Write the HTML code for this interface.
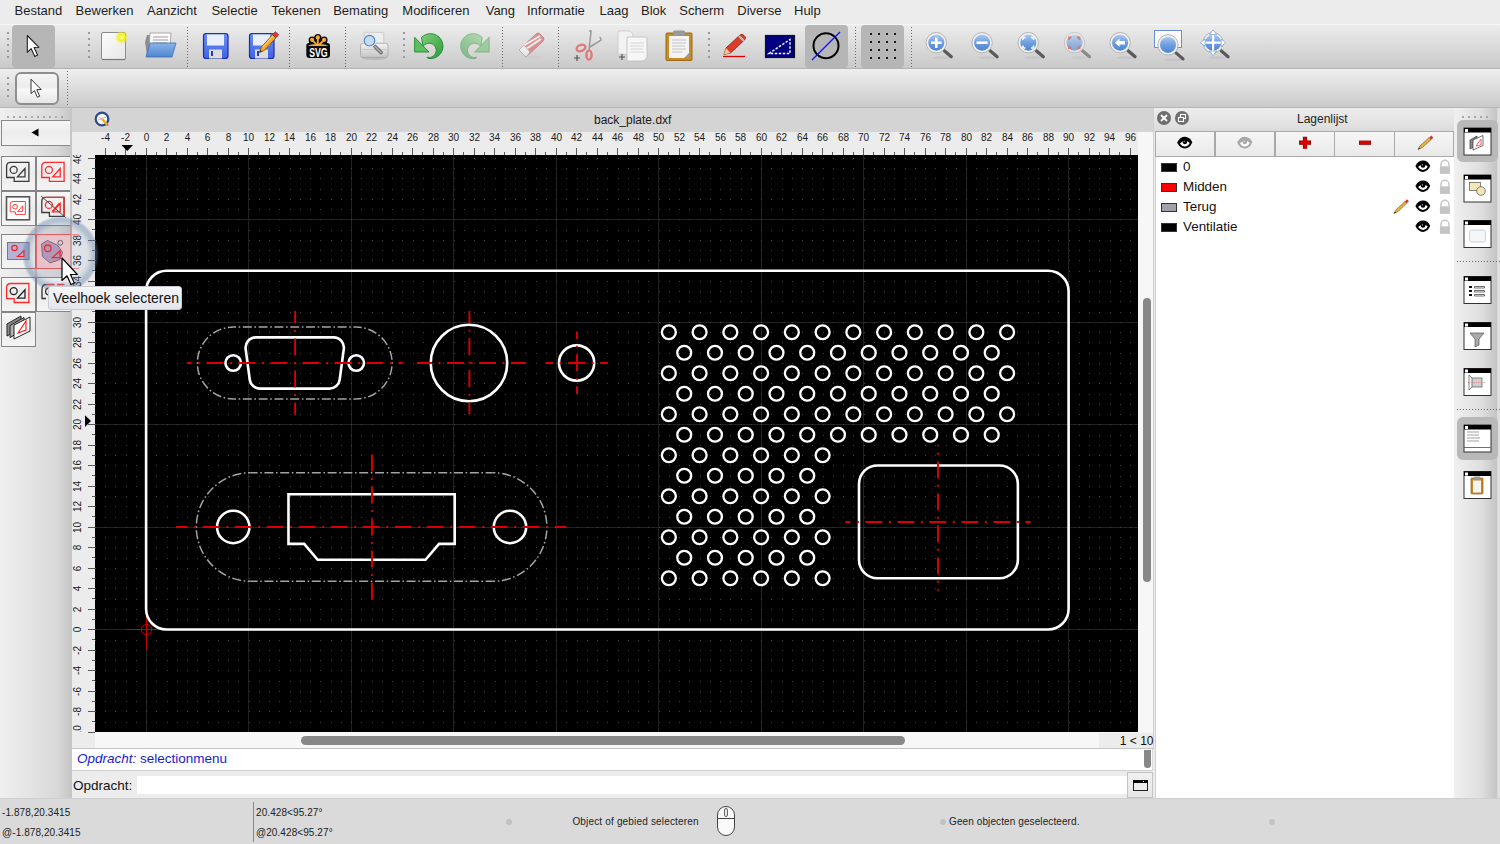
<!DOCTYPE html>
<html><head><meta charset="utf-8"><style>
*{box-sizing:border-box}
body{margin:0;width:1500px;height:844px;overflow:hidden;position:relative;background:#ececec;font-family:"Liberation Sans",sans-serif;color:#000}
.a{position:absolute}
.t{position:absolute;white-space:nowrap;line-height:1}
</style></head><body>
<div class="a" style="left:0px;top:0px;width:1500px;height:24px;background:#ececec"></div><div class="t" style="left:14.6px;top:4px;font-size:13px;color:#1e1e1e;">Bestand</div><div class="t" style="left:75.6px;top:4px;font-size:13px;color:#1e1e1e;">Bewerken</div><div class="t" style="left:147px;top:4px;font-size:13px;color:#1e1e1e;">Aanzicht</div><div class="t" style="left:211.4px;top:4px;font-size:13px;color:#1e1e1e;">Selectie</div><div class="t" style="left:271.6px;top:4px;font-size:13px;color:#1e1e1e;">Tekenen</div><div class="t" style="left:333.2px;top:4px;font-size:13px;color:#1e1e1e;">Bemating</div><div class="t" style="left:402.3px;top:4px;font-size:13px;color:#1e1e1e;">Modificeren</div><div class="t" style="left:485.7px;top:4px;font-size:13px;color:#1e1e1e;">Vang</div><div class="t" style="left:527px;top:4px;font-size:13px;color:#1e1e1e;">Informatie</div><div class="t" style="left:599.5px;top:4px;font-size:13px;color:#1e1e1e;">Laag</div><div class="t" style="left:641px;top:4px;font-size:13px;color:#1e1e1e;">Blok</div><div class="t" style="left:679.3px;top:4px;font-size:13px;color:#1e1e1e;">Scherm</div><div class="t" style="left:737.3px;top:4px;font-size:13px;color:#1e1e1e;">Diverse</div><div class="t" style="left:794px;top:4px;font-size:13px;color:#1e1e1e;">Hulp</div><div class="a" style="left:0px;top:24px;width:1500px;height:45px;background:linear-gradient(#ececec,#c9c9c9);border-top:1px solid #f6f6f6;border-bottom:1px solid #b2b2b2"></div><div class="a" style="left:0px;top:69px;width:1500px;height:39px;background:linear-gradient(#efefef,#cacaca);border-bottom:1px solid #b6b6b6"></div><div class="a" style="left:12px;top:25px;width:43px;height:43px;background:#b6b6b6;border-radius:4px"></div><div class="a" style="left:7px;top:32px;width:2px;height:2px;background:#9a9a9a"></div><div class="a" style="left:7px;top:38px;width:2px;height:2px;background:#9a9a9a"></div><div class="a" style="left:7px;top:44px;width:2px;height:2px;background:#9a9a9a"></div><div class="a" style="left:7px;top:50px;width:2px;height:2px;background:#9a9a9a"></div><div class="a" style="left:7px;top:56px;width:2px;height:2px;background:#9a9a9a"></div><div class="a" style="left:88px;top:32px;width:2px;height:2px;background:#9a9a9a"></div><div class="a" style="left:88px;top:38px;width:2px;height:2px;background:#9a9a9a"></div><div class="a" style="left:88px;top:44px;width:2px;height:2px;background:#9a9a9a"></div><div class="a" style="left:88px;top:50px;width:2px;height:2px;background:#9a9a9a"></div><div class="a" style="left:88px;top:56px;width:2px;height:2px;background:#9a9a9a"></div><div class="a" style="left:403px;top:32px;width:2px;height:2px;background:#9a9a9a"></div><div class="a" style="left:403px;top:38px;width:2px;height:2px;background:#9a9a9a"></div><div class="a" style="left:403px;top:44px;width:2px;height:2px;background:#9a9a9a"></div><div class="a" style="left:403px;top:50px;width:2px;height:2px;background:#9a9a9a"></div><div class="a" style="left:403px;top:56px;width:2px;height:2px;background:#9a9a9a"></div><div class="a" style="left:708px;top:32px;width:2px;height:2px;background:#9a9a9a"></div><div class="a" style="left:708px;top:38px;width:2px;height:2px;background:#9a9a9a"></div><div class="a" style="left:708px;top:44px;width:2px;height:2px;background:#9a9a9a"></div><div class="a" style="left:708px;top:50px;width:2px;height:2px;background:#9a9a9a"></div><div class="a" style="left:708px;top:56px;width:2px;height:2px;background:#9a9a9a"></div><div class="a" style="left:187px;top:27px;width:1px;height:40px;background-image:linear-gradient(#6a6a6a 50%,transparent 50%);background-size:1px 3px"></div><div class="a" style="left:289px;top:27px;width:1px;height:40px;background-image:linear-gradient(#6a6a6a 50%,transparent 50%);background-size:1px 3px"></div><div class="a" style="left:345px;top:27px;width:1px;height:40px;background-image:linear-gradient(#6a6a6a 50%,transparent 50%);background-size:1px 3px"></div><div class="a" style="left:502px;top:27px;width:1px;height:40px;background-image:linear-gradient(#6a6a6a 50%,transparent 50%);background-size:1px 3px"></div><div class="a" style="left:558px;top:27px;width:1px;height:40px;background-image:linear-gradient(#6a6a6a 50%,transparent 50%);background-size:1px 3px"></div><div class="a" style="left:855px;top:27px;width:1px;height:40px;background-image:linear-gradient(#6a6a6a 50%,transparent 50%);background-size:1px 3px"></div><div class="a" style="left:911px;top:27px;width:1px;height:40px;background-image:linear-gradient(#6a6a6a 50%,transparent 50%);background-size:1px 3px"></div><div class="a" style="left:805px;top:25px;width:43px;height:43px;background:#b6b6b6;border-radius:4px"></div><div class="a" style="left:861px;top:25px;width:43px;height:43px;background:#b6b6b6;border-radius:4px"></div><div class="a" style="left:7px;top:77px;width:2px;height:2px;background:#9a9a9a"></div><div class="a" style="left:7px;top:83px;width:2px;height:2px;background:#9a9a9a"></div><div class="a" style="left:7px;top:89px;width:2px;height:2px;background:#9a9a9a"></div><div class="a" style="left:7px;top:95px;width:2px;height:2px;background:#9a9a9a"></div><div class="a" style="left:14.5px;top:72px;width:44px;height:32.5px;background:linear-gradient(#f6f6f6,#ececec 45%,#f8f8f8 55%,#e6e6e6);border:2px solid #8e8e8e;border-radius:6px"></div><div class="a" style="left:67px;top:71px;width:1px;height:35px;background-image:linear-gradient(#6a6a6a 50%,transparent 50%);background-size:1px 3px"></div><svg class="a" style="left:0;top:0" width="1500" height="108" viewBox="0 0 1500 108"><defs>
<linearGradient id="gPaper" x1="0" y1="0" x2="1" y2="1"><stop offset="0" stop-color="#fdfdfd"/><stop offset="1" stop-color="#e6e6e6"/></linearGradient>
<radialGradient id="gGlow"><stop offset="0" stop-color="#ffffc0"/><stop offset="0.45" stop-color="#f4ee20"/><stop offset="1" stop-color="#f4ee20" stop-opacity="0"/></radialGradient>
<linearGradient id="gBlue" x1="0" y1="0" x2="0" y2="1"><stop offset="0" stop-color="#8ab4ea"/><stop offset="1" stop-color="#4f86d0"/></linearGradient>
<linearGradient id="gSave" x1="0" y1="0" x2="0" y2="1"><stop offset="0" stop-color="#6d8ff0"/><stop offset="1" stop-color="#3f63e6"/></linearGradient>
<linearGradient id="gGreen" x1="0" y1="0" x2="1" y2="1"><stop offset="0" stop-color="#7fd07a"/><stop offset="1" stop-color="#2e9a3a"/></linearGradient>
<linearGradient id="gLens" x1="0" y1="0" x2="0" y2="1"><stop offset="0" stop-color="#a9c9f2"/><stop offset="0.5" stop-color="#6f9fe0"/><stop offset="1" stop-color="#4c83d2"/></linearGradient>
<linearGradient id="gPrn" x1="0" y1="0" x2="0" y2="1"><stop offset="0" stop-color="#f4f4f4"/><stop offset="1" stop-color="#c4c4c4"/></linearGradient>
</defs><rect x="101.5" y="32.5" width="24" height="27" rx="1.5" fill="url(#gPaper)" stroke="#8c8c8c" stroke-width="1"/><path d="M102 59.5h23" stroke="#777" stroke-width="1.2"/><circle cx="121.7" cy="37.3" r="7" fill="url(#gGlow)"/><path d="M145 42 L147 35 H155 L156 37 H162 V55 H147 Z" fill="#8d8d8d"/><path d="M150 33 H171 L170 51 H149 Z" fill="#fafafa" stroke="#999" stroke-width="0.8"/><path d="M153 37 H168 M153 40 H168 M153 43 H167" stroke="#bdbdbd" stroke-width="1.5"/><path d="M150 43 H176 L172 57 H146 Z" fill="url(#gBlue)" stroke="#3d6db3" stroke-width="0.8"/><rect x="203.5" y="33.5" width="24.5" height="25" rx="2.5" fill="url(#gSave)" stroke="#1d2ca8" stroke-width="1.2"/><rect x="207" y="34.5" width="17" height="11" fill="#e8eefa"/><rect x="209" y="49.5" width="13" height="9" fill="#dcdcdc"/><rect x="211" y="51" width="2" height="5" fill="#2040c0"/><rect x="249.5" y="33.5" width="24.5" height="25" rx="2.5" fill="url(#gSave)" stroke="#1d2ca8" stroke-width="1.2"/><rect x="253" y="34.5" width="17" height="11" fill="#e8eefa"/><rect x="255" y="49.5" width="13" height="9" fill="#dcdcdc"/><rect x="257" y="51" width="2" height="5" fill="#2040c0"/><g transform="translate(259.5 52.5) rotate(-47.80027916803794)"><path d="M0 0 L5 -2.3 H22.05263902179585 V2.3 H5 Z" fill="#f0a830" stroke="#7a4a10" stroke-width="0.8"/><path d="M6 -1.15 H22.05263902179585" stroke="#ffd070" stroke-width="1"/><rect x="22.05263902179585" y="-2.3" width="4" height="4.6" fill="#e03a3a" stroke="#7a2020" stroke-width="0.6"/><path d="M0 0 L2.5 -1 V1 Z" fill="#222"/></g><g><rect x="306.3" y="42.9" width="23.7" height="15" rx="2.8" fill="#0a0a0a"/><circle cx="317.8" cy="37.6" r="3.6" fill="#0a0a0a"/><circle cx="312.1" cy="40" r="3.5" fill="#0a0a0a"/><circle cx="324.1" cy="40" r="3.5" fill="#0a0a0a"/><path d="M311 44 L317.8 37.6 L324.6 44 Z M309 41 H327 V44 H309 Z" fill="#0a0a0a"/><path d="M312.1 39.8 L316.5 44.5 M317.8 37.4 V44.5 M324.1 39.8 L319.5 44.5" stroke="#f7ab36" stroke-width="1.8" stroke-linecap="round"/><circle cx="317.8" cy="37.4" r="2.1" fill="#f7ab36"/><circle cx="312.1" cy="39.8" r="2.1" fill="#f7ab36"/><circle cx="324.1" cy="39.8" r="2.1" fill="#f7ab36"/><path d="M307.7 45.9 Q310 44.3 314 44.3 H322 Q326 44.3 328.3 45.9 Z" fill="#f7ab36"/><text x="309.2" y="56.9" textLength="18.4" lengthAdjust="spacingAndGlyphs" font-family="Liberation Sans" font-weight="bold" font-size="13" fill="#fff">SVG</text></g><rect x="364.3" y="32.3" width="19.5" height="13.5" rx="1" fill="#eeeeee" stroke="#c4c4c4" stroke-width="0.8"/><ellipse cx="374" cy="58.3" rx="12" ry="1.6" fill="#9a9a9a" opacity="0.45"/><path d="M360.5 46 Q360.5 43.3 363 43.3 H385.5 Q388 43.3 388 46 V55.5 Q388 57.4 386 57.4 H362.5 Q360.5 57.4 360.5 55.5 Z" fill="url(#gPrn)" stroke="#a4a4a4" stroke-width="0.8"/><path d="M362 49.5 H386" stroke="#c0c0c0" stroke-width="0.8"/><path d="M375 46.5 L381 52.5" stroke="#555" stroke-width="3.6" stroke-linecap="round"/><path d="M375 46.5 L381 52.5" stroke="#a8a8a8" stroke-width="2" stroke-linecap="round"/><circle cx="369.5" cy="40.7" r="6.6" fill="#fafafa" stroke="#d8d8d8" stroke-width="0.6"/><circle cx="369.5" cy="40.7" r="5.3" fill="#c6daf2" stroke="#4f86cf" stroke-width="1.2"/><g id="undo"><path d="M421.5 37.5 A12.5 12.5 0 1 1 428 58.4 L427 57.3 A7.2 7.2 0 1 0 423 46.5 Z" fill="url(#gGreen)" stroke="#1f8a30" stroke-width="0.9" stroke-linejoin="round"/><path d="M414.6 37.3 V52 H429 Z" fill="#5cc060" stroke="#1f8a30" stroke-width="0.9" stroke-linejoin="round"/></g><g opacity="0.5" transform="translate(903.7 0) scale(-1 1)"><path d="M421.5 37.5 A12.5 12.5 0 1 1 428 58.4 L427 57.3 A7.2 7.2 0 1 0 423 46.5 Z" fill="url(#gGreen)" stroke="#1f8a30" stroke-width="0.9"/><path d="M414.6 37.3 V52 H429 Z" fill="#5cc060" stroke="#1f8a30" stroke-width="0.9"/></g><g opacity="0.7"><ellipse cx="533" cy="57" rx="10" ry="1.5" fill="#ccc"/><path d="M519 50 L536 34 Q538 32 540 34 L543 37 Q545 39 543 41 L526 57 Z" fill="#e07070" stroke="#b05050" stroke-width="0.8"/><path d="M522 47 L539 31.5 L544 36.5 L527 52 Z" fill="#f8f0f0" opacity="0.0"/><path d="M523 46 L540 36 M526 49 L541 39" stroke="#fbfbfb" stroke-width="2"/><path d="M519 50 L524 45 L530 52 L526 57 Z" fill="#f4f4f4" stroke="#999" stroke-width="0.7"/></g><path d="M589 31 L591 31 L589 50 M600 37 L601 40 L590 47" stroke="#9a9a9a" stroke-width="1.6" fill="#f0f0f0"/><ellipse cx="581" cy="48" rx="4.5" ry="3" fill="none" stroke="#e07a7a" stroke-width="2.4" transform="rotate(-20 581 48)"/><ellipse cx="589" cy="55" rx="2.6" ry="4.6" fill="none" stroke="#e07a7a" stroke-width="2.4"/><path d="M574 58 H580 M577 55 V61" stroke="#555" stroke-width="1.2"/><path d="M618 31 H630 L633 34 V54 H618 Z" fill="#f2f2f2" stroke="#c8c8c8" stroke-width="0.8"/><path d="M627 37 H647 V57 L644 61 H627 Z" fill="#f6f6f6" stroke="#bdbdbd" stroke-width="0.8"/><path d="M630 43 H644 M630 46 H644 M630 49 H643 M630 52 H644" stroke="#d0d0d0" stroke-width="0.8"/><path d="M619 57 H625 M622 54 V60" stroke="#555" stroke-width="1.2"/><rect x="666" y="33" width="26" height="27.5" rx="1" fill="#c98a2a" stroke="#9a6a1a" stroke-width="1"/><rect x="669" y="36" width="20" height="22" fill="#f4f4f4"/><path d="M672 40 H686 M672 43 H686 M672 46 H685 M672 49 H686 M672 52 H682" stroke="#bdbdbd" stroke-width="0.9"/><rect x="673" y="30.5" width="12" height="5" rx="1.5" fill="#9a9a9a"/><path d="M684 58 L689 53 V58 Z" fill="#9a9a9a"/><path d="M723 56.5 H745" stroke="#e00000" stroke-width="1.3"/><path d="M724 54.5 L726 48 L740 35 Q742 33.5 744 35.5 L745 36.5 Q746 38.5 744.5 40 L730.5 53 Z" fill="#e03a2a" stroke="#7a2a10" stroke-width="0.8"/><path d="M724 54.5 L726 48 L730.5 53 Z" fill="#f0c890"/><path d="M739 36 L744 41" stroke="#c0c0c0" stroke-width="2"/><rect x="765.5" y="35.5" width="29" height="22" fill="#000080" stroke="#111" stroke-width="1.2"/><path d="M769 53.5 L790 39.5 V53.5 Z" fill="none" stroke="#fff" stroke-width="1.4" stroke-dasharray="2.5 1.5"/><circle cx="826" cy="45.7" r="12.5" fill="none" stroke="#000" stroke-width="2"/><path d="M812 60 L840 32" stroke="#1010ff" stroke-width="1.2"/><rect x="870" y="33" width="2" height="2" fill="#111"/><rect x="870" y="41" width="2" height="2" fill="#111"/><rect x="870" y="49" width="2" height="2" fill="#111"/><rect x="870" y="57" width="2" height="2" fill="#111"/><rect x="878" y="33" width="2" height="2" fill="#111"/><rect x="878" y="41" width="2" height="2" fill="#111"/><rect x="878" y="49" width="2" height="2" fill="#111"/><rect x="878" y="57" width="2" height="2" fill="#111"/><rect x="886" y="33" width="2" height="2" fill="#111"/><rect x="886" y="41" width="2" height="2" fill="#111"/><rect x="886" y="49" width="2" height="2" fill="#111"/><rect x="886" y="57" width="2" height="2" fill="#111"/><rect x="894" y="33" width="2" height="2" fill="#111"/><rect x="894" y="41" width="2" height="2" fill="#111"/><rect x="894" y="49" width="2" height="2" fill="#111"/><rect x="894" y="57" width="2" height="2" fill="#111"/><g opacity="1.0"><ellipse cx="941.3" cy="57.7" rx="9" ry="1.5" fill="#bbb" opacity="0.5"/><path d="M944.3 50.7 L951.3 56.7" stroke="#5a5a5a" stroke-width="3.2" stroke-linecap="round"/><circle cx="936.3" cy="42.7" r="10.2" fill="#efefef" stroke="#b4b4b4" stroke-width="1"/><circle cx="936.3" cy="42.7" r="8" fill="url(#gLens)"/><path d="M931 42.7 H941.6 M936.3 37.4 V48" stroke="#fff" stroke-width="2.6"/></g><g opacity="1.0"><ellipse cx="987.1" cy="57.7" rx="9" ry="1.5" fill="#bbb" opacity="0.5"/><path d="M990.1 50.7 L997.1 56.7" stroke="#5a5a5a" stroke-width="3.2" stroke-linecap="round"/><circle cx="982.1" cy="42.7" r="10.2" fill="#efefef" stroke="#b4b4b4" stroke-width="1"/><circle cx="982.1" cy="42.7" r="8" fill="url(#gLens)"/><path d="M976.5 42.7 H987.7" stroke="#fff" stroke-width="2.6"/></g><g opacity="1.0"><ellipse cx="1033.3" cy="57.7" rx="9" ry="1.5" fill="#bbb" opacity="0.5"/><path d="M1036.3 50.7 L1043.3 56.7" stroke="#5a5a5a" stroke-width="3.2" stroke-linecap="round"/><circle cx="1028.3" cy="42.7" r="10.2" fill="#efefef" stroke="#b4b4b4" stroke-width="1"/><circle cx="1028.3" cy="42.7" r="8" fill="url(#gLens)"/><path d="M1023 40 V37.5 H1025.5 M1031 37.5 H1033.5 V40 M1033.5 45.5 V48 H1031 M1025.5 48 H1023 V45.5" stroke="#fff" stroke-width="1.6" fill="none"/></g><g opacity="0.6"><ellipse cx="1079.5" cy="57.7" rx="9" ry="1.5" fill="#bbb" opacity="0.5"/><path d="M1082.5 50.7 L1089.5 56.7" stroke="#5a5a5a" stroke-width="3.2" stroke-linecap="round"/><circle cx="1074.5" cy="42.7" r="10.2" fill="#efefef" stroke="#b4b4b4" stroke-width="1"/><circle cx="1074.5" cy="42.7" r="8" fill="url(#gLens)"/><path d="M1069 40 V37.5 H1071.5 M1077 37.5 H1079.5 V40 M1079.5 45.5 V48 H1077 M1071.5 48 H1069 V45.5" stroke="#e03030" stroke-width="1.8" fill="none"/></g><g opacity="1.0"><ellipse cx="1125.1" cy="57.7" rx="9" ry="1.5" fill="#bbb" opacity="0.5"/><path d="M1128.1 50.7 L1135.1 56.7" stroke="#5a5a5a" stroke-width="3.2" stroke-linecap="round"/><circle cx="1120.1" cy="42.7" r="10.2" fill="#efefef" stroke="#b4b4b4" stroke-width="1"/><circle cx="1120.1" cy="42.7" r="8" fill="url(#gLens)"/><path d="M1115 42.7 L1119.5 38.5 V41 H1125 V44.5 H1119.5 V47 Z" fill="#fff"/></g><rect x="1154.5" y="30.5" width="27" height="17" fill="#fafafa" stroke="#6a8fd0" stroke-width="1"/><g opacity="1.0"><ellipse cx="1173" cy="59.9" rx="9" ry="1.5" fill="#bbb" opacity="0.5"/><path d="M1176 52.9 L1183 58.9" stroke="#5a5a5a" stroke-width="3.2" stroke-linecap="round"/><circle cx="1168" cy="44.9" r="10.2" fill="#efefef" stroke="#b4b4b4" stroke-width="1"/><circle cx="1168" cy="44.9" r="8" fill="url(#gLens)"/></g><g opacity="1.0"><ellipse cx="1218.1" cy="57.7" rx="9" ry="1.5" fill="#bbb" opacity="0.5"/><path d="M1221.1 50.7 L1228.1 56.7" stroke="#5a5a5a" stroke-width="3.2" stroke-linecap="round"/><circle cx="1213.1" cy="42.7" r="10.2" fill="#efefef" stroke="#b4b4b4" stroke-width="1"/><circle cx="1213.1" cy="42.7" r="8" fill="url(#gLens)"/><path d="M1213.1 31 V54.5 M1201.5 42.7 H1224.7" stroke="#fff" stroke-width="2.2"/><path d="M1213.1 30 L1209.5 34.5 H1216.7 Z M1213.1 55.5 L1209.5 51 H1216.7 Z M1200.5 42.7 L1205 39 V46.4 Z M1225.7 42.7 L1221.2 39 V46.4 Z" fill="#fff" stroke="#5a86d0" stroke-width="0.6"/></g><path d="M31 79.2 V93.6 L34.4 90.6 L37.4 97.2 L39.7 96.2 L36.8 89.7 L41.2 89.5 Z" fill="#fff" stroke="#333" stroke-width="1" stroke-linejoin="round"/><path d="M27.3 35.5 V52.3 L31.2 48.7 L34.8 56.4 L37.6 55.1 L34.1 47.5 L39 47.3 Z" fill="#fff" stroke="#222" stroke-width="1.1" stroke-linejoin="round"/></svg><div class="a" style="left:0px;top:108px;width:72px;height:690px;background:linear-gradient(90deg,#f0f0f0,#d8d8d8 80%,#c4c4c4)"></div><svg class="a" style="left:0;top:108px" width="72" height="690" viewBox="0 108 72 690"><defs><linearGradient id="gBtn" x1="0" y1="0" x2="0" y2="1"><stop offset="0" stop-color="#f6f6f6"/><stop offset="0.5" stop-color="#ececec"/><stop offset="1" stop-color="#f4f4f4"/></linearGradient></defs><rect x="7" y="116" width="2" height="2" fill="#a8a8a8"/><rect x="13" y="116" width="2" height="2" fill="#a8a8a8"/><rect x="19" y="116" width="2" height="2" fill="#a8a8a8"/><rect x="25" y="116" width="2" height="2" fill="#a8a8a8"/><rect x="31" y="116" width="2" height="2" fill="#a8a8a8"/><rect x="37" y="116" width="2" height="2" fill="#a8a8a8"/><rect x="43" y="116" width="2" height="2" fill="#a8a8a8"/><rect x="49" y="116" width="2" height="2" fill="#a8a8a8"/><rect x="55" y="116" width="2" height="2" fill="#a8a8a8"/><rect x="61" y="116" width="2" height="2" fill="#a8a8a8"/><rect x="1.5" y="120.5" width="69" height="25" fill="url(#gBtn)" stroke="#8a8a8a" stroke-width="1"/><path d="M31.5 132.5 L38.5 128.5 V136.5 Z" fill="#000"/><rect x="1.5" y="156.5" width="34" height="34" fill="url(#gBtn)" stroke="#858585" stroke-width="1"/><rect x="36.5" y="156.5" width="34" height="34" fill="url(#gBtn)" stroke="#858585" stroke-width="1"/><rect x="1.5" y="191.5" width="34" height="34" fill="url(#gBtn)" stroke="#858585" stroke-width="1"/><rect x="36.5" y="191.5" width="34" height="34" fill="url(#gBtn)" stroke="#858585" stroke-width="1"/><rect x="1.5" y="234.5" width="34" height="34" fill="url(#gBtn)" stroke="#858585" stroke-width="1"/><rect x="36.5" y="234.5" width="34" height="34" fill="#f3c9ca" stroke="#e07070" stroke-width="1"/><rect x="1.5" y="277.5" width="34" height="34" fill="url(#gBtn)" stroke="#858585" stroke-width="1"/><rect x="36.5" y="277.5" width="34" height="34" fill="url(#gBtn)" stroke="#858585" stroke-width="1"/><rect x="1.5" y="312.5" width="34" height="34" fill="url(#gBtn)" stroke="#858585" stroke-width="1"/><path d="M10.60 162.30L28.90 162.30L28.90 181.30L14.20 181.30L14.20 177.50L6.60 177.50L6.60 166.30Q6.60 162.30 10.60 162.30Z" fill="none" stroke="#3a3a3a" stroke-width="1.3"/><circle cx="13.70" cy="169.90" r="3.50" fill="none" stroke="#3a3a3a" stroke-width="1.3"/><path d="M25.00 168.50 L25.00 176.90 L17.50 176.90 Z" fill="none" stroke="#3a3a3a" stroke-width="1.3" stroke-linejoin="miter"/><path d="M45.80 162.30L64.10 162.30L64.10 181.30L49.40 181.30L49.40 177.50L41.80 177.50L41.80 166.30Q41.80 162.30 45.80 162.30Z" fill="none" stroke="#ff2a2a" stroke-width="1.3"/><circle cx="48.90" cy="169.90" r="3.50" fill="none" stroke="#ff2a2a" stroke-width="1.3"/><path d="M60.20 168.50 L60.20 176.90 L52.70 176.90 Z" fill="none" stroke="#ff2a2a" stroke-width="1.3" stroke-linejoin="miter"/><rect x="6.5" y="196.8" width="23" height="23" fill="#fff" stroke="#555" stroke-width="1.6"/><path d="M12.92 201.50L25.36 201.50L25.36 214.42L15.37 214.42L15.37 211.84L10.20 211.84L10.20 204.22Q10.20 201.50 12.92 201.50Z" fill="none" stroke="#ff4040" stroke-width="1"/><circle cx="15.03" cy="206.67" r="2.38" fill="none" stroke="#ff4040" stroke-width="1"/><path d="M22.71 205.72 L22.71 211.43 L17.61 211.43 Z" fill="none" stroke="#ff4040" stroke-width="1" stroke-linejoin="miter"/><path d="M45.80 197.30L64.10 197.30L64.10 216.30L49.40 216.30L49.40 212.50L41.80 212.50L41.80 201.30Q41.80 197.30 45.80 197.30Z" fill="none" stroke="#3a3a3a" stroke-width="1.3"/><circle cx="48.90" cy="204.90" r="3.50" fill="none" stroke="#ff2a2a" stroke-width="1.3"/><path d="M60.20 203.50 L60.20 211.90 L52.70 211.90 Z" fill="none" stroke="#ff2a2a" stroke-width="1.3" stroke-linejoin="miter"/><path d="M44 197.3 H64 V216 M59.5 203 L52 211.6" stroke="#ff2a2a" stroke-width="1.3" fill="none"/><path d="M41 196 L65.5 217.5" stroke="#444" stroke-width="1"/><rect x="7.5" y="242.5" width="21.5" height="17" fill="#b4b4d8" stroke="#7a7a7a" stroke-width="1"/><circle cx="14.5" cy="248" r="2.7" fill="none" stroke="#ff2020" stroke-width="1.2"/><path d="M24 250.5 V256.5 H17.5 Z" fill="none" stroke="#ff2020" stroke-width="1.2"/><path d="M41.5 244 L47.5 240.5 L58 245.5 L62.5 252.5 L60 259.5 L50 263 L42.5 256.5 Z" fill="#b69ab8" stroke="#7a5a7a" stroke-width="0.9"/><circle cx="47.8" cy="248.3" r="3.3" fill="none" stroke="#ff2020" stroke-width="1.3"/><path d="M60 250.8 V257.6 H52.5 Z" fill="none" stroke="#ff2020" stroke-width="1.3"/><circle cx="60.3" cy="242.8" r="2.4" fill="none" stroke="#666" stroke-width="1"/><path d="M10.60 283.50L28.90 283.50L28.90 302.50L14.20 302.50L14.20 298.70L6.60 298.70L6.60 287.50Q6.60 283.50 10.60 283.50Z" fill="none" stroke="#ff2a2a" stroke-width="1.3"/><circle cx="13.70" cy="291.10" r="3.50" fill="none" stroke="#222" stroke-width="1.3"/><path d="M25.00 289.70 L25.00 298.10 L17.50 298.10 Z" fill="none" stroke="#222" stroke-width="1.3" stroke-linejoin="miter"/><path d="M46.5 284.5 Q42 284.5 42 289 V298.5 H46" fill="none" stroke="#333" stroke-width="1.3"/><path d="M46.5 284.5 H64.5" stroke="#ff3030" stroke-width="1.3" stroke-dasharray="8 2.5"/><circle cx="49" cy="291.5" r="3.4" fill="none" stroke="#333" stroke-width="1.3"/><path d="M7 336 V324 L21 316 V328 Z" fill="#8a8a8a" stroke="#222" stroke-width="1"/><path d="M10 337.5 V325.5 L24 317.5 V329.5 Z" fill="#b0b0b0" stroke="#222" stroke-width="1"/><path d="M14 339 V325 L30 317 V331 Z" fill="#fff" stroke="#222" stroke-width="1"/><path d="M18 333 L26 321 V330 Z" fill="none" stroke="#ff2020" stroke-width="1.2"/></svg><div class="a" style="left:70px;top:108px;width:1084px;height:24px;background:#d4d4d4;border-left:2px solid #c6c6c6"></div><div class="t" style="left:594px;top:114px;font-size:12px;color:#1a1a1a;">back_plate.dxf</div><svg class="a" style="left:94px;top:111px" width="16" height="16" viewBox="0 0 16 16"><circle cx="8" cy="8" r="6.3" fill="#f4f4f4" stroke="#2a4a8a" stroke-width="2.2"/><path d="M4 9 L12 6 M5 6 L11 11" stroke="#d08080" stroke-width="0.6"/><path d="M8 8 L13.5 14" stroke="#e8b020" stroke-width="2.2"/><circle cx="13.6" cy="14" r="1.1" fill="#e07070"/></svg><div class="a" style="left:70px;top:132px;width:1084px;height:23px;background:#ececec;border-left:2px solid #c6c6c6"></div><div class="a" style="left:70px;top:155px;width:25px;height:593px;background:#ececec;border-left:2px solid #c6c6c6"></div><div class="a" style="left:1138px;top:132px;width:16px;height:616px;background:#f7f7f7"></div><div class="a" style="left:1153px;top:108px;width:2px;height:690px;background:#d0d0d0"></div><div class="a" style="left:95px;top:732px;width:1043px;height:16px;background:#f7f7f7"></div><div class="a" style="left:1143px;top:298px;width:8px;height:284px;background:#888;border-radius:4px"></div><div class="a" style="left:301px;top:736px;width:604px;height:9px;background:#888;border-radius:4.5px"></div><div class="a" style="left:1099px;top:733px;width:54px;height:15px;background:#ececec"></div><div class="t" style="right:346.5px;top:734.5px;font-size:12px;color:#111">1 &lt; 10</div><svg class="a" style="left:95px;top:155px" width="1043" height="577" viewBox="95 155 1043 577"><rect x="95" y="155" width="1043" height="577" fill="#000"/><path d="M146.5 155V732M248.5 155V732M351.5 155V732M453.5 155V732M556.5 155V732M658.5 155V732M761.5 155V732M863.5 155V732M966.5 155V732M1068.5 155V732M95 629.5H1138M95 527.5H1138M95 424.5H1138M95 322.5H1138M95 219.5H1138" stroke="#222" stroke-width="1" fill="none"/>
<path d="M95 722h1v1h-1zm10 0h1v1h-1zm10 0h1v1h-1zm11 0h1v1h-1zm10 0h1v1h-1zm10 0h1v1h-1zm10 0h1v1h-1zm11 0h1v1h-1zm10 0h1v1h-1zm10 0h1v1h-1zm10 0h1v1h-1zm11 0h1v1h-1zm10 0h1v1h-1zm10 0h1v1h-1zm10 0h1v1h-1zm11 0h1v1h-1zm10 0h1v1h-1zm10 0h1v1h-1zm10 0h1v1h-1zm11 0h1v1h-1zm10 0h1v1h-1zm10 0h1v1h-1zm10 0h1v1h-1zm11 0h1v1h-1zm10 0h1v1h-1zm10 0h1v1h-1zm10 0h1v1h-1zm11 0h1v1h-1zm10 0h1v1h-1zm10 0h1v1h-1zm10 0h1v1h-1zm11 0h1v1h-1zm10 0h1v1h-1zm10 0h1v1h-1zm10 0h1v1h-1zm11 0h1v1h-1zm10 0h1v1h-1zm10 0h1v1h-1zm10 0h1v1h-1zm11 0h1v1h-1zm10 0h1v1h-1zm10 0h1v1h-1zm10 0h1v1h-1zm11 0h1v1h-1zm10 0h1v1h-1zm10 0h1v1h-1zm10 0h1v1h-1zm11 0h1v1h-1zm10 0h1v1h-1zm10 0h1v1h-1zm10 0h1v1h-1zm11 0h1v1h-1zm10 0h1v1h-1zm10 0h1v1h-1zm10 0h1v1h-1zm11 0h1v1h-1zm10 0h1v1h-1zm10 0h1v1h-1zm10 0h1v1h-1zm11 0h1v1h-1zm10 0h1v1h-1zm10 0h1v1h-1zm10 0h1v1h-1zm11 0h1v1h-1zm10 0h1v1h-1zm10 0h1v1h-1zm10 0h1v1h-1zm11 0h1v1h-1zm10 0h1v1h-1zm10 0h1v1h-1zm10 0h1v1h-1zm11 0h1v1h-1zm10 0h1v1h-1zm10 0h1v1h-1zm10 0h1v1h-1zm11 0h1v1h-1zm10 0h1v1h-1zm10 0h1v1h-1zm10 0h1v1h-1zm11 0h1v1h-1zm10 0h1v1h-1zm10 0h1v1h-1zm10 0h1v1h-1zm11 0h1v1h-1zm10 0h1v1h-1zm10 0h1v1h-1zm10 0h1v1h-1zm11 0h1v1h-1zm10 0h1v1h-1zm10 0h1v1h-1zm10 0h1v1h-1zm11 0h1v1h-1zm10 0h1v1h-1zm10 0h1v1h-1zm10 0h1v1h-1zm11 0h1v1h-1zm10 0h1v1h-1zm10 0h1v1h-1zm10 0h1v1h-1zm11 0h1v1h-1zm10 0h1v1h-1zm10 0h1v1h-1zM95 711h1v1h-1zm10 0h1v1h-1zm10 0h1v1h-1zm11 0h1v1h-1zm10 0h1v1h-1zm10 0h1v1h-1zm10 0h1v1h-1zm11 0h1v1h-1zm10 0h1v1h-1zm10 0h1v1h-1zm10 0h1v1h-1zm11 0h1v1h-1zm10 0h1v1h-1zm10 0h1v1h-1zm10 0h1v1h-1zm11 0h1v1h-1zm10 0h1v1h-1zm10 0h1v1h-1zm10 0h1v1h-1zm11 0h1v1h-1zm10 0h1v1h-1zm10 0h1v1h-1zm10 0h1v1h-1zm11 0h1v1h-1zm10 0h1v1h-1zm10 0h1v1h-1zm10 0h1v1h-1zm11 0h1v1h-1zm10 0h1v1h-1zm10 0h1v1h-1zm10 0h1v1h-1zm11 0h1v1h-1zm10 0h1v1h-1zm10 0h1v1h-1zm10 0h1v1h-1zm11 0h1v1h-1zm10 0h1v1h-1zm10 0h1v1h-1zm10 0h1v1h-1zm11 0h1v1h-1zm10 0h1v1h-1zm10 0h1v1h-1zm10 0h1v1h-1zm11 0h1v1h-1zm10 0h1v1h-1zm10 0h1v1h-1zm10 0h1v1h-1zm11 0h1v1h-1zm10 0h1v1h-1zm10 0h1v1h-1zm10 0h1v1h-1zm11 0h1v1h-1zm10 0h1v1h-1zm10 0h1v1h-1zm10 0h1v1h-1zm11 0h1v1h-1zm10 0h1v1h-1zm10 0h1v1h-1zm10 0h1v1h-1zm11 0h1v1h-1zm10 0h1v1h-1zm10 0h1v1h-1zm10 0h1v1h-1zm11 0h1v1h-1zm10 0h1v1h-1zm10 0h1v1h-1zm10 0h1v1h-1zm11 0h1v1h-1zm10 0h1v1h-1zm10 0h1v1h-1zm10 0h1v1h-1zm11 0h1v1h-1zm10 0h1v1h-1zm10 0h1v1h-1zm10 0h1v1h-1zm11 0h1v1h-1zm10 0h1v1h-1zm10 0h1v1h-1zm10 0h1v1h-1zm11 0h1v1h-1zm10 0h1v1h-1zm10 0h1v1h-1zm10 0h1v1h-1zm11 0h1v1h-1zm10 0h1v1h-1zm10 0h1v1h-1zm10 0h1v1h-1zm11 0h1v1h-1zm10 0h1v1h-1zm10 0h1v1h-1zm10 0h1v1h-1zm11 0h1v1h-1zm10 0h1v1h-1zm10 0h1v1h-1zm10 0h1v1h-1zm11 0h1v1h-1zm10 0h1v1h-1zm10 0h1v1h-1zm10 0h1v1h-1zm11 0h1v1h-1zm10 0h1v1h-1zm10 0h1v1h-1zM95 701h1v1h-1zm10 0h1v1h-1zm10 0h1v1h-1zm11 0h1v1h-1zm10 0h1v1h-1zm10 0h1v1h-1zm10 0h1v1h-1zm11 0h1v1h-1zm10 0h1v1h-1zm10 0h1v1h-1zm10 0h1v1h-1zm11 0h1v1h-1zm10 0h1v1h-1zm10 0h1v1h-1zm10 0h1v1h-1zm11 0h1v1h-1zm10 0h1v1h-1zm10 0h1v1h-1zm10 0h1v1h-1zm11 0h1v1h-1zm10 0h1v1h-1zm10 0h1v1h-1zm10 0h1v1h-1zm11 0h1v1h-1zm10 0h1v1h-1zm10 0h1v1h-1zm10 0h1v1h-1zm11 0h1v1h-1zm10 0h1v1h-1zm10 0h1v1h-1zm10 0h1v1h-1zm11 0h1v1h-1zm10 0h1v1h-1zm10 0h1v1h-1zm10 0h1v1h-1zm11 0h1v1h-1zm10 0h1v1h-1zm10 0h1v1h-1zm10 0h1v1h-1zm11 0h1v1h-1zm10 0h1v1h-1zm10 0h1v1h-1zm10 0h1v1h-1zm11 0h1v1h-1zm10 0h1v1h-1zm10 0h1v1h-1zm10 0h1v1h-1zm11 0h1v1h-1zm10 0h1v1h-1zm10 0h1v1h-1zm10 0h1v1h-1zm11 0h1v1h-1zm10 0h1v1h-1zm10 0h1v1h-1zm10 0h1v1h-1zm11 0h1v1h-1zm10 0h1v1h-1zm10 0h1v1h-1zm10 0h1v1h-1zm11 0h1v1h-1zm10 0h1v1h-1zm10 0h1v1h-1zm10 0h1v1h-1zm11 0h1v1h-1zm10 0h1v1h-1zm10 0h1v1h-1zm10 0h1v1h-1zm11 0h1v1h-1zm10 0h1v1h-1zm10 0h1v1h-1zm10 0h1v1h-1zm11 0h1v1h-1zm10 0h1v1h-1zm10 0h1v1h-1zm10 0h1v1h-1zm11 0h1v1h-1zm10 0h1v1h-1zm10 0h1v1h-1zm10 0h1v1h-1zm11 0h1v1h-1zm10 0h1v1h-1zm10 0h1v1h-1zm10 0h1v1h-1zm11 0h1v1h-1zm10 0h1v1h-1zm10 0h1v1h-1zm10 0h1v1h-1zm11 0h1v1h-1zm10 0h1v1h-1zm10 0h1v1h-1zm10 0h1v1h-1zm11 0h1v1h-1zm10 0h1v1h-1zm10 0h1v1h-1zm10 0h1v1h-1zm11 0h1v1h-1zm10 0h1v1h-1zm10 0h1v1h-1zm10 0h1v1h-1zm11 0h1v1h-1zm10 0h1v1h-1zm10 0h1v1h-1zM95 691h1v1h-1zm10 0h1v1h-1zm10 0h1v1h-1zm11 0h1v1h-1zm10 0h1v1h-1zm10 0h1v1h-1zm10 0h1v1h-1zm11 0h1v1h-1zm10 0h1v1h-1zm10 0h1v1h-1zm10 0h1v1h-1zm11 0h1v1h-1zm10 0h1v1h-1zm10 0h1v1h-1zm10 0h1v1h-1zm11 0h1v1h-1zm10 0h1v1h-1zm10 0h1v1h-1zm10 0h1v1h-1zm11 0h1v1h-1zm10 0h1v1h-1zm10 0h1v1h-1zm10 0h1v1h-1zm11 0h1v1h-1zm10 0h1v1h-1zm10 0h1v1h-1zm10 0h1v1h-1zm11 0h1v1h-1zm10 0h1v1h-1zm10 0h1v1h-1zm10 0h1v1h-1zm11 0h1v1h-1zm10 0h1v1h-1zm10 0h1v1h-1zm10 0h1v1h-1zm11 0h1v1h-1zm10 0h1v1h-1zm10 0h1v1h-1zm10 0h1v1h-1zm11 0h1v1h-1zm10 0h1v1h-1zm10 0h1v1h-1zm10 0h1v1h-1zm11 0h1v1h-1zm10 0h1v1h-1zm10 0h1v1h-1zm10 0h1v1h-1zm11 0h1v1h-1zm10 0h1v1h-1zm10 0h1v1h-1zm10 0h1v1h-1zm11 0h1v1h-1zm10 0h1v1h-1zm10 0h1v1h-1zm10 0h1v1h-1zm11 0h1v1h-1zm10 0h1v1h-1zm10 0h1v1h-1zm10 0h1v1h-1zm11 0h1v1h-1zm10 0h1v1h-1zm10 0h1v1h-1zm10 0h1v1h-1zm11 0h1v1h-1zm10 0h1v1h-1zm10 0h1v1h-1zm10 0h1v1h-1zm11 0h1v1h-1zm10 0h1v1h-1zm10 0h1v1h-1zm10 0h1v1h-1zm11 0h1v1h-1zm10 0h1v1h-1zm10 0h1v1h-1zm10 0h1v1h-1zm11 0h1v1h-1zm10 0h1v1h-1zm10 0h1v1h-1zm10 0h1v1h-1zm11 0h1v1h-1zm10 0h1v1h-1zm10 0h1v1h-1zm10 0h1v1h-1zm11 0h1v1h-1zm10 0h1v1h-1zm10 0h1v1h-1zm10 0h1v1h-1zm11 0h1v1h-1zm10 0h1v1h-1zm10 0h1v1h-1zm10 0h1v1h-1zm11 0h1v1h-1zm10 0h1v1h-1zm10 0h1v1h-1zm10 0h1v1h-1zm11 0h1v1h-1zm10 0h1v1h-1zm10 0h1v1h-1zm10 0h1v1h-1zm11 0h1v1h-1zm10 0h1v1h-1zm10 0h1v1h-1zM95 681h1v1h-1zm10 0h1v1h-1zm10 0h1v1h-1zm11 0h1v1h-1zm10 0h1v1h-1zm10 0h1v1h-1zm10 0h1v1h-1zm11 0h1v1h-1zm10 0h1v1h-1zm10 0h1v1h-1zm10 0h1v1h-1zm11 0h1v1h-1zm10 0h1v1h-1zm10 0h1v1h-1zm10 0h1v1h-1zm11 0h1v1h-1zm10 0h1v1h-1zm10 0h1v1h-1zm10 0h1v1h-1zm11 0h1v1h-1zm10 0h1v1h-1zm10 0h1v1h-1zm10 0h1v1h-1zm11 0h1v1h-1zm10 0h1v1h-1zm10 0h1v1h-1zm10 0h1v1h-1zm11 0h1v1h-1zm10 0h1v1h-1zm10 0h1v1h-1zm10 0h1v1h-1zm11 0h1v1h-1zm10 0h1v1h-1zm10 0h1v1h-1zm10 0h1v1h-1zm11 0h1v1h-1zm10 0h1v1h-1zm10 0h1v1h-1zm10 0h1v1h-1zm11 0h1v1h-1zm10 0h1v1h-1zm10 0h1v1h-1zm10 0h1v1h-1zm11 0h1v1h-1zm10 0h1v1h-1zm10 0h1v1h-1zm10 0h1v1h-1zm11 0h1v1h-1zm10 0h1v1h-1zm10 0h1v1h-1zm10 0h1v1h-1zm11 0h1v1h-1zm10 0h1v1h-1zm10 0h1v1h-1zm10 0h1v1h-1zm11 0h1v1h-1zm10 0h1v1h-1zm10 0h1v1h-1zm10 0h1v1h-1zm11 0h1v1h-1zm10 0h1v1h-1zm10 0h1v1h-1zm10 0h1v1h-1zm11 0h1v1h-1zm10 0h1v1h-1zm10 0h1v1h-1zm10 0h1v1h-1zm11 0h1v1h-1zm10 0h1v1h-1zm10 0h1v1h-1zm10 0h1v1h-1zm11 0h1v1h-1zm10 0h1v1h-1zm10 0h1v1h-1zm10 0h1v1h-1zm11 0h1v1h-1zm10 0h1v1h-1zm10 0h1v1h-1zm10 0h1v1h-1zm11 0h1v1h-1zm10 0h1v1h-1zm10 0h1v1h-1zm10 0h1v1h-1zm11 0h1v1h-1zm10 0h1v1h-1zm10 0h1v1h-1zm10 0h1v1h-1zm11 0h1v1h-1zm10 0h1v1h-1zm10 0h1v1h-1zm10 0h1v1h-1zm11 0h1v1h-1zm10 0h1v1h-1zm10 0h1v1h-1zm10 0h1v1h-1zm11 0h1v1h-1zm10 0h1v1h-1zm10 0h1v1h-1zm10 0h1v1h-1zm11 0h1v1h-1zm10 0h1v1h-1zm10 0h1v1h-1zM95 670h1v1h-1zm10 0h1v1h-1zm10 0h1v1h-1zm11 0h1v1h-1zm10 0h1v1h-1zm10 0h1v1h-1zm10 0h1v1h-1zm11 0h1v1h-1zm10 0h1v1h-1zm10 0h1v1h-1zm10 0h1v1h-1zm11 0h1v1h-1zm10 0h1v1h-1zm10 0h1v1h-1zm10 0h1v1h-1zm11 0h1v1h-1zm10 0h1v1h-1zm10 0h1v1h-1zm10 0h1v1h-1zm11 0h1v1h-1zm10 0h1v1h-1zm10 0h1v1h-1zm10 0h1v1h-1zm11 0h1v1h-1zm10 0h1v1h-1zm10 0h1v1h-1zm10 0h1v1h-1zm11 0h1v1h-1zm10 0h1v1h-1zm10 0h1v1h-1zm10 0h1v1h-1zm11 0h1v1h-1zm10 0h1v1h-1zm10 0h1v1h-1zm10 0h1v1h-1zm11 0h1v1h-1zm10 0h1v1h-1zm10 0h1v1h-1zm10 0h1v1h-1zm11 0h1v1h-1zm10 0h1v1h-1zm10 0h1v1h-1zm10 0h1v1h-1zm11 0h1v1h-1zm10 0h1v1h-1zm10 0h1v1h-1zm10 0h1v1h-1zm11 0h1v1h-1zm10 0h1v1h-1zm10 0h1v1h-1zm10 0h1v1h-1zm11 0h1v1h-1zm10 0h1v1h-1zm10 0h1v1h-1zm10 0h1v1h-1zm11 0h1v1h-1zm10 0h1v1h-1zm10 0h1v1h-1zm10 0h1v1h-1zm11 0h1v1h-1zm10 0h1v1h-1zm10 0h1v1h-1zm10 0h1v1h-1zm11 0h1v1h-1zm10 0h1v1h-1zm10 0h1v1h-1zm10 0h1v1h-1zm11 0h1v1h-1zm10 0h1v1h-1zm10 0h1v1h-1zm10 0h1v1h-1zm11 0h1v1h-1zm10 0h1v1h-1zm10 0h1v1h-1zm10 0h1v1h-1zm11 0h1v1h-1zm10 0h1v1h-1zm10 0h1v1h-1zm10 0h1v1h-1zm11 0h1v1h-1zm10 0h1v1h-1zm10 0h1v1h-1zm10 0h1v1h-1zm11 0h1v1h-1zm10 0h1v1h-1zm10 0h1v1h-1zm10 0h1v1h-1zm11 0h1v1h-1zm10 0h1v1h-1zm10 0h1v1h-1zm10 0h1v1h-1zm11 0h1v1h-1zm10 0h1v1h-1zm10 0h1v1h-1zm10 0h1v1h-1zm11 0h1v1h-1zm10 0h1v1h-1zm10 0h1v1h-1zm10 0h1v1h-1zm11 0h1v1h-1zm10 0h1v1h-1zm10 0h1v1h-1zM95 660h1v1h-1zm10 0h1v1h-1zm10 0h1v1h-1zm11 0h1v1h-1zm10 0h1v1h-1zm10 0h1v1h-1zm10 0h1v1h-1zm11 0h1v1h-1zm10 0h1v1h-1zm10 0h1v1h-1zm10 0h1v1h-1zm11 0h1v1h-1zm10 0h1v1h-1zm10 0h1v1h-1zm10 0h1v1h-1zm11 0h1v1h-1zm10 0h1v1h-1zm10 0h1v1h-1zm10 0h1v1h-1zm11 0h1v1h-1zm10 0h1v1h-1zm10 0h1v1h-1zm10 0h1v1h-1zm11 0h1v1h-1zm10 0h1v1h-1zm10 0h1v1h-1zm10 0h1v1h-1zm11 0h1v1h-1zm10 0h1v1h-1zm10 0h1v1h-1zm10 0h1v1h-1zm11 0h1v1h-1zm10 0h1v1h-1zm10 0h1v1h-1zm10 0h1v1h-1zm11 0h1v1h-1zm10 0h1v1h-1zm10 0h1v1h-1zm10 0h1v1h-1zm11 0h1v1h-1zm10 0h1v1h-1zm10 0h1v1h-1zm10 0h1v1h-1zm11 0h1v1h-1zm10 0h1v1h-1zm10 0h1v1h-1zm10 0h1v1h-1zm11 0h1v1h-1zm10 0h1v1h-1zm10 0h1v1h-1zm10 0h1v1h-1zm11 0h1v1h-1zm10 0h1v1h-1zm10 0h1v1h-1zm10 0h1v1h-1zm11 0h1v1h-1zm10 0h1v1h-1zm10 0h1v1h-1zm10 0h1v1h-1zm11 0h1v1h-1zm10 0h1v1h-1zm10 0h1v1h-1zm10 0h1v1h-1zm11 0h1v1h-1zm10 0h1v1h-1zm10 0h1v1h-1zm10 0h1v1h-1zm11 0h1v1h-1zm10 0h1v1h-1zm10 0h1v1h-1zm10 0h1v1h-1zm11 0h1v1h-1zm10 0h1v1h-1zm10 0h1v1h-1zm10 0h1v1h-1zm11 0h1v1h-1zm10 0h1v1h-1zm10 0h1v1h-1zm10 0h1v1h-1zm11 0h1v1h-1zm10 0h1v1h-1zm10 0h1v1h-1zm10 0h1v1h-1zm11 0h1v1h-1zm10 0h1v1h-1zm10 0h1v1h-1zm10 0h1v1h-1zm11 0h1v1h-1zm10 0h1v1h-1zm10 0h1v1h-1zm10 0h1v1h-1zm11 0h1v1h-1zm10 0h1v1h-1zm10 0h1v1h-1zm10 0h1v1h-1zm11 0h1v1h-1zm10 0h1v1h-1zm10 0h1v1h-1zm10 0h1v1h-1zm11 0h1v1h-1zm10 0h1v1h-1zm10 0h1v1h-1zM95 650h1v1h-1zm10 0h1v1h-1zm10 0h1v1h-1zm11 0h1v1h-1zm10 0h1v1h-1zm10 0h1v1h-1zm10 0h1v1h-1zm11 0h1v1h-1zm10 0h1v1h-1zm10 0h1v1h-1zm10 0h1v1h-1zm11 0h1v1h-1zm10 0h1v1h-1zm10 0h1v1h-1zm10 0h1v1h-1zm11 0h1v1h-1zm10 0h1v1h-1zm10 0h1v1h-1zm10 0h1v1h-1zm11 0h1v1h-1zm10 0h1v1h-1zm10 0h1v1h-1zm10 0h1v1h-1zm11 0h1v1h-1zm10 0h1v1h-1zm10 0h1v1h-1zm10 0h1v1h-1zm11 0h1v1h-1zm10 0h1v1h-1zm10 0h1v1h-1zm10 0h1v1h-1zm11 0h1v1h-1zm10 0h1v1h-1zm10 0h1v1h-1zm10 0h1v1h-1zm11 0h1v1h-1zm10 0h1v1h-1zm10 0h1v1h-1zm10 0h1v1h-1zm11 0h1v1h-1zm10 0h1v1h-1zm10 0h1v1h-1zm10 0h1v1h-1zm11 0h1v1h-1zm10 0h1v1h-1zm10 0h1v1h-1zm10 0h1v1h-1zm11 0h1v1h-1zm10 0h1v1h-1zm10 0h1v1h-1zm10 0h1v1h-1zm11 0h1v1h-1zm10 0h1v1h-1zm10 0h1v1h-1zm10 0h1v1h-1zm11 0h1v1h-1zm10 0h1v1h-1zm10 0h1v1h-1zm10 0h1v1h-1zm11 0h1v1h-1zm10 0h1v1h-1zm10 0h1v1h-1zm10 0h1v1h-1zm11 0h1v1h-1zm10 0h1v1h-1zm10 0h1v1h-1zm10 0h1v1h-1zm11 0h1v1h-1zm10 0h1v1h-1zm10 0h1v1h-1zm10 0h1v1h-1zm11 0h1v1h-1zm10 0h1v1h-1zm10 0h1v1h-1zm10 0h1v1h-1zm11 0h1v1h-1zm10 0h1v1h-1zm10 0h1v1h-1zm10 0h1v1h-1zm11 0h1v1h-1zm10 0h1v1h-1zm10 0h1v1h-1zm10 0h1v1h-1zm11 0h1v1h-1zm10 0h1v1h-1zm10 0h1v1h-1zm10 0h1v1h-1zm11 0h1v1h-1zm10 0h1v1h-1zm10 0h1v1h-1zm10 0h1v1h-1zm11 0h1v1h-1zm10 0h1v1h-1zm10 0h1v1h-1zm10 0h1v1h-1zm11 0h1v1h-1zm10 0h1v1h-1zm10 0h1v1h-1zm10 0h1v1h-1zm11 0h1v1h-1zm10 0h1v1h-1zm10 0h1v1h-1zM95 640h1v1h-1zm10 0h1v1h-1zm10 0h1v1h-1zm11 0h1v1h-1zm10 0h1v1h-1zm10 0h1v1h-1zm10 0h1v1h-1zm11 0h1v1h-1zm10 0h1v1h-1zm10 0h1v1h-1zm10 0h1v1h-1zm11 0h1v1h-1zm10 0h1v1h-1zm10 0h1v1h-1zm10 0h1v1h-1zm11 0h1v1h-1zm10 0h1v1h-1zm10 0h1v1h-1zm10 0h1v1h-1zm11 0h1v1h-1zm10 0h1v1h-1zm10 0h1v1h-1zm10 0h1v1h-1zm11 0h1v1h-1zm10 0h1v1h-1zm10 0h1v1h-1zm10 0h1v1h-1zm11 0h1v1h-1zm10 0h1v1h-1zm10 0h1v1h-1zm10 0h1v1h-1zm11 0h1v1h-1zm10 0h1v1h-1zm10 0h1v1h-1zm10 0h1v1h-1zm11 0h1v1h-1zm10 0h1v1h-1zm10 0h1v1h-1zm10 0h1v1h-1zm11 0h1v1h-1zm10 0h1v1h-1zm10 0h1v1h-1zm10 0h1v1h-1zm11 0h1v1h-1zm10 0h1v1h-1zm10 0h1v1h-1zm10 0h1v1h-1zm11 0h1v1h-1zm10 0h1v1h-1zm10 0h1v1h-1zm10 0h1v1h-1zm11 0h1v1h-1zm10 0h1v1h-1zm10 0h1v1h-1zm10 0h1v1h-1zm11 0h1v1h-1zm10 0h1v1h-1zm10 0h1v1h-1zm10 0h1v1h-1zm11 0h1v1h-1zm10 0h1v1h-1zm10 0h1v1h-1zm10 0h1v1h-1zm11 0h1v1h-1zm10 0h1v1h-1zm10 0h1v1h-1zm10 0h1v1h-1zm11 0h1v1h-1zm10 0h1v1h-1zm10 0h1v1h-1zm10 0h1v1h-1zm11 0h1v1h-1zm10 0h1v1h-1zm10 0h1v1h-1zm10 0h1v1h-1zm11 0h1v1h-1zm10 0h1v1h-1zm10 0h1v1h-1zm10 0h1v1h-1zm11 0h1v1h-1zm10 0h1v1h-1zm10 0h1v1h-1zm10 0h1v1h-1zm11 0h1v1h-1zm10 0h1v1h-1zm10 0h1v1h-1zm10 0h1v1h-1zm11 0h1v1h-1zm10 0h1v1h-1zm10 0h1v1h-1zm10 0h1v1h-1zm11 0h1v1h-1zm10 0h1v1h-1zm10 0h1v1h-1zm10 0h1v1h-1zm11 0h1v1h-1zm10 0h1v1h-1zm10 0h1v1h-1zm10 0h1v1h-1zm11 0h1v1h-1zm10 0h1v1h-1zm10 0h1v1h-1zM95 629h1v1h-1zm10 0h1v1h-1zm10 0h1v1h-1zm11 0h1v1h-1zm10 0h1v1h-1zm10 0h1v1h-1zm10 0h1v1h-1zm11 0h1v1h-1zm10 0h1v1h-1zm10 0h1v1h-1zm10 0h1v1h-1zm11 0h1v1h-1zm10 0h1v1h-1zm10 0h1v1h-1zm10 0h1v1h-1zm11 0h1v1h-1zm10 0h1v1h-1zm10 0h1v1h-1zm10 0h1v1h-1zm11 0h1v1h-1zm10 0h1v1h-1zm10 0h1v1h-1zm10 0h1v1h-1zm11 0h1v1h-1zm10 0h1v1h-1zm10 0h1v1h-1zm10 0h1v1h-1zm11 0h1v1h-1zm10 0h1v1h-1zm10 0h1v1h-1zm10 0h1v1h-1zm11 0h1v1h-1zm10 0h1v1h-1zm10 0h1v1h-1zm10 0h1v1h-1zm11 0h1v1h-1zm10 0h1v1h-1zm10 0h1v1h-1zm10 0h1v1h-1zm11 0h1v1h-1zm10 0h1v1h-1zm10 0h1v1h-1zm10 0h1v1h-1zm11 0h1v1h-1zm10 0h1v1h-1zm10 0h1v1h-1zm10 0h1v1h-1zm11 0h1v1h-1zm10 0h1v1h-1zm10 0h1v1h-1zm10 0h1v1h-1zm11 0h1v1h-1zm10 0h1v1h-1zm10 0h1v1h-1zm10 0h1v1h-1zm11 0h1v1h-1zm10 0h1v1h-1zm10 0h1v1h-1zm10 0h1v1h-1zm11 0h1v1h-1zm10 0h1v1h-1zm10 0h1v1h-1zm10 0h1v1h-1zm11 0h1v1h-1zm10 0h1v1h-1zm10 0h1v1h-1zm10 0h1v1h-1zm11 0h1v1h-1zm10 0h1v1h-1zm10 0h1v1h-1zm10 0h1v1h-1zm11 0h1v1h-1zm10 0h1v1h-1zm10 0h1v1h-1zm10 0h1v1h-1zm11 0h1v1h-1zm10 0h1v1h-1zm10 0h1v1h-1zm10 0h1v1h-1zm11 0h1v1h-1zm10 0h1v1h-1zm10 0h1v1h-1zm10 0h1v1h-1zm11 0h1v1h-1zm10 0h1v1h-1zm10 0h1v1h-1zm10 0h1v1h-1zm11 0h1v1h-1zm10 0h1v1h-1zm10 0h1v1h-1zm10 0h1v1h-1zm11 0h1v1h-1zm10 0h1v1h-1zm10 0h1v1h-1zm10 0h1v1h-1zm11 0h1v1h-1zm10 0h1v1h-1zm10 0h1v1h-1zm10 0h1v1h-1zm11 0h1v1h-1zm10 0h1v1h-1zm10 0h1v1h-1zM95 619h1v1h-1zm10 0h1v1h-1zm10 0h1v1h-1zm11 0h1v1h-1zm10 0h1v1h-1zm10 0h1v1h-1zm10 0h1v1h-1zm11 0h1v1h-1zm10 0h1v1h-1zm10 0h1v1h-1zm10 0h1v1h-1zm11 0h1v1h-1zm10 0h1v1h-1zm10 0h1v1h-1zm10 0h1v1h-1zm11 0h1v1h-1zm10 0h1v1h-1zm10 0h1v1h-1zm10 0h1v1h-1zm11 0h1v1h-1zm10 0h1v1h-1zm10 0h1v1h-1zm10 0h1v1h-1zm11 0h1v1h-1zm10 0h1v1h-1zm10 0h1v1h-1zm10 0h1v1h-1zm11 0h1v1h-1zm10 0h1v1h-1zm10 0h1v1h-1zm10 0h1v1h-1zm11 0h1v1h-1zm10 0h1v1h-1zm10 0h1v1h-1zm10 0h1v1h-1zm11 0h1v1h-1zm10 0h1v1h-1zm10 0h1v1h-1zm10 0h1v1h-1zm11 0h1v1h-1zm10 0h1v1h-1zm10 0h1v1h-1zm10 0h1v1h-1zm11 0h1v1h-1zm10 0h1v1h-1zm10 0h1v1h-1zm10 0h1v1h-1zm11 0h1v1h-1zm10 0h1v1h-1zm10 0h1v1h-1zm10 0h1v1h-1zm11 0h1v1h-1zm10 0h1v1h-1zm10 0h1v1h-1zm10 0h1v1h-1zm11 0h1v1h-1zm10 0h1v1h-1zm10 0h1v1h-1zm10 0h1v1h-1zm11 0h1v1h-1zm10 0h1v1h-1zm10 0h1v1h-1zm10 0h1v1h-1zm11 0h1v1h-1zm10 0h1v1h-1zm10 0h1v1h-1zm10 0h1v1h-1zm11 0h1v1h-1zm10 0h1v1h-1zm10 0h1v1h-1zm10 0h1v1h-1zm11 0h1v1h-1zm10 0h1v1h-1zm10 0h1v1h-1zm10 0h1v1h-1zm11 0h1v1h-1zm10 0h1v1h-1zm10 0h1v1h-1zm10 0h1v1h-1zm11 0h1v1h-1zm10 0h1v1h-1zm10 0h1v1h-1zm10 0h1v1h-1zm11 0h1v1h-1zm10 0h1v1h-1zm10 0h1v1h-1zm10 0h1v1h-1zm11 0h1v1h-1zm10 0h1v1h-1zm10 0h1v1h-1zm10 0h1v1h-1zm11 0h1v1h-1zm10 0h1v1h-1zm10 0h1v1h-1zm10 0h1v1h-1zm11 0h1v1h-1zm10 0h1v1h-1zm10 0h1v1h-1zm10 0h1v1h-1zm11 0h1v1h-1zm10 0h1v1h-1zm10 0h1v1h-1zM95 609h1v1h-1zm10 0h1v1h-1zm10 0h1v1h-1zm11 0h1v1h-1zm10 0h1v1h-1zm10 0h1v1h-1zm10 0h1v1h-1zm11 0h1v1h-1zm10 0h1v1h-1zm10 0h1v1h-1zm10 0h1v1h-1zm11 0h1v1h-1zm10 0h1v1h-1zm10 0h1v1h-1zm10 0h1v1h-1zm11 0h1v1h-1zm10 0h1v1h-1zm10 0h1v1h-1zm10 0h1v1h-1zm11 0h1v1h-1zm10 0h1v1h-1zm10 0h1v1h-1zm10 0h1v1h-1zm11 0h1v1h-1zm10 0h1v1h-1zm10 0h1v1h-1zm10 0h1v1h-1zm11 0h1v1h-1zm10 0h1v1h-1zm10 0h1v1h-1zm10 0h1v1h-1zm11 0h1v1h-1zm10 0h1v1h-1zm10 0h1v1h-1zm10 0h1v1h-1zm11 0h1v1h-1zm10 0h1v1h-1zm10 0h1v1h-1zm10 0h1v1h-1zm11 0h1v1h-1zm10 0h1v1h-1zm10 0h1v1h-1zm10 0h1v1h-1zm11 0h1v1h-1zm10 0h1v1h-1zm10 0h1v1h-1zm10 0h1v1h-1zm11 0h1v1h-1zm10 0h1v1h-1zm10 0h1v1h-1zm10 0h1v1h-1zm11 0h1v1h-1zm10 0h1v1h-1zm10 0h1v1h-1zm10 0h1v1h-1zm11 0h1v1h-1zm10 0h1v1h-1zm10 0h1v1h-1zm10 0h1v1h-1zm11 0h1v1h-1zm10 0h1v1h-1zm10 0h1v1h-1zm10 0h1v1h-1zm11 0h1v1h-1zm10 0h1v1h-1zm10 0h1v1h-1zm10 0h1v1h-1zm11 0h1v1h-1zm10 0h1v1h-1zm10 0h1v1h-1zm10 0h1v1h-1zm11 0h1v1h-1zm10 0h1v1h-1zm10 0h1v1h-1zm10 0h1v1h-1zm11 0h1v1h-1zm10 0h1v1h-1zm10 0h1v1h-1zm10 0h1v1h-1zm11 0h1v1h-1zm10 0h1v1h-1zm10 0h1v1h-1zm10 0h1v1h-1zm11 0h1v1h-1zm10 0h1v1h-1zm10 0h1v1h-1zm10 0h1v1h-1zm11 0h1v1h-1zm10 0h1v1h-1zm10 0h1v1h-1zm10 0h1v1h-1zm11 0h1v1h-1zm10 0h1v1h-1zm10 0h1v1h-1zm10 0h1v1h-1zm11 0h1v1h-1zm10 0h1v1h-1zm10 0h1v1h-1zm10 0h1v1h-1zm11 0h1v1h-1zm10 0h1v1h-1zm10 0h1v1h-1zM95 599h1v1h-1zm10 0h1v1h-1zm10 0h1v1h-1zm11 0h1v1h-1zm10 0h1v1h-1zm10 0h1v1h-1zm10 0h1v1h-1zm11 0h1v1h-1zm10 0h1v1h-1zm10 0h1v1h-1zm10 0h1v1h-1zm11 0h1v1h-1zm10 0h1v1h-1zm10 0h1v1h-1zm10 0h1v1h-1zm11 0h1v1h-1zm10 0h1v1h-1zm10 0h1v1h-1zm10 0h1v1h-1zm11 0h1v1h-1zm10 0h1v1h-1zm10 0h1v1h-1zm10 0h1v1h-1zm11 0h1v1h-1zm10 0h1v1h-1zm10 0h1v1h-1zm10 0h1v1h-1zm11 0h1v1h-1zm10 0h1v1h-1zm10 0h1v1h-1zm10 0h1v1h-1zm11 0h1v1h-1zm10 0h1v1h-1zm10 0h1v1h-1zm10 0h1v1h-1zm11 0h1v1h-1zm10 0h1v1h-1zm10 0h1v1h-1zm10 0h1v1h-1zm11 0h1v1h-1zm10 0h1v1h-1zm10 0h1v1h-1zm10 0h1v1h-1zm11 0h1v1h-1zm10 0h1v1h-1zm10 0h1v1h-1zm10 0h1v1h-1zm11 0h1v1h-1zm10 0h1v1h-1zm10 0h1v1h-1zm10 0h1v1h-1zm11 0h1v1h-1zm10 0h1v1h-1zm10 0h1v1h-1zm10 0h1v1h-1zm11 0h1v1h-1zm10 0h1v1h-1zm10 0h1v1h-1zm10 0h1v1h-1zm11 0h1v1h-1zm10 0h1v1h-1zm10 0h1v1h-1zm10 0h1v1h-1zm11 0h1v1h-1zm10 0h1v1h-1zm10 0h1v1h-1zm10 0h1v1h-1zm11 0h1v1h-1zm10 0h1v1h-1zm10 0h1v1h-1zm10 0h1v1h-1zm11 0h1v1h-1zm10 0h1v1h-1zm10 0h1v1h-1zm10 0h1v1h-1zm11 0h1v1h-1zm10 0h1v1h-1zm10 0h1v1h-1zm10 0h1v1h-1zm11 0h1v1h-1zm10 0h1v1h-1zm10 0h1v1h-1zm10 0h1v1h-1zm11 0h1v1h-1zm10 0h1v1h-1zm10 0h1v1h-1zm10 0h1v1h-1zm11 0h1v1h-1zm10 0h1v1h-1zm10 0h1v1h-1zm10 0h1v1h-1zm11 0h1v1h-1zm10 0h1v1h-1zm10 0h1v1h-1zm10 0h1v1h-1zm11 0h1v1h-1zm10 0h1v1h-1zm10 0h1v1h-1zm10 0h1v1h-1zm11 0h1v1h-1zm10 0h1v1h-1zm10 0h1v1h-1zM95 588h1v1h-1zm10 0h1v1h-1zm10 0h1v1h-1zm11 0h1v1h-1zm10 0h1v1h-1zm10 0h1v1h-1zm10 0h1v1h-1zm11 0h1v1h-1zm10 0h1v1h-1zm10 0h1v1h-1zm10 0h1v1h-1zm11 0h1v1h-1zm10 0h1v1h-1zm10 0h1v1h-1zm10 0h1v1h-1zm11 0h1v1h-1zm10 0h1v1h-1zm10 0h1v1h-1zm10 0h1v1h-1zm11 0h1v1h-1zm10 0h1v1h-1zm10 0h1v1h-1zm10 0h1v1h-1zm11 0h1v1h-1zm10 0h1v1h-1zm10 0h1v1h-1zm10 0h1v1h-1zm11 0h1v1h-1zm10 0h1v1h-1zm10 0h1v1h-1zm10 0h1v1h-1zm11 0h1v1h-1zm10 0h1v1h-1zm10 0h1v1h-1zm10 0h1v1h-1zm11 0h1v1h-1zm10 0h1v1h-1zm10 0h1v1h-1zm10 0h1v1h-1zm11 0h1v1h-1zm10 0h1v1h-1zm10 0h1v1h-1zm10 0h1v1h-1zm11 0h1v1h-1zm10 0h1v1h-1zm10 0h1v1h-1zm10 0h1v1h-1zm11 0h1v1h-1zm10 0h1v1h-1zm10 0h1v1h-1zm10 0h1v1h-1zm11 0h1v1h-1zm10 0h1v1h-1zm10 0h1v1h-1zm10 0h1v1h-1zm11 0h1v1h-1zm10 0h1v1h-1zm10 0h1v1h-1zm10 0h1v1h-1zm11 0h1v1h-1zm10 0h1v1h-1zm10 0h1v1h-1zm10 0h1v1h-1zm11 0h1v1h-1zm10 0h1v1h-1zm10 0h1v1h-1zm10 0h1v1h-1zm11 0h1v1h-1zm10 0h1v1h-1zm10 0h1v1h-1zm10 0h1v1h-1zm11 0h1v1h-1zm10 0h1v1h-1zm10 0h1v1h-1zm10 0h1v1h-1zm11 0h1v1h-1zm10 0h1v1h-1zm10 0h1v1h-1zm10 0h1v1h-1zm11 0h1v1h-1zm10 0h1v1h-1zm10 0h1v1h-1zm10 0h1v1h-1zm11 0h1v1h-1zm10 0h1v1h-1zm10 0h1v1h-1zm10 0h1v1h-1zm11 0h1v1h-1zm10 0h1v1h-1zm10 0h1v1h-1zm10 0h1v1h-1zm11 0h1v1h-1zm10 0h1v1h-1zm10 0h1v1h-1zm10 0h1v1h-1zm11 0h1v1h-1zm10 0h1v1h-1zm10 0h1v1h-1zm10 0h1v1h-1zm11 0h1v1h-1zm10 0h1v1h-1zm10 0h1v1h-1zM95 578h1v1h-1zm10 0h1v1h-1zm10 0h1v1h-1zm11 0h1v1h-1zm10 0h1v1h-1zm10 0h1v1h-1zm10 0h1v1h-1zm11 0h1v1h-1zm10 0h1v1h-1zm10 0h1v1h-1zm10 0h1v1h-1zm11 0h1v1h-1zm10 0h1v1h-1zm10 0h1v1h-1zm10 0h1v1h-1zm11 0h1v1h-1zm10 0h1v1h-1zm10 0h1v1h-1zm10 0h1v1h-1zm11 0h1v1h-1zm10 0h1v1h-1zm10 0h1v1h-1zm10 0h1v1h-1zm11 0h1v1h-1zm10 0h1v1h-1zm10 0h1v1h-1zm10 0h1v1h-1zm11 0h1v1h-1zm10 0h1v1h-1zm10 0h1v1h-1zm10 0h1v1h-1zm11 0h1v1h-1zm10 0h1v1h-1zm10 0h1v1h-1zm10 0h1v1h-1zm11 0h1v1h-1zm10 0h1v1h-1zm10 0h1v1h-1zm10 0h1v1h-1zm11 0h1v1h-1zm10 0h1v1h-1zm10 0h1v1h-1zm10 0h1v1h-1zm11 0h1v1h-1zm10 0h1v1h-1zm10 0h1v1h-1zm10 0h1v1h-1zm11 0h1v1h-1zm10 0h1v1h-1zm10 0h1v1h-1zm10 0h1v1h-1zm11 0h1v1h-1zm10 0h1v1h-1zm10 0h1v1h-1zm10 0h1v1h-1zm11 0h1v1h-1zm10 0h1v1h-1zm10 0h1v1h-1zm10 0h1v1h-1zm11 0h1v1h-1zm10 0h1v1h-1zm10 0h1v1h-1zm10 0h1v1h-1zm11 0h1v1h-1zm10 0h1v1h-1zm10 0h1v1h-1zm10 0h1v1h-1zm11 0h1v1h-1zm10 0h1v1h-1zm10 0h1v1h-1zm10 0h1v1h-1zm11 0h1v1h-1zm10 0h1v1h-1zm10 0h1v1h-1zm10 0h1v1h-1zm11 0h1v1h-1zm10 0h1v1h-1zm10 0h1v1h-1zm10 0h1v1h-1zm11 0h1v1h-1zm10 0h1v1h-1zm10 0h1v1h-1zm10 0h1v1h-1zm11 0h1v1h-1zm10 0h1v1h-1zm10 0h1v1h-1zm10 0h1v1h-1zm11 0h1v1h-1zm10 0h1v1h-1zm10 0h1v1h-1zm10 0h1v1h-1zm11 0h1v1h-1zm10 0h1v1h-1zm10 0h1v1h-1zm10 0h1v1h-1zm11 0h1v1h-1zm10 0h1v1h-1zm10 0h1v1h-1zm10 0h1v1h-1zm11 0h1v1h-1zm10 0h1v1h-1zm10 0h1v1h-1zM95 568h1v1h-1zm10 0h1v1h-1zm10 0h1v1h-1zm11 0h1v1h-1zm10 0h1v1h-1zm10 0h1v1h-1zm10 0h1v1h-1zm11 0h1v1h-1zm10 0h1v1h-1zm10 0h1v1h-1zm10 0h1v1h-1zm11 0h1v1h-1zm10 0h1v1h-1zm10 0h1v1h-1zm10 0h1v1h-1zm11 0h1v1h-1zm10 0h1v1h-1zm10 0h1v1h-1zm10 0h1v1h-1zm11 0h1v1h-1zm10 0h1v1h-1zm10 0h1v1h-1zm10 0h1v1h-1zm11 0h1v1h-1zm10 0h1v1h-1zm10 0h1v1h-1zm10 0h1v1h-1zm11 0h1v1h-1zm10 0h1v1h-1zm10 0h1v1h-1zm10 0h1v1h-1zm11 0h1v1h-1zm10 0h1v1h-1zm10 0h1v1h-1zm10 0h1v1h-1zm11 0h1v1h-1zm10 0h1v1h-1zm10 0h1v1h-1zm10 0h1v1h-1zm11 0h1v1h-1zm10 0h1v1h-1zm10 0h1v1h-1zm10 0h1v1h-1zm11 0h1v1h-1zm10 0h1v1h-1zm10 0h1v1h-1zm10 0h1v1h-1zm11 0h1v1h-1zm10 0h1v1h-1zm10 0h1v1h-1zm10 0h1v1h-1zm11 0h1v1h-1zm10 0h1v1h-1zm10 0h1v1h-1zm10 0h1v1h-1zm11 0h1v1h-1zm10 0h1v1h-1zm10 0h1v1h-1zm10 0h1v1h-1zm11 0h1v1h-1zm10 0h1v1h-1zm10 0h1v1h-1zm10 0h1v1h-1zm11 0h1v1h-1zm10 0h1v1h-1zm10 0h1v1h-1zm10 0h1v1h-1zm11 0h1v1h-1zm10 0h1v1h-1zm10 0h1v1h-1zm10 0h1v1h-1zm11 0h1v1h-1zm10 0h1v1h-1zm10 0h1v1h-1zm10 0h1v1h-1zm11 0h1v1h-1zm10 0h1v1h-1zm10 0h1v1h-1zm10 0h1v1h-1zm11 0h1v1h-1zm10 0h1v1h-1zm10 0h1v1h-1zm10 0h1v1h-1zm11 0h1v1h-1zm10 0h1v1h-1zm10 0h1v1h-1zm10 0h1v1h-1zm11 0h1v1h-1zm10 0h1v1h-1zm10 0h1v1h-1zm10 0h1v1h-1zm11 0h1v1h-1zm10 0h1v1h-1zm10 0h1v1h-1zm10 0h1v1h-1zm11 0h1v1h-1zm10 0h1v1h-1zm10 0h1v1h-1zm10 0h1v1h-1zm11 0h1v1h-1zm10 0h1v1h-1zm10 0h1v1h-1zM95 558h1v1h-1zm10 0h1v1h-1zm10 0h1v1h-1zm11 0h1v1h-1zm10 0h1v1h-1zm10 0h1v1h-1zm10 0h1v1h-1zm11 0h1v1h-1zm10 0h1v1h-1zm10 0h1v1h-1zm10 0h1v1h-1zm11 0h1v1h-1zm10 0h1v1h-1zm10 0h1v1h-1zm10 0h1v1h-1zm11 0h1v1h-1zm10 0h1v1h-1zm10 0h1v1h-1zm10 0h1v1h-1zm11 0h1v1h-1zm10 0h1v1h-1zm10 0h1v1h-1zm10 0h1v1h-1zm11 0h1v1h-1zm10 0h1v1h-1zm10 0h1v1h-1zm10 0h1v1h-1zm11 0h1v1h-1zm10 0h1v1h-1zm10 0h1v1h-1zm10 0h1v1h-1zm11 0h1v1h-1zm10 0h1v1h-1zm10 0h1v1h-1zm10 0h1v1h-1zm11 0h1v1h-1zm10 0h1v1h-1zm10 0h1v1h-1zm10 0h1v1h-1zm11 0h1v1h-1zm10 0h1v1h-1zm10 0h1v1h-1zm10 0h1v1h-1zm11 0h1v1h-1zm10 0h1v1h-1zm10 0h1v1h-1zm10 0h1v1h-1zm11 0h1v1h-1zm10 0h1v1h-1zm10 0h1v1h-1zm10 0h1v1h-1zm11 0h1v1h-1zm10 0h1v1h-1zm10 0h1v1h-1zm10 0h1v1h-1zm11 0h1v1h-1zm10 0h1v1h-1zm10 0h1v1h-1zm10 0h1v1h-1zm11 0h1v1h-1zm10 0h1v1h-1zm10 0h1v1h-1zm10 0h1v1h-1zm11 0h1v1h-1zm10 0h1v1h-1zm10 0h1v1h-1zm10 0h1v1h-1zm11 0h1v1h-1zm10 0h1v1h-1zm10 0h1v1h-1zm10 0h1v1h-1zm11 0h1v1h-1zm10 0h1v1h-1zm10 0h1v1h-1zm10 0h1v1h-1zm11 0h1v1h-1zm10 0h1v1h-1zm10 0h1v1h-1zm10 0h1v1h-1zm11 0h1v1h-1zm10 0h1v1h-1zm10 0h1v1h-1zm10 0h1v1h-1zm11 0h1v1h-1zm10 0h1v1h-1zm10 0h1v1h-1zm10 0h1v1h-1zm11 0h1v1h-1zm10 0h1v1h-1zm10 0h1v1h-1zm10 0h1v1h-1zm11 0h1v1h-1zm10 0h1v1h-1zm10 0h1v1h-1zm10 0h1v1h-1zm11 0h1v1h-1zm10 0h1v1h-1zm10 0h1v1h-1zm10 0h1v1h-1zm11 0h1v1h-1zm10 0h1v1h-1zm10 0h1v1h-1zM95 547h1v1h-1zm10 0h1v1h-1zm10 0h1v1h-1zm11 0h1v1h-1zm10 0h1v1h-1zm10 0h1v1h-1zm10 0h1v1h-1zm11 0h1v1h-1zm10 0h1v1h-1zm10 0h1v1h-1zm10 0h1v1h-1zm11 0h1v1h-1zm10 0h1v1h-1zm10 0h1v1h-1zm10 0h1v1h-1zm11 0h1v1h-1zm10 0h1v1h-1zm10 0h1v1h-1zm10 0h1v1h-1zm11 0h1v1h-1zm10 0h1v1h-1zm10 0h1v1h-1zm10 0h1v1h-1zm11 0h1v1h-1zm10 0h1v1h-1zm10 0h1v1h-1zm10 0h1v1h-1zm11 0h1v1h-1zm10 0h1v1h-1zm10 0h1v1h-1zm10 0h1v1h-1zm11 0h1v1h-1zm10 0h1v1h-1zm10 0h1v1h-1zm10 0h1v1h-1zm11 0h1v1h-1zm10 0h1v1h-1zm10 0h1v1h-1zm10 0h1v1h-1zm11 0h1v1h-1zm10 0h1v1h-1zm10 0h1v1h-1zm10 0h1v1h-1zm11 0h1v1h-1zm10 0h1v1h-1zm10 0h1v1h-1zm10 0h1v1h-1zm11 0h1v1h-1zm10 0h1v1h-1zm10 0h1v1h-1zm10 0h1v1h-1zm11 0h1v1h-1zm10 0h1v1h-1zm10 0h1v1h-1zm10 0h1v1h-1zm11 0h1v1h-1zm10 0h1v1h-1zm10 0h1v1h-1zm10 0h1v1h-1zm11 0h1v1h-1zm10 0h1v1h-1zm10 0h1v1h-1zm10 0h1v1h-1zm11 0h1v1h-1zm10 0h1v1h-1zm10 0h1v1h-1zm10 0h1v1h-1zm11 0h1v1h-1zm10 0h1v1h-1zm10 0h1v1h-1zm10 0h1v1h-1zm11 0h1v1h-1zm10 0h1v1h-1zm10 0h1v1h-1zm10 0h1v1h-1zm11 0h1v1h-1zm10 0h1v1h-1zm10 0h1v1h-1zm10 0h1v1h-1zm11 0h1v1h-1zm10 0h1v1h-1zm10 0h1v1h-1zm10 0h1v1h-1zm11 0h1v1h-1zm10 0h1v1h-1zm10 0h1v1h-1zm10 0h1v1h-1zm11 0h1v1h-1zm10 0h1v1h-1zm10 0h1v1h-1zm10 0h1v1h-1zm11 0h1v1h-1zm10 0h1v1h-1zm10 0h1v1h-1zm10 0h1v1h-1zm11 0h1v1h-1zm10 0h1v1h-1zm10 0h1v1h-1zm10 0h1v1h-1zm11 0h1v1h-1zm10 0h1v1h-1zm10 0h1v1h-1zM95 537h1v1h-1zm10 0h1v1h-1zm10 0h1v1h-1zm11 0h1v1h-1zm10 0h1v1h-1zm10 0h1v1h-1zm10 0h1v1h-1zm11 0h1v1h-1zm10 0h1v1h-1zm10 0h1v1h-1zm10 0h1v1h-1zm11 0h1v1h-1zm10 0h1v1h-1zm10 0h1v1h-1zm10 0h1v1h-1zm11 0h1v1h-1zm10 0h1v1h-1zm10 0h1v1h-1zm10 0h1v1h-1zm11 0h1v1h-1zm10 0h1v1h-1zm10 0h1v1h-1zm10 0h1v1h-1zm11 0h1v1h-1zm10 0h1v1h-1zm10 0h1v1h-1zm10 0h1v1h-1zm11 0h1v1h-1zm10 0h1v1h-1zm10 0h1v1h-1zm10 0h1v1h-1zm11 0h1v1h-1zm10 0h1v1h-1zm10 0h1v1h-1zm10 0h1v1h-1zm11 0h1v1h-1zm10 0h1v1h-1zm10 0h1v1h-1zm10 0h1v1h-1zm11 0h1v1h-1zm10 0h1v1h-1zm10 0h1v1h-1zm10 0h1v1h-1zm11 0h1v1h-1zm10 0h1v1h-1zm10 0h1v1h-1zm10 0h1v1h-1zm11 0h1v1h-1zm10 0h1v1h-1zm10 0h1v1h-1zm10 0h1v1h-1zm11 0h1v1h-1zm10 0h1v1h-1zm10 0h1v1h-1zm10 0h1v1h-1zm11 0h1v1h-1zm10 0h1v1h-1zm10 0h1v1h-1zm10 0h1v1h-1zm11 0h1v1h-1zm10 0h1v1h-1zm10 0h1v1h-1zm10 0h1v1h-1zm11 0h1v1h-1zm10 0h1v1h-1zm10 0h1v1h-1zm10 0h1v1h-1zm11 0h1v1h-1zm10 0h1v1h-1zm10 0h1v1h-1zm10 0h1v1h-1zm11 0h1v1h-1zm10 0h1v1h-1zm10 0h1v1h-1zm10 0h1v1h-1zm11 0h1v1h-1zm10 0h1v1h-1zm10 0h1v1h-1zm10 0h1v1h-1zm11 0h1v1h-1zm10 0h1v1h-1zm10 0h1v1h-1zm10 0h1v1h-1zm11 0h1v1h-1zm10 0h1v1h-1zm10 0h1v1h-1zm10 0h1v1h-1zm11 0h1v1h-1zm10 0h1v1h-1zm10 0h1v1h-1zm10 0h1v1h-1zm11 0h1v1h-1zm10 0h1v1h-1zm10 0h1v1h-1zm10 0h1v1h-1zm11 0h1v1h-1zm10 0h1v1h-1zm10 0h1v1h-1zm10 0h1v1h-1zm11 0h1v1h-1zm10 0h1v1h-1zm10 0h1v1h-1zM95 527h1v1h-1zm10 0h1v1h-1zm10 0h1v1h-1zm11 0h1v1h-1zm10 0h1v1h-1zm10 0h1v1h-1zm10 0h1v1h-1zm11 0h1v1h-1zm10 0h1v1h-1zm10 0h1v1h-1zm10 0h1v1h-1zm11 0h1v1h-1zm10 0h1v1h-1zm10 0h1v1h-1zm10 0h1v1h-1zm11 0h1v1h-1zm10 0h1v1h-1zm10 0h1v1h-1zm10 0h1v1h-1zm11 0h1v1h-1zm10 0h1v1h-1zm10 0h1v1h-1zm10 0h1v1h-1zm11 0h1v1h-1zm10 0h1v1h-1zm10 0h1v1h-1zm10 0h1v1h-1zm11 0h1v1h-1zm10 0h1v1h-1zm10 0h1v1h-1zm10 0h1v1h-1zm11 0h1v1h-1zm10 0h1v1h-1zm10 0h1v1h-1zm10 0h1v1h-1zm11 0h1v1h-1zm10 0h1v1h-1zm10 0h1v1h-1zm10 0h1v1h-1zm11 0h1v1h-1zm10 0h1v1h-1zm10 0h1v1h-1zm10 0h1v1h-1zm11 0h1v1h-1zm10 0h1v1h-1zm10 0h1v1h-1zm10 0h1v1h-1zm11 0h1v1h-1zm10 0h1v1h-1zm10 0h1v1h-1zm10 0h1v1h-1zm11 0h1v1h-1zm10 0h1v1h-1zm10 0h1v1h-1zm10 0h1v1h-1zm11 0h1v1h-1zm10 0h1v1h-1zm10 0h1v1h-1zm10 0h1v1h-1zm11 0h1v1h-1zm10 0h1v1h-1zm10 0h1v1h-1zm10 0h1v1h-1zm11 0h1v1h-1zm10 0h1v1h-1zm10 0h1v1h-1zm10 0h1v1h-1zm11 0h1v1h-1zm10 0h1v1h-1zm10 0h1v1h-1zm10 0h1v1h-1zm11 0h1v1h-1zm10 0h1v1h-1zm10 0h1v1h-1zm10 0h1v1h-1zm11 0h1v1h-1zm10 0h1v1h-1zm10 0h1v1h-1zm10 0h1v1h-1zm11 0h1v1h-1zm10 0h1v1h-1zm10 0h1v1h-1zm10 0h1v1h-1zm11 0h1v1h-1zm10 0h1v1h-1zm10 0h1v1h-1zm10 0h1v1h-1zm11 0h1v1h-1zm10 0h1v1h-1zm10 0h1v1h-1zm10 0h1v1h-1zm11 0h1v1h-1zm10 0h1v1h-1zm10 0h1v1h-1zm10 0h1v1h-1zm11 0h1v1h-1zm10 0h1v1h-1zm10 0h1v1h-1zm10 0h1v1h-1zm11 0h1v1h-1zm10 0h1v1h-1zm10 0h1v1h-1zM95 517h1v1h-1zm10 0h1v1h-1zm10 0h1v1h-1zm11 0h1v1h-1zm10 0h1v1h-1zm10 0h1v1h-1zm10 0h1v1h-1zm11 0h1v1h-1zm10 0h1v1h-1zm10 0h1v1h-1zm10 0h1v1h-1zm11 0h1v1h-1zm10 0h1v1h-1zm10 0h1v1h-1zm10 0h1v1h-1zm11 0h1v1h-1zm10 0h1v1h-1zm10 0h1v1h-1zm10 0h1v1h-1zm11 0h1v1h-1zm10 0h1v1h-1zm10 0h1v1h-1zm10 0h1v1h-1zm11 0h1v1h-1zm10 0h1v1h-1zm10 0h1v1h-1zm10 0h1v1h-1zm11 0h1v1h-1zm10 0h1v1h-1zm10 0h1v1h-1zm10 0h1v1h-1zm11 0h1v1h-1zm10 0h1v1h-1zm10 0h1v1h-1zm10 0h1v1h-1zm11 0h1v1h-1zm10 0h1v1h-1zm10 0h1v1h-1zm10 0h1v1h-1zm11 0h1v1h-1zm10 0h1v1h-1zm10 0h1v1h-1zm10 0h1v1h-1zm11 0h1v1h-1zm10 0h1v1h-1zm10 0h1v1h-1zm10 0h1v1h-1zm11 0h1v1h-1zm10 0h1v1h-1zm10 0h1v1h-1zm10 0h1v1h-1zm11 0h1v1h-1zm10 0h1v1h-1zm10 0h1v1h-1zm10 0h1v1h-1zm11 0h1v1h-1zm10 0h1v1h-1zm10 0h1v1h-1zm10 0h1v1h-1zm11 0h1v1h-1zm10 0h1v1h-1zm10 0h1v1h-1zm10 0h1v1h-1zm11 0h1v1h-1zm10 0h1v1h-1zm10 0h1v1h-1zm10 0h1v1h-1zm11 0h1v1h-1zm10 0h1v1h-1zm10 0h1v1h-1zm10 0h1v1h-1zm11 0h1v1h-1zm10 0h1v1h-1zm10 0h1v1h-1zm10 0h1v1h-1zm11 0h1v1h-1zm10 0h1v1h-1zm10 0h1v1h-1zm10 0h1v1h-1zm11 0h1v1h-1zm10 0h1v1h-1zm10 0h1v1h-1zm10 0h1v1h-1zm11 0h1v1h-1zm10 0h1v1h-1zm10 0h1v1h-1zm10 0h1v1h-1zm11 0h1v1h-1zm10 0h1v1h-1zm10 0h1v1h-1zm10 0h1v1h-1zm11 0h1v1h-1zm10 0h1v1h-1zm10 0h1v1h-1zm10 0h1v1h-1zm11 0h1v1h-1zm10 0h1v1h-1zm10 0h1v1h-1zm10 0h1v1h-1zm11 0h1v1h-1zm10 0h1v1h-1zm10 0h1v1h-1zM95 506h1v1h-1zm10 0h1v1h-1zm10 0h1v1h-1zm11 0h1v1h-1zm10 0h1v1h-1zm10 0h1v1h-1zm10 0h1v1h-1zm11 0h1v1h-1zm10 0h1v1h-1zm10 0h1v1h-1zm10 0h1v1h-1zm11 0h1v1h-1zm10 0h1v1h-1zm10 0h1v1h-1zm10 0h1v1h-1zm11 0h1v1h-1zm10 0h1v1h-1zm10 0h1v1h-1zm10 0h1v1h-1zm11 0h1v1h-1zm10 0h1v1h-1zm10 0h1v1h-1zm10 0h1v1h-1zm11 0h1v1h-1zm10 0h1v1h-1zm10 0h1v1h-1zm10 0h1v1h-1zm11 0h1v1h-1zm10 0h1v1h-1zm10 0h1v1h-1zm10 0h1v1h-1zm11 0h1v1h-1zm10 0h1v1h-1zm10 0h1v1h-1zm10 0h1v1h-1zm11 0h1v1h-1zm10 0h1v1h-1zm10 0h1v1h-1zm10 0h1v1h-1zm11 0h1v1h-1zm10 0h1v1h-1zm10 0h1v1h-1zm10 0h1v1h-1zm11 0h1v1h-1zm10 0h1v1h-1zm10 0h1v1h-1zm10 0h1v1h-1zm11 0h1v1h-1zm10 0h1v1h-1zm10 0h1v1h-1zm10 0h1v1h-1zm11 0h1v1h-1zm10 0h1v1h-1zm10 0h1v1h-1zm10 0h1v1h-1zm11 0h1v1h-1zm10 0h1v1h-1zm10 0h1v1h-1zm10 0h1v1h-1zm11 0h1v1h-1zm10 0h1v1h-1zm10 0h1v1h-1zm10 0h1v1h-1zm11 0h1v1h-1zm10 0h1v1h-1zm10 0h1v1h-1zm10 0h1v1h-1zm11 0h1v1h-1zm10 0h1v1h-1zm10 0h1v1h-1zm10 0h1v1h-1zm11 0h1v1h-1zm10 0h1v1h-1zm10 0h1v1h-1zm10 0h1v1h-1zm11 0h1v1h-1zm10 0h1v1h-1zm10 0h1v1h-1zm10 0h1v1h-1zm11 0h1v1h-1zm10 0h1v1h-1zm10 0h1v1h-1zm10 0h1v1h-1zm11 0h1v1h-1zm10 0h1v1h-1zm10 0h1v1h-1zm10 0h1v1h-1zm11 0h1v1h-1zm10 0h1v1h-1zm10 0h1v1h-1zm10 0h1v1h-1zm11 0h1v1h-1zm10 0h1v1h-1zm10 0h1v1h-1zm10 0h1v1h-1zm11 0h1v1h-1zm10 0h1v1h-1zm10 0h1v1h-1zm10 0h1v1h-1zm11 0h1v1h-1zm10 0h1v1h-1zm10 0h1v1h-1zM95 496h1v1h-1zm10 0h1v1h-1zm10 0h1v1h-1zm11 0h1v1h-1zm10 0h1v1h-1zm10 0h1v1h-1zm10 0h1v1h-1zm11 0h1v1h-1zm10 0h1v1h-1zm10 0h1v1h-1zm10 0h1v1h-1zm11 0h1v1h-1zm10 0h1v1h-1zm10 0h1v1h-1zm10 0h1v1h-1zm11 0h1v1h-1zm10 0h1v1h-1zm10 0h1v1h-1zm10 0h1v1h-1zm11 0h1v1h-1zm10 0h1v1h-1zm10 0h1v1h-1zm10 0h1v1h-1zm11 0h1v1h-1zm10 0h1v1h-1zm10 0h1v1h-1zm10 0h1v1h-1zm11 0h1v1h-1zm10 0h1v1h-1zm10 0h1v1h-1zm10 0h1v1h-1zm11 0h1v1h-1zm10 0h1v1h-1zm10 0h1v1h-1zm10 0h1v1h-1zm11 0h1v1h-1zm10 0h1v1h-1zm10 0h1v1h-1zm10 0h1v1h-1zm11 0h1v1h-1zm10 0h1v1h-1zm10 0h1v1h-1zm10 0h1v1h-1zm11 0h1v1h-1zm10 0h1v1h-1zm10 0h1v1h-1zm10 0h1v1h-1zm11 0h1v1h-1zm10 0h1v1h-1zm10 0h1v1h-1zm10 0h1v1h-1zm11 0h1v1h-1zm10 0h1v1h-1zm10 0h1v1h-1zm10 0h1v1h-1zm11 0h1v1h-1zm10 0h1v1h-1zm10 0h1v1h-1zm10 0h1v1h-1zm11 0h1v1h-1zm10 0h1v1h-1zm10 0h1v1h-1zm10 0h1v1h-1zm11 0h1v1h-1zm10 0h1v1h-1zm10 0h1v1h-1zm10 0h1v1h-1zm11 0h1v1h-1zm10 0h1v1h-1zm10 0h1v1h-1zm10 0h1v1h-1zm11 0h1v1h-1zm10 0h1v1h-1zm10 0h1v1h-1zm10 0h1v1h-1zm11 0h1v1h-1zm10 0h1v1h-1zm10 0h1v1h-1zm10 0h1v1h-1zm11 0h1v1h-1zm10 0h1v1h-1zm10 0h1v1h-1zm10 0h1v1h-1zm11 0h1v1h-1zm10 0h1v1h-1zm10 0h1v1h-1zm10 0h1v1h-1zm11 0h1v1h-1zm10 0h1v1h-1zm10 0h1v1h-1zm10 0h1v1h-1zm11 0h1v1h-1zm10 0h1v1h-1zm10 0h1v1h-1zm10 0h1v1h-1zm11 0h1v1h-1zm10 0h1v1h-1zm10 0h1v1h-1zm10 0h1v1h-1zm11 0h1v1h-1zm10 0h1v1h-1zm10 0h1v1h-1zM95 486h1v1h-1zm10 0h1v1h-1zm10 0h1v1h-1zm11 0h1v1h-1zm10 0h1v1h-1zm10 0h1v1h-1zm10 0h1v1h-1zm11 0h1v1h-1zm10 0h1v1h-1zm10 0h1v1h-1zm10 0h1v1h-1zm11 0h1v1h-1zm10 0h1v1h-1zm10 0h1v1h-1zm10 0h1v1h-1zm11 0h1v1h-1zm10 0h1v1h-1zm10 0h1v1h-1zm10 0h1v1h-1zm11 0h1v1h-1zm10 0h1v1h-1zm10 0h1v1h-1zm10 0h1v1h-1zm11 0h1v1h-1zm10 0h1v1h-1zm10 0h1v1h-1zm10 0h1v1h-1zm11 0h1v1h-1zm10 0h1v1h-1zm10 0h1v1h-1zm10 0h1v1h-1zm11 0h1v1h-1zm10 0h1v1h-1zm10 0h1v1h-1zm10 0h1v1h-1zm11 0h1v1h-1zm10 0h1v1h-1zm10 0h1v1h-1zm10 0h1v1h-1zm11 0h1v1h-1zm10 0h1v1h-1zm10 0h1v1h-1zm10 0h1v1h-1zm11 0h1v1h-1zm10 0h1v1h-1zm10 0h1v1h-1zm10 0h1v1h-1zm11 0h1v1h-1zm10 0h1v1h-1zm10 0h1v1h-1zm10 0h1v1h-1zm11 0h1v1h-1zm10 0h1v1h-1zm10 0h1v1h-1zm10 0h1v1h-1zm11 0h1v1h-1zm10 0h1v1h-1zm10 0h1v1h-1zm10 0h1v1h-1zm11 0h1v1h-1zm10 0h1v1h-1zm10 0h1v1h-1zm10 0h1v1h-1zm11 0h1v1h-1zm10 0h1v1h-1zm10 0h1v1h-1zm10 0h1v1h-1zm11 0h1v1h-1zm10 0h1v1h-1zm10 0h1v1h-1zm10 0h1v1h-1zm11 0h1v1h-1zm10 0h1v1h-1zm10 0h1v1h-1zm10 0h1v1h-1zm11 0h1v1h-1zm10 0h1v1h-1zm10 0h1v1h-1zm10 0h1v1h-1zm11 0h1v1h-1zm10 0h1v1h-1zm10 0h1v1h-1zm10 0h1v1h-1zm11 0h1v1h-1zm10 0h1v1h-1zm10 0h1v1h-1zm10 0h1v1h-1zm11 0h1v1h-1zm10 0h1v1h-1zm10 0h1v1h-1zm10 0h1v1h-1zm11 0h1v1h-1zm10 0h1v1h-1zm10 0h1v1h-1zm10 0h1v1h-1zm11 0h1v1h-1zm10 0h1v1h-1zm10 0h1v1h-1zm10 0h1v1h-1zm11 0h1v1h-1zm10 0h1v1h-1zm10 0h1v1h-1zM95 476h1v1h-1zm10 0h1v1h-1zm10 0h1v1h-1zm11 0h1v1h-1zm10 0h1v1h-1zm10 0h1v1h-1zm10 0h1v1h-1zm11 0h1v1h-1zm10 0h1v1h-1zm10 0h1v1h-1zm10 0h1v1h-1zm11 0h1v1h-1zm10 0h1v1h-1zm10 0h1v1h-1zm10 0h1v1h-1zm11 0h1v1h-1zm10 0h1v1h-1zm10 0h1v1h-1zm10 0h1v1h-1zm11 0h1v1h-1zm10 0h1v1h-1zm10 0h1v1h-1zm10 0h1v1h-1zm11 0h1v1h-1zm10 0h1v1h-1zm10 0h1v1h-1zm10 0h1v1h-1zm11 0h1v1h-1zm10 0h1v1h-1zm10 0h1v1h-1zm10 0h1v1h-1zm11 0h1v1h-1zm10 0h1v1h-1zm10 0h1v1h-1zm10 0h1v1h-1zm11 0h1v1h-1zm10 0h1v1h-1zm10 0h1v1h-1zm10 0h1v1h-1zm11 0h1v1h-1zm10 0h1v1h-1zm10 0h1v1h-1zm10 0h1v1h-1zm11 0h1v1h-1zm10 0h1v1h-1zm10 0h1v1h-1zm10 0h1v1h-1zm11 0h1v1h-1zm10 0h1v1h-1zm10 0h1v1h-1zm10 0h1v1h-1zm11 0h1v1h-1zm10 0h1v1h-1zm10 0h1v1h-1zm10 0h1v1h-1zm11 0h1v1h-1zm10 0h1v1h-1zm10 0h1v1h-1zm10 0h1v1h-1zm11 0h1v1h-1zm10 0h1v1h-1zm10 0h1v1h-1zm10 0h1v1h-1zm11 0h1v1h-1zm10 0h1v1h-1zm10 0h1v1h-1zm10 0h1v1h-1zm11 0h1v1h-1zm10 0h1v1h-1zm10 0h1v1h-1zm10 0h1v1h-1zm11 0h1v1h-1zm10 0h1v1h-1zm10 0h1v1h-1zm10 0h1v1h-1zm11 0h1v1h-1zm10 0h1v1h-1zm10 0h1v1h-1zm10 0h1v1h-1zm11 0h1v1h-1zm10 0h1v1h-1zm10 0h1v1h-1zm10 0h1v1h-1zm11 0h1v1h-1zm10 0h1v1h-1zm10 0h1v1h-1zm10 0h1v1h-1zm11 0h1v1h-1zm10 0h1v1h-1zm10 0h1v1h-1zm10 0h1v1h-1zm11 0h1v1h-1zm10 0h1v1h-1zm10 0h1v1h-1zm10 0h1v1h-1zm11 0h1v1h-1zm10 0h1v1h-1zm10 0h1v1h-1zm10 0h1v1h-1zm11 0h1v1h-1zm10 0h1v1h-1zm10 0h1v1h-1zM95 465h1v1h-1zm10 0h1v1h-1zm10 0h1v1h-1zm11 0h1v1h-1zm10 0h1v1h-1zm10 0h1v1h-1zm10 0h1v1h-1zm11 0h1v1h-1zm10 0h1v1h-1zm10 0h1v1h-1zm10 0h1v1h-1zm11 0h1v1h-1zm10 0h1v1h-1zm10 0h1v1h-1zm10 0h1v1h-1zm11 0h1v1h-1zm10 0h1v1h-1zm10 0h1v1h-1zm10 0h1v1h-1zm11 0h1v1h-1zm10 0h1v1h-1zm10 0h1v1h-1zm10 0h1v1h-1zm11 0h1v1h-1zm10 0h1v1h-1zm10 0h1v1h-1zm10 0h1v1h-1zm11 0h1v1h-1zm10 0h1v1h-1zm10 0h1v1h-1zm10 0h1v1h-1zm11 0h1v1h-1zm10 0h1v1h-1zm10 0h1v1h-1zm10 0h1v1h-1zm11 0h1v1h-1zm10 0h1v1h-1zm10 0h1v1h-1zm10 0h1v1h-1zm11 0h1v1h-1zm10 0h1v1h-1zm10 0h1v1h-1zm10 0h1v1h-1zm11 0h1v1h-1zm10 0h1v1h-1zm10 0h1v1h-1zm10 0h1v1h-1zm11 0h1v1h-1zm10 0h1v1h-1zm10 0h1v1h-1zm10 0h1v1h-1zm11 0h1v1h-1zm10 0h1v1h-1zm10 0h1v1h-1zm10 0h1v1h-1zm11 0h1v1h-1zm10 0h1v1h-1zm10 0h1v1h-1zm10 0h1v1h-1zm11 0h1v1h-1zm10 0h1v1h-1zm10 0h1v1h-1zm10 0h1v1h-1zm11 0h1v1h-1zm10 0h1v1h-1zm10 0h1v1h-1zm10 0h1v1h-1zm11 0h1v1h-1zm10 0h1v1h-1zm10 0h1v1h-1zm10 0h1v1h-1zm11 0h1v1h-1zm10 0h1v1h-1zm10 0h1v1h-1zm10 0h1v1h-1zm11 0h1v1h-1zm10 0h1v1h-1zm10 0h1v1h-1zm10 0h1v1h-1zm11 0h1v1h-1zm10 0h1v1h-1zm10 0h1v1h-1zm10 0h1v1h-1zm11 0h1v1h-1zm10 0h1v1h-1zm10 0h1v1h-1zm10 0h1v1h-1zm11 0h1v1h-1zm10 0h1v1h-1zm10 0h1v1h-1zm10 0h1v1h-1zm11 0h1v1h-1zm10 0h1v1h-1zm10 0h1v1h-1zm10 0h1v1h-1zm11 0h1v1h-1zm10 0h1v1h-1zm10 0h1v1h-1zm10 0h1v1h-1zm11 0h1v1h-1zm10 0h1v1h-1zm10 0h1v1h-1zM95 455h1v1h-1zm10 0h1v1h-1zm10 0h1v1h-1zm11 0h1v1h-1zm10 0h1v1h-1zm10 0h1v1h-1zm10 0h1v1h-1zm11 0h1v1h-1zm10 0h1v1h-1zm10 0h1v1h-1zm10 0h1v1h-1zm11 0h1v1h-1zm10 0h1v1h-1zm10 0h1v1h-1zm10 0h1v1h-1zm11 0h1v1h-1zm10 0h1v1h-1zm10 0h1v1h-1zm10 0h1v1h-1zm11 0h1v1h-1zm10 0h1v1h-1zm10 0h1v1h-1zm10 0h1v1h-1zm11 0h1v1h-1zm10 0h1v1h-1zm10 0h1v1h-1zm10 0h1v1h-1zm11 0h1v1h-1zm10 0h1v1h-1zm10 0h1v1h-1zm10 0h1v1h-1zm11 0h1v1h-1zm10 0h1v1h-1zm10 0h1v1h-1zm10 0h1v1h-1zm11 0h1v1h-1zm10 0h1v1h-1zm10 0h1v1h-1zm10 0h1v1h-1zm11 0h1v1h-1zm10 0h1v1h-1zm10 0h1v1h-1zm10 0h1v1h-1zm11 0h1v1h-1zm10 0h1v1h-1zm10 0h1v1h-1zm10 0h1v1h-1zm11 0h1v1h-1zm10 0h1v1h-1zm10 0h1v1h-1zm10 0h1v1h-1zm11 0h1v1h-1zm10 0h1v1h-1zm10 0h1v1h-1zm10 0h1v1h-1zm11 0h1v1h-1zm10 0h1v1h-1zm10 0h1v1h-1zm10 0h1v1h-1zm11 0h1v1h-1zm10 0h1v1h-1zm10 0h1v1h-1zm10 0h1v1h-1zm11 0h1v1h-1zm10 0h1v1h-1zm10 0h1v1h-1zm10 0h1v1h-1zm11 0h1v1h-1zm10 0h1v1h-1zm10 0h1v1h-1zm10 0h1v1h-1zm11 0h1v1h-1zm10 0h1v1h-1zm10 0h1v1h-1zm10 0h1v1h-1zm11 0h1v1h-1zm10 0h1v1h-1zm10 0h1v1h-1zm10 0h1v1h-1zm11 0h1v1h-1zm10 0h1v1h-1zm10 0h1v1h-1zm10 0h1v1h-1zm11 0h1v1h-1zm10 0h1v1h-1zm10 0h1v1h-1zm10 0h1v1h-1zm11 0h1v1h-1zm10 0h1v1h-1zm10 0h1v1h-1zm10 0h1v1h-1zm11 0h1v1h-1zm10 0h1v1h-1zm10 0h1v1h-1zm10 0h1v1h-1zm11 0h1v1h-1zm10 0h1v1h-1zm10 0h1v1h-1zm10 0h1v1h-1zm11 0h1v1h-1zm10 0h1v1h-1zm10 0h1v1h-1zM95 445h1v1h-1zm10 0h1v1h-1zm10 0h1v1h-1zm11 0h1v1h-1zm10 0h1v1h-1zm10 0h1v1h-1zm10 0h1v1h-1zm11 0h1v1h-1zm10 0h1v1h-1zm10 0h1v1h-1zm10 0h1v1h-1zm11 0h1v1h-1zm10 0h1v1h-1zm10 0h1v1h-1zm10 0h1v1h-1zm11 0h1v1h-1zm10 0h1v1h-1zm10 0h1v1h-1zm10 0h1v1h-1zm11 0h1v1h-1zm10 0h1v1h-1zm10 0h1v1h-1zm10 0h1v1h-1zm11 0h1v1h-1zm10 0h1v1h-1zm10 0h1v1h-1zm10 0h1v1h-1zm11 0h1v1h-1zm10 0h1v1h-1zm10 0h1v1h-1zm10 0h1v1h-1zm11 0h1v1h-1zm10 0h1v1h-1zm10 0h1v1h-1zm10 0h1v1h-1zm11 0h1v1h-1zm10 0h1v1h-1zm10 0h1v1h-1zm10 0h1v1h-1zm11 0h1v1h-1zm10 0h1v1h-1zm10 0h1v1h-1zm10 0h1v1h-1zm11 0h1v1h-1zm10 0h1v1h-1zm10 0h1v1h-1zm10 0h1v1h-1zm11 0h1v1h-1zm10 0h1v1h-1zm10 0h1v1h-1zm10 0h1v1h-1zm11 0h1v1h-1zm10 0h1v1h-1zm10 0h1v1h-1zm10 0h1v1h-1zm11 0h1v1h-1zm10 0h1v1h-1zm10 0h1v1h-1zm10 0h1v1h-1zm11 0h1v1h-1zm10 0h1v1h-1zm10 0h1v1h-1zm10 0h1v1h-1zm11 0h1v1h-1zm10 0h1v1h-1zm10 0h1v1h-1zm10 0h1v1h-1zm11 0h1v1h-1zm10 0h1v1h-1zm10 0h1v1h-1zm10 0h1v1h-1zm11 0h1v1h-1zm10 0h1v1h-1zm10 0h1v1h-1zm10 0h1v1h-1zm11 0h1v1h-1zm10 0h1v1h-1zm10 0h1v1h-1zm10 0h1v1h-1zm11 0h1v1h-1zm10 0h1v1h-1zm10 0h1v1h-1zm10 0h1v1h-1zm11 0h1v1h-1zm10 0h1v1h-1zm10 0h1v1h-1zm10 0h1v1h-1zm11 0h1v1h-1zm10 0h1v1h-1zm10 0h1v1h-1zm10 0h1v1h-1zm11 0h1v1h-1zm10 0h1v1h-1zm10 0h1v1h-1zm10 0h1v1h-1zm11 0h1v1h-1zm10 0h1v1h-1zm10 0h1v1h-1zm10 0h1v1h-1zm11 0h1v1h-1zm10 0h1v1h-1zm10 0h1v1h-1zM95 435h1v1h-1zm10 0h1v1h-1zm10 0h1v1h-1zm11 0h1v1h-1zm10 0h1v1h-1zm10 0h1v1h-1zm10 0h1v1h-1zm11 0h1v1h-1zm10 0h1v1h-1zm10 0h1v1h-1zm10 0h1v1h-1zm11 0h1v1h-1zm10 0h1v1h-1zm10 0h1v1h-1zm10 0h1v1h-1zm11 0h1v1h-1zm10 0h1v1h-1zm10 0h1v1h-1zm10 0h1v1h-1zm11 0h1v1h-1zm10 0h1v1h-1zm10 0h1v1h-1zm10 0h1v1h-1zm11 0h1v1h-1zm10 0h1v1h-1zm10 0h1v1h-1zm10 0h1v1h-1zm11 0h1v1h-1zm10 0h1v1h-1zm10 0h1v1h-1zm10 0h1v1h-1zm11 0h1v1h-1zm10 0h1v1h-1zm10 0h1v1h-1zm10 0h1v1h-1zm11 0h1v1h-1zm10 0h1v1h-1zm10 0h1v1h-1zm10 0h1v1h-1zm11 0h1v1h-1zm10 0h1v1h-1zm10 0h1v1h-1zm10 0h1v1h-1zm11 0h1v1h-1zm10 0h1v1h-1zm10 0h1v1h-1zm10 0h1v1h-1zm11 0h1v1h-1zm10 0h1v1h-1zm10 0h1v1h-1zm10 0h1v1h-1zm11 0h1v1h-1zm10 0h1v1h-1zm10 0h1v1h-1zm10 0h1v1h-1zm11 0h1v1h-1zm10 0h1v1h-1zm10 0h1v1h-1zm10 0h1v1h-1zm11 0h1v1h-1zm10 0h1v1h-1zm10 0h1v1h-1zm10 0h1v1h-1zm11 0h1v1h-1zm10 0h1v1h-1zm10 0h1v1h-1zm10 0h1v1h-1zm11 0h1v1h-1zm10 0h1v1h-1zm10 0h1v1h-1zm10 0h1v1h-1zm11 0h1v1h-1zm10 0h1v1h-1zm10 0h1v1h-1zm10 0h1v1h-1zm11 0h1v1h-1zm10 0h1v1h-1zm10 0h1v1h-1zm10 0h1v1h-1zm11 0h1v1h-1zm10 0h1v1h-1zm10 0h1v1h-1zm10 0h1v1h-1zm11 0h1v1h-1zm10 0h1v1h-1zm10 0h1v1h-1zm10 0h1v1h-1zm11 0h1v1h-1zm10 0h1v1h-1zm10 0h1v1h-1zm10 0h1v1h-1zm11 0h1v1h-1zm10 0h1v1h-1zm10 0h1v1h-1zm10 0h1v1h-1zm11 0h1v1h-1zm10 0h1v1h-1zm10 0h1v1h-1zm10 0h1v1h-1zm11 0h1v1h-1zm10 0h1v1h-1zm10 0h1v1h-1zM95 424h1v1h-1zm10 0h1v1h-1zm10 0h1v1h-1zm11 0h1v1h-1zm10 0h1v1h-1zm10 0h1v1h-1zm10 0h1v1h-1zm11 0h1v1h-1zm10 0h1v1h-1zm10 0h1v1h-1zm10 0h1v1h-1zm11 0h1v1h-1zm10 0h1v1h-1zm10 0h1v1h-1zm10 0h1v1h-1zm11 0h1v1h-1zm10 0h1v1h-1zm10 0h1v1h-1zm10 0h1v1h-1zm11 0h1v1h-1zm10 0h1v1h-1zm10 0h1v1h-1zm10 0h1v1h-1zm11 0h1v1h-1zm10 0h1v1h-1zm10 0h1v1h-1zm10 0h1v1h-1zm11 0h1v1h-1zm10 0h1v1h-1zm10 0h1v1h-1zm10 0h1v1h-1zm11 0h1v1h-1zm10 0h1v1h-1zm10 0h1v1h-1zm10 0h1v1h-1zm11 0h1v1h-1zm10 0h1v1h-1zm10 0h1v1h-1zm10 0h1v1h-1zm11 0h1v1h-1zm10 0h1v1h-1zm10 0h1v1h-1zm10 0h1v1h-1zm11 0h1v1h-1zm10 0h1v1h-1zm10 0h1v1h-1zm10 0h1v1h-1zm11 0h1v1h-1zm10 0h1v1h-1zm10 0h1v1h-1zm10 0h1v1h-1zm11 0h1v1h-1zm10 0h1v1h-1zm10 0h1v1h-1zm10 0h1v1h-1zm11 0h1v1h-1zm10 0h1v1h-1zm10 0h1v1h-1zm10 0h1v1h-1zm11 0h1v1h-1zm10 0h1v1h-1zm10 0h1v1h-1zm10 0h1v1h-1zm11 0h1v1h-1zm10 0h1v1h-1zm10 0h1v1h-1zm10 0h1v1h-1zm11 0h1v1h-1zm10 0h1v1h-1zm10 0h1v1h-1zm10 0h1v1h-1zm11 0h1v1h-1zm10 0h1v1h-1zm10 0h1v1h-1zm10 0h1v1h-1zm11 0h1v1h-1zm10 0h1v1h-1zm10 0h1v1h-1zm10 0h1v1h-1zm11 0h1v1h-1zm10 0h1v1h-1zm10 0h1v1h-1zm10 0h1v1h-1zm11 0h1v1h-1zm10 0h1v1h-1zm10 0h1v1h-1zm10 0h1v1h-1zm11 0h1v1h-1zm10 0h1v1h-1zm10 0h1v1h-1zm10 0h1v1h-1zm11 0h1v1h-1zm10 0h1v1h-1zm10 0h1v1h-1zm10 0h1v1h-1zm11 0h1v1h-1zm10 0h1v1h-1zm10 0h1v1h-1zm10 0h1v1h-1zm11 0h1v1h-1zm10 0h1v1h-1zm10 0h1v1h-1zM95 414h1v1h-1zm10 0h1v1h-1zm10 0h1v1h-1zm11 0h1v1h-1zm10 0h1v1h-1zm10 0h1v1h-1zm10 0h1v1h-1zm11 0h1v1h-1zm10 0h1v1h-1zm10 0h1v1h-1zm10 0h1v1h-1zm11 0h1v1h-1zm10 0h1v1h-1zm10 0h1v1h-1zm10 0h1v1h-1zm11 0h1v1h-1zm10 0h1v1h-1zm10 0h1v1h-1zm10 0h1v1h-1zm11 0h1v1h-1zm10 0h1v1h-1zm10 0h1v1h-1zm10 0h1v1h-1zm11 0h1v1h-1zm10 0h1v1h-1zm10 0h1v1h-1zm10 0h1v1h-1zm11 0h1v1h-1zm10 0h1v1h-1zm10 0h1v1h-1zm10 0h1v1h-1zm11 0h1v1h-1zm10 0h1v1h-1zm10 0h1v1h-1zm10 0h1v1h-1zm11 0h1v1h-1zm10 0h1v1h-1zm10 0h1v1h-1zm10 0h1v1h-1zm11 0h1v1h-1zm10 0h1v1h-1zm10 0h1v1h-1zm10 0h1v1h-1zm11 0h1v1h-1zm10 0h1v1h-1zm10 0h1v1h-1zm10 0h1v1h-1zm11 0h1v1h-1zm10 0h1v1h-1zm10 0h1v1h-1zm10 0h1v1h-1zm11 0h1v1h-1zm10 0h1v1h-1zm10 0h1v1h-1zm10 0h1v1h-1zm11 0h1v1h-1zm10 0h1v1h-1zm10 0h1v1h-1zm10 0h1v1h-1zm11 0h1v1h-1zm10 0h1v1h-1zm10 0h1v1h-1zm10 0h1v1h-1zm11 0h1v1h-1zm10 0h1v1h-1zm10 0h1v1h-1zm10 0h1v1h-1zm11 0h1v1h-1zm10 0h1v1h-1zm10 0h1v1h-1zm10 0h1v1h-1zm11 0h1v1h-1zm10 0h1v1h-1zm10 0h1v1h-1zm10 0h1v1h-1zm11 0h1v1h-1zm10 0h1v1h-1zm10 0h1v1h-1zm10 0h1v1h-1zm11 0h1v1h-1zm10 0h1v1h-1zm10 0h1v1h-1zm10 0h1v1h-1zm11 0h1v1h-1zm10 0h1v1h-1zm10 0h1v1h-1zm10 0h1v1h-1zm11 0h1v1h-1zm10 0h1v1h-1zm10 0h1v1h-1zm10 0h1v1h-1zm11 0h1v1h-1zm10 0h1v1h-1zm10 0h1v1h-1zm10 0h1v1h-1zm11 0h1v1h-1zm10 0h1v1h-1zm10 0h1v1h-1zm10 0h1v1h-1zm11 0h1v1h-1zm10 0h1v1h-1zm10 0h1v1h-1zM95 404h1v1h-1zm10 0h1v1h-1zm10 0h1v1h-1zm11 0h1v1h-1zm10 0h1v1h-1zm10 0h1v1h-1zm10 0h1v1h-1zm11 0h1v1h-1zm10 0h1v1h-1zm10 0h1v1h-1zm10 0h1v1h-1zm11 0h1v1h-1zm10 0h1v1h-1zm10 0h1v1h-1zm10 0h1v1h-1zm11 0h1v1h-1zm10 0h1v1h-1zm10 0h1v1h-1zm10 0h1v1h-1zm11 0h1v1h-1zm10 0h1v1h-1zm10 0h1v1h-1zm10 0h1v1h-1zm11 0h1v1h-1zm10 0h1v1h-1zm10 0h1v1h-1zm10 0h1v1h-1zm11 0h1v1h-1zm10 0h1v1h-1zm10 0h1v1h-1zm10 0h1v1h-1zm11 0h1v1h-1zm10 0h1v1h-1zm10 0h1v1h-1zm10 0h1v1h-1zm11 0h1v1h-1zm10 0h1v1h-1zm10 0h1v1h-1zm10 0h1v1h-1zm11 0h1v1h-1zm10 0h1v1h-1zm10 0h1v1h-1zm10 0h1v1h-1zm11 0h1v1h-1zm10 0h1v1h-1zm10 0h1v1h-1zm10 0h1v1h-1zm11 0h1v1h-1zm10 0h1v1h-1zm10 0h1v1h-1zm10 0h1v1h-1zm11 0h1v1h-1zm10 0h1v1h-1zm10 0h1v1h-1zm10 0h1v1h-1zm11 0h1v1h-1zm10 0h1v1h-1zm10 0h1v1h-1zm10 0h1v1h-1zm11 0h1v1h-1zm10 0h1v1h-1zm10 0h1v1h-1zm10 0h1v1h-1zm11 0h1v1h-1zm10 0h1v1h-1zm10 0h1v1h-1zm10 0h1v1h-1zm11 0h1v1h-1zm10 0h1v1h-1zm10 0h1v1h-1zm10 0h1v1h-1zm11 0h1v1h-1zm10 0h1v1h-1zm10 0h1v1h-1zm10 0h1v1h-1zm11 0h1v1h-1zm10 0h1v1h-1zm10 0h1v1h-1zm10 0h1v1h-1zm11 0h1v1h-1zm10 0h1v1h-1zm10 0h1v1h-1zm10 0h1v1h-1zm11 0h1v1h-1zm10 0h1v1h-1zm10 0h1v1h-1zm10 0h1v1h-1zm11 0h1v1h-1zm10 0h1v1h-1zm10 0h1v1h-1zm10 0h1v1h-1zm11 0h1v1h-1zm10 0h1v1h-1zm10 0h1v1h-1zm10 0h1v1h-1zm11 0h1v1h-1zm10 0h1v1h-1zm10 0h1v1h-1zm10 0h1v1h-1zm11 0h1v1h-1zm10 0h1v1h-1zm10 0h1v1h-1zM95 394h1v1h-1zm10 0h1v1h-1zm10 0h1v1h-1zm11 0h1v1h-1zm10 0h1v1h-1zm10 0h1v1h-1zm10 0h1v1h-1zm11 0h1v1h-1zm10 0h1v1h-1zm10 0h1v1h-1zm10 0h1v1h-1zm11 0h1v1h-1zm10 0h1v1h-1zm10 0h1v1h-1zm10 0h1v1h-1zm11 0h1v1h-1zm10 0h1v1h-1zm10 0h1v1h-1zm10 0h1v1h-1zm11 0h1v1h-1zm10 0h1v1h-1zm10 0h1v1h-1zm10 0h1v1h-1zm11 0h1v1h-1zm10 0h1v1h-1zm10 0h1v1h-1zm10 0h1v1h-1zm11 0h1v1h-1zm10 0h1v1h-1zm10 0h1v1h-1zm10 0h1v1h-1zm11 0h1v1h-1zm10 0h1v1h-1zm10 0h1v1h-1zm10 0h1v1h-1zm11 0h1v1h-1zm10 0h1v1h-1zm10 0h1v1h-1zm10 0h1v1h-1zm11 0h1v1h-1zm10 0h1v1h-1zm10 0h1v1h-1zm10 0h1v1h-1zm11 0h1v1h-1zm10 0h1v1h-1zm10 0h1v1h-1zm10 0h1v1h-1zm11 0h1v1h-1zm10 0h1v1h-1zm10 0h1v1h-1zm10 0h1v1h-1zm11 0h1v1h-1zm10 0h1v1h-1zm10 0h1v1h-1zm10 0h1v1h-1zm11 0h1v1h-1zm10 0h1v1h-1zm10 0h1v1h-1zm10 0h1v1h-1zm11 0h1v1h-1zm10 0h1v1h-1zm10 0h1v1h-1zm10 0h1v1h-1zm11 0h1v1h-1zm10 0h1v1h-1zm10 0h1v1h-1zm10 0h1v1h-1zm11 0h1v1h-1zm10 0h1v1h-1zm10 0h1v1h-1zm10 0h1v1h-1zm11 0h1v1h-1zm10 0h1v1h-1zm10 0h1v1h-1zm10 0h1v1h-1zm11 0h1v1h-1zm10 0h1v1h-1zm10 0h1v1h-1zm10 0h1v1h-1zm11 0h1v1h-1zm10 0h1v1h-1zm10 0h1v1h-1zm10 0h1v1h-1zm11 0h1v1h-1zm10 0h1v1h-1zm10 0h1v1h-1zm10 0h1v1h-1zm11 0h1v1h-1zm10 0h1v1h-1zm10 0h1v1h-1zm10 0h1v1h-1zm11 0h1v1h-1zm10 0h1v1h-1zm10 0h1v1h-1zm10 0h1v1h-1zm11 0h1v1h-1zm10 0h1v1h-1zm10 0h1v1h-1zm10 0h1v1h-1zm11 0h1v1h-1zm10 0h1v1h-1zm10 0h1v1h-1zM95 383h1v1h-1zm10 0h1v1h-1zm10 0h1v1h-1zm11 0h1v1h-1zm10 0h1v1h-1zm10 0h1v1h-1zm10 0h1v1h-1zm11 0h1v1h-1zm10 0h1v1h-1zm10 0h1v1h-1zm10 0h1v1h-1zm11 0h1v1h-1zm10 0h1v1h-1zm10 0h1v1h-1zm10 0h1v1h-1zm11 0h1v1h-1zm10 0h1v1h-1zm10 0h1v1h-1zm10 0h1v1h-1zm11 0h1v1h-1zm10 0h1v1h-1zm10 0h1v1h-1zm10 0h1v1h-1zm11 0h1v1h-1zm10 0h1v1h-1zm10 0h1v1h-1zm10 0h1v1h-1zm11 0h1v1h-1zm10 0h1v1h-1zm10 0h1v1h-1zm10 0h1v1h-1zm11 0h1v1h-1zm10 0h1v1h-1zm10 0h1v1h-1zm10 0h1v1h-1zm11 0h1v1h-1zm10 0h1v1h-1zm10 0h1v1h-1zm10 0h1v1h-1zm11 0h1v1h-1zm10 0h1v1h-1zm10 0h1v1h-1zm10 0h1v1h-1zm11 0h1v1h-1zm10 0h1v1h-1zm10 0h1v1h-1zm10 0h1v1h-1zm11 0h1v1h-1zm10 0h1v1h-1zm10 0h1v1h-1zm10 0h1v1h-1zm11 0h1v1h-1zm10 0h1v1h-1zm10 0h1v1h-1zm10 0h1v1h-1zm11 0h1v1h-1zm10 0h1v1h-1zm10 0h1v1h-1zm10 0h1v1h-1zm11 0h1v1h-1zm10 0h1v1h-1zm10 0h1v1h-1zm10 0h1v1h-1zm11 0h1v1h-1zm10 0h1v1h-1zm10 0h1v1h-1zm10 0h1v1h-1zm11 0h1v1h-1zm10 0h1v1h-1zm10 0h1v1h-1zm10 0h1v1h-1zm11 0h1v1h-1zm10 0h1v1h-1zm10 0h1v1h-1zm10 0h1v1h-1zm11 0h1v1h-1zm10 0h1v1h-1zm10 0h1v1h-1zm10 0h1v1h-1zm11 0h1v1h-1zm10 0h1v1h-1zm10 0h1v1h-1zm10 0h1v1h-1zm11 0h1v1h-1zm10 0h1v1h-1zm10 0h1v1h-1zm10 0h1v1h-1zm11 0h1v1h-1zm10 0h1v1h-1zm10 0h1v1h-1zm10 0h1v1h-1zm11 0h1v1h-1zm10 0h1v1h-1zm10 0h1v1h-1zm10 0h1v1h-1zm11 0h1v1h-1zm10 0h1v1h-1zm10 0h1v1h-1zm10 0h1v1h-1zm11 0h1v1h-1zm10 0h1v1h-1zm10 0h1v1h-1zM95 373h1v1h-1zm10 0h1v1h-1zm10 0h1v1h-1zm11 0h1v1h-1zm10 0h1v1h-1zm10 0h1v1h-1zm10 0h1v1h-1zm11 0h1v1h-1zm10 0h1v1h-1zm10 0h1v1h-1zm10 0h1v1h-1zm11 0h1v1h-1zm10 0h1v1h-1zm10 0h1v1h-1zm10 0h1v1h-1zm11 0h1v1h-1zm10 0h1v1h-1zm10 0h1v1h-1zm10 0h1v1h-1zm11 0h1v1h-1zm10 0h1v1h-1zm10 0h1v1h-1zm10 0h1v1h-1zm11 0h1v1h-1zm10 0h1v1h-1zm10 0h1v1h-1zm10 0h1v1h-1zm11 0h1v1h-1zm10 0h1v1h-1zm10 0h1v1h-1zm10 0h1v1h-1zm11 0h1v1h-1zm10 0h1v1h-1zm10 0h1v1h-1zm10 0h1v1h-1zm11 0h1v1h-1zm10 0h1v1h-1zm10 0h1v1h-1zm10 0h1v1h-1zm11 0h1v1h-1zm10 0h1v1h-1zm10 0h1v1h-1zm10 0h1v1h-1zm11 0h1v1h-1zm10 0h1v1h-1zm10 0h1v1h-1zm10 0h1v1h-1zm11 0h1v1h-1zm10 0h1v1h-1zm10 0h1v1h-1zm10 0h1v1h-1zm11 0h1v1h-1zm10 0h1v1h-1zm10 0h1v1h-1zm10 0h1v1h-1zm11 0h1v1h-1zm10 0h1v1h-1zm10 0h1v1h-1zm10 0h1v1h-1zm11 0h1v1h-1zm10 0h1v1h-1zm10 0h1v1h-1zm10 0h1v1h-1zm11 0h1v1h-1zm10 0h1v1h-1zm10 0h1v1h-1zm10 0h1v1h-1zm11 0h1v1h-1zm10 0h1v1h-1zm10 0h1v1h-1zm10 0h1v1h-1zm11 0h1v1h-1zm10 0h1v1h-1zm10 0h1v1h-1zm10 0h1v1h-1zm11 0h1v1h-1zm10 0h1v1h-1zm10 0h1v1h-1zm10 0h1v1h-1zm11 0h1v1h-1zm10 0h1v1h-1zm10 0h1v1h-1zm10 0h1v1h-1zm11 0h1v1h-1zm10 0h1v1h-1zm10 0h1v1h-1zm10 0h1v1h-1zm11 0h1v1h-1zm10 0h1v1h-1zm10 0h1v1h-1zm10 0h1v1h-1zm11 0h1v1h-1zm10 0h1v1h-1zm10 0h1v1h-1zm10 0h1v1h-1zm11 0h1v1h-1zm10 0h1v1h-1zm10 0h1v1h-1zm10 0h1v1h-1zm11 0h1v1h-1zm10 0h1v1h-1zm10 0h1v1h-1zM95 363h1v1h-1zm10 0h1v1h-1zm10 0h1v1h-1zm11 0h1v1h-1zm10 0h1v1h-1zm10 0h1v1h-1zm10 0h1v1h-1zm11 0h1v1h-1zm10 0h1v1h-1zm10 0h1v1h-1zm10 0h1v1h-1zm11 0h1v1h-1zm10 0h1v1h-1zm10 0h1v1h-1zm10 0h1v1h-1zm11 0h1v1h-1zm10 0h1v1h-1zm10 0h1v1h-1zm10 0h1v1h-1zm11 0h1v1h-1zm10 0h1v1h-1zm10 0h1v1h-1zm10 0h1v1h-1zm11 0h1v1h-1zm10 0h1v1h-1zm10 0h1v1h-1zm10 0h1v1h-1zm11 0h1v1h-1zm10 0h1v1h-1zm10 0h1v1h-1zm10 0h1v1h-1zm11 0h1v1h-1zm10 0h1v1h-1zm10 0h1v1h-1zm10 0h1v1h-1zm11 0h1v1h-1zm10 0h1v1h-1zm10 0h1v1h-1zm10 0h1v1h-1zm11 0h1v1h-1zm10 0h1v1h-1zm10 0h1v1h-1zm10 0h1v1h-1zm11 0h1v1h-1zm10 0h1v1h-1zm10 0h1v1h-1zm10 0h1v1h-1zm11 0h1v1h-1zm10 0h1v1h-1zm10 0h1v1h-1zm10 0h1v1h-1zm11 0h1v1h-1zm10 0h1v1h-1zm10 0h1v1h-1zm10 0h1v1h-1zm11 0h1v1h-1zm10 0h1v1h-1zm10 0h1v1h-1zm10 0h1v1h-1zm11 0h1v1h-1zm10 0h1v1h-1zm10 0h1v1h-1zm10 0h1v1h-1zm11 0h1v1h-1zm10 0h1v1h-1zm10 0h1v1h-1zm10 0h1v1h-1zm11 0h1v1h-1zm10 0h1v1h-1zm10 0h1v1h-1zm10 0h1v1h-1zm11 0h1v1h-1zm10 0h1v1h-1zm10 0h1v1h-1zm10 0h1v1h-1zm11 0h1v1h-1zm10 0h1v1h-1zm10 0h1v1h-1zm10 0h1v1h-1zm11 0h1v1h-1zm10 0h1v1h-1zm10 0h1v1h-1zm10 0h1v1h-1zm11 0h1v1h-1zm10 0h1v1h-1zm10 0h1v1h-1zm10 0h1v1h-1zm11 0h1v1h-1zm10 0h1v1h-1zm10 0h1v1h-1zm10 0h1v1h-1zm11 0h1v1h-1zm10 0h1v1h-1zm10 0h1v1h-1zm10 0h1v1h-1zm11 0h1v1h-1zm10 0h1v1h-1zm10 0h1v1h-1zm10 0h1v1h-1zm11 0h1v1h-1zm10 0h1v1h-1zm10 0h1v1h-1zM95 353h1v1h-1zm10 0h1v1h-1zm10 0h1v1h-1zm11 0h1v1h-1zm10 0h1v1h-1zm10 0h1v1h-1zm10 0h1v1h-1zm11 0h1v1h-1zm10 0h1v1h-1zm10 0h1v1h-1zm10 0h1v1h-1zm11 0h1v1h-1zm10 0h1v1h-1zm10 0h1v1h-1zm10 0h1v1h-1zm11 0h1v1h-1zm10 0h1v1h-1zm10 0h1v1h-1zm10 0h1v1h-1zm11 0h1v1h-1zm10 0h1v1h-1zm10 0h1v1h-1zm10 0h1v1h-1zm11 0h1v1h-1zm10 0h1v1h-1zm10 0h1v1h-1zm10 0h1v1h-1zm11 0h1v1h-1zm10 0h1v1h-1zm10 0h1v1h-1zm10 0h1v1h-1zm11 0h1v1h-1zm10 0h1v1h-1zm10 0h1v1h-1zm10 0h1v1h-1zm11 0h1v1h-1zm10 0h1v1h-1zm10 0h1v1h-1zm10 0h1v1h-1zm11 0h1v1h-1zm10 0h1v1h-1zm10 0h1v1h-1zm10 0h1v1h-1zm11 0h1v1h-1zm10 0h1v1h-1zm10 0h1v1h-1zm10 0h1v1h-1zm11 0h1v1h-1zm10 0h1v1h-1zm10 0h1v1h-1zm10 0h1v1h-1zm11 0h1v1h-1zm10 0h1v1h-1zm10 0h1v1h-1zm10 0h1v1h-1zm11 0h1v1h-1zm10 0h1v1h-1zm10 0h1v1h-1zm10 0h1v1h-1zm11 0h1v1h-1zm10 0h1v1h-1zm10 0h1v1h-1zm10 0h1v1h-1zm11 0h1v1h-1zm10 0h1v1h-1zm10 0h1v1h-1zm10 0h1v1h-1zm11 0h1v1h-1zm10 0h1v1h-1zm10 0h1v1h-1zm10 0h1v1h-1zm11 0h1v1h-1zm10 0h1v1h-1zm10 0h1v1h-1zm10 0h1v1h-1zm11 0h1v1h-1zm10 0h1v1h-1zm10 0h1v1h-1zm10 0h1v1h-1zm11 0h1v1h-1zm10 0h1v1h-1zm10 0h1v1h-1zm10 0h1v1h-1zm11 0h1v1h-1zm10 0h1v1h-1zm10 0h1v1h-1zm10 0h1v1h-1zm11 0h1v1h-1zm10 0h1v1h-1zm10 0h1v1h-1zm10 0h1v1h-1zm11 0h1v1h-1zm10 0h1v1h-1zm10 0h1v1h-1zm10 0h1v1h-1zm11 0h1v1h-1zm10 0h1v1h-1zm10 0h1v1h-1zm10 0h1v1h-1zm11 0h1v1h-1zm10 0h1v1h-1zm10 0h1v1h-1zM95 342h1v1h-1zm10 0h1v1h-1zm10 0h1v1h-1zm11 0h1v1h-1zm10 0h1v1h-1zm10 0h1v1h-1zm10 0h1v1h-1zm11 0h1v1h-1zm10 0h1v1h-1zm10 0h1v1h-1zm10 0h1v1h-1zm11 0h1v1h-1zm10 0h1v1h-1zm10 0h1v1h-1zm10 0h1v1h-1zm11 0h1v1h-1zm10 0h1v1h-1zm10 0h1v1h-1zm10 0h1v1h-1zm11 0h1v1h-1zm10 0h1v1h-1zm10 0h1v1h-1zm10 0h1v1h-1zm11 0h1v1h-1zm10 0h1v1h-1zm10 0h1v1h-1zm10 0h1v1h-1zm11 0h1v1h-1zm10 0h1v1h-1zm10 0h1v1h-1zm10 0h1v1h-1zm11 0h1v1h-1zm10 0h1v1h-1zm10 0h1v1h-1zm10 0h1v1h-1zm11 0h1v1h-1zm10 0h1v1h-1zm10 0h1v1h-1zm10 0h1v1h-1zm11 0h1v1h-1zm10 0h1v1h-1zm10 0h1v1h-1zm10 0h1v1h-1zm11 0h1v1h-1zm10 0h1v1h-1zm10 0h1v1h-1zm10 0h1v1h-1zm11 0h1v1h-1zm10 0h1v1h-1zm10 0h1v1h-1zm10 0h1v1h-1zm11 0h1v1h-1zm10 0h1v1h-1zm10 0h1v1h-1zm10 0h1v1h-1zm11 0h1v1h-1zm10 0h1v1h-1zm10 0h1v1h-1zm10 0h1v1h-1zm11 0h1v1h-1zm10 0h1v1h-1zm10 0h1v1h-1zm10 0h1v1h-1zm11 0h1v1h-1zm10 0h1v1h-1zm10 0h1v1h-1zm10 0h1v1h-1zm11 0h1v1h-1zm10 0h1v1h-1zm10 0h1v1h-1zm10 0h1v1h-1zm11 0h1v1h-1zm10 0h1v1h-1zm10 0h1v1h-1zm10 0h1v1h-1zm11 0h1v1h-1zm10 0h1v1h-1zm10 0h1v1h-1zm10 0h1v1h-1zm11 0h1v1h-1zm10 0h1v1h-1zm10 0h1v1h-1zm10 0h1v1h-1zm11 0h1v1h-1zm10 0h1v1h-1zm10 0h1v1h-1zm10 0h1v1h-1zm11 0h1v1h-1zm10 0h1v1h-1zm10 0h1v1h-1zm10 0h1v1h-1zm11 0h1v1h-1zm10 0h1v1h-1zm10 0h1v1h-1zm10 0h1v1h-1zm11 0h1v1h-1zm10 0h1v1h-1zm10 0h1v1h-1zm10 0h1v1h-1zm11 0h1v1h-1zm10 0h1v1h-1zm10 0h1v1h-1zM95 332h1v1h-1zm10 0h1v1h-1zm10 0h1v1h-1zm11 0h1v1h-1zm10 0h1v1h-1zm10 0h1v1h-1zm10 0h1v1h-1zm11 0h1v1h-1zm10 0h1v1h-1zm10 0h1v1h-1zm10 0h1v1h-1zm11 0h1v1h-1zm10 0h1v1h-1zm10 0h1v1h-1zm10 0h1v1h-1zm11 0h1v1h-1zm10 0h1v1h-1zm10 0h1v1h-1zm10 0h1v1h-1zm11 0h1v1h-1zm10 0h1v1h-1zm10 0h1v1h-1zm10 0h1v1h-1zm11 0h1v1h-1zm10 0h1v1h-1zm10 0h1v1h-1zm10 0h1v1h-1zm11 0h1v1h-1zm10 0h1v1h-1zm10 0h1v1h-1zm10 0h1v1h-1zm11 0h1v1h-1zm10 0h1v1h-1zm10 0h1v1h-1zm10 0h1v1h-1zm11 0h1v1h-1zm10 0h1v1h-1zm10 0h1v1h-1zm10 0h1v1h-1zm11 0h1v1h-1zm10 0h1v1h-1zm10 0h1v1h-1zm10 0h1v1h-1zm11 0h1v1h-1zm10 0h1v1h-1zm10 0h1v1h-1zm10 0h1v1h-1zm11 0h1v1h-1zm10 0h1v1h-1zm10 0h1v1h-1zm10 0h1v1h-1zm11 0h1v1h-1zm10 0h1v1h-1zm10 0h1v1h-1zm10 0h1v1h-1zm11 0h1v1h-1zm10 0h1v1h-1zm10 0h1v1h-1zm10 0h1v1h-1zm11 0h1v1h-1zm10 0h1v1h-1zm10 0h1v1h-1zm10 0h1v1h-1zm11 0h1v1h-1zm10 0h1v1h-1zm10 0h1v1h-1zm10 0h1v1h-1zm11 0h1v1h-1zm10 0h1v1h-1zm10 0h1v1h-1zm10 0h1v1h-1zm11 0h1v1h-1zm10 0h1v1h-1zm10 0h1v1h-1zm10 0h1v1h-1zm11 0h1v1h-1zm10 0h1v1h-1zm10 0h1v1h-1zm10 0h1v1h-1zm11 0h1v1h-1zm10 0h1v1h-1zm10 0h1v1h-1zm10 0h1v1h-1zm11 0h1v1h-1zm10 0h1v1h-1zm10 0h1v1h-1zm10 0h1v1h-1zm11 0h1v1h-1zm10 0h1v1h-1zm10 0h1v1h-1zm10 0h1v1h-1zm11 0h1v1h-1zm10 0h1v1h-1zm10 0h1v1h-1zm10 0h1v1h-1zm11 0h1v1h-1zm10 0h1v1h-1zm10 0h1v1h-1zm10 0h1v1h-1zm11 0h1v1h-1zm10 0h1v1h-1zm10 0h1v1h-1zM95 322h1v1h-1zm10 0h1v1h-1zm10 0h1v1h-1zm11 0h1v1h-1zm10 0h1v1h-1zm10 0h1v1h-1zm10 0h1v1h-1zm11 0h1v1h-1zm10 0h1v1h-1zm10 0h1v1h-1zm10 0h1v1h-1zm11 0h1v1h-1zm10 0h1v1h-1zm10 0h1v1h-1zm10 0h1v1h-1zm11 0h1v1h-1zm10 0h1v1h-1zm10 0h1v1h-1zm10 0h1v1h-1zm11 0h1v1h-1zm10 0h1v1h-1zm10 0h1v1h-1zm10 0h1v1h-1zm11 0h1v1h-1zm10 0h1v1h-1zm10 0h1v1h-1zm10 0h1v1h-1zm11 0h1v1h-1zm10 0h1v1h-1zm10 0h1v1h-1zm10 0h1v1h-1zm11 0h1v1h-1zm10 0h1v1h-1zm10 0h1v1h-1zm10 0h1v1h-1zm11 0h1v1h-1zm10 0h1v1h-1zm10 0h1v1h-1zm10 0h1v1h-1zm11 0h1v1h-1zm10 0h1v1h-1zm10 0h1v1h-1zm10 0h1v1h-1zm11 0h1v1h-1zm10 0h1v1h-1zm10 0h1v1h-1zm10 0h1v1h-1zm11 0h1v1h-1zm10 0h1v1h-1zm10 0h1v1h-1zm10 0h1v1h-1zm11 0h1v1h-1zm10 0h1v1h-1zm10 0h1v1h-1zm10 0h1v1h-1zm11 0h1v1h-1zm10 0h1v1h-1zm10 0h1v1h-1zm10 0h1v1h-1zm11 0h1v1h-1zm10 0h1v1h-1zm10 0h1v1h-1zm10 0h1v1h-1zm11 0h1v1h-1zm10 0h1v1h-1zm10 0h1v1h-1zm10 0h1v1h-1zm11 0h1v1h-1zm10 0h1v1h-1zm10 0h1v1h-1zm10 0h1v1h-1zm11 0h1v1h-1zm10 0h1v1h-1zm10 0h1v1h-1zm10 0h1v1h-1zm11 0h1v1h-1zm10 0h1v1h-1zm10 0h1v1h-1zm10 0h1v1h-1zm11 0h1v1h-1zm10 0h1v1h-1zm10 0h1v1h-1zm10 0h1v1h-1zm11 0h1v1h-1zm10 0h1v1h-1zm10 0h1v1h-1zm10 0h1v1h-1zm11 0h1v1h-1zm10 0h1v1h-1zm10 0h1v1h-1zm10 0h1v1h-1zm11 0h1v1h-1zm10 0h1v1h-1zm10 0h1v1h-1zm10 0h1v1h-1zm11 0h1v1h-1zm10 0h1v1h-1zm10 0h1v1h-1zm10 0h1v1h-1zm11 0h1v1h-1zm10 0h1v1h-1zm10 0h1v1h-1zM95 312h1v1h-1zm10 0h1v1h-1zm10 0h1v1h-1zm11 0h1v1h-1zm10 0h1v1h-1zm10 0h1v1h-1zm10 0h1v1h-1zm11 0h1v1h-1zm10 0h1v1h-1zm10 0h1v1h-1zm10 0h1v1h-1zm11 0h1v1h-1zm10 0h1v1h-1zm10 0h1v1h-1zm10 0h1v1h-1zm11 0h1v1h-1zm10 0h1v1h-1zm10 0h1v1h-1zm10 0h1v1h-1zm11 0h1v1h-1zm10 0h1v1h-1zm10 0h1v1h-1zm10 0h1v1h-1zm11 0h1v1h-1zm10 0h1v1h-1zm10 0h1v1h-1zm10 0h1v1h-1zm11 0h1v1h-1zm10 0h1v1h-1zm10 0h1v1h-1zm10 0h1v1h-1zm11 0h1v1h-1zm10 0h1v1h-1zm10 0h1v1h-1zm10 0h1v1h-1zm11 0h1v1h-1zm10 0h1v1h-1zm10 0h1v1h-1zm10 0h1v1h-1zm11 0h1v1h-1zm10 0h1v1h-1zm10 0h1v1h-1zm10 0h1v1h-1zm11 0h1v1h-1zm10 0h1v1h-1zm10 0h1v1h-1zm10 0h1v1h-1zm11 0h1v1h-1zm10 0h1v1h-1zm10 0h1v1h-1zm10 0h1v1h-1zm11 0h1v1h-1zm10 0h1v1h-1zm10 0h1v1h-1zm10 0h1v1h-1zm11 0h1v1h-1zm10 0h1v1h-1zm10 0h1v1h-1zm10 0h1v1h-1zm11 0h1v1h-1zm10 0h1v1h-1zm10 0h1v1h-1zm10 0h1v1h-1zm11 0h1v1h-1zm10 0h1v1h-1zm10 0h1v1h-1zm10 0h1v1h-1zm11 0h1v1h-1zm10 0h1v1h-1zm10 0h1v1h-1zm10 0h1v1h-1zm11 0h1v1h-1zm10 0h1v1h-1zm10 0h1v1h-1zm10 0h1v1h-1zm11 0h1v1h-1zm10 0h1v1h-1zm10 0h1v1h-1zm10 0h1v1h-1zm11 0h1v1h-1zm10 0h1v1h-1zm10 0h1v1h-1zm10 0h1v1h-1zm11 0h1v1h-1zm10 0h1v1h-1zm10 0h1v1h-1zm10 0h1v1h-1zm11 0h1v1h-1zm10 0h1v1h-1zm10 0h1v1h-1zm10 0h1v1h-1zm11 0h1v1h-1zm10 0h1v1h-1zm10 0h1v1h-1zm10 0h1v1h-1zm11 0h1v1h-1zm10 0h1v1h-1zm10 0h1v1h-1zm10 0h1v1h-1zm11 0h1v1h-1zm10 0h1v1h-1zm10 0h1v1h-1zM95 301h1v1h-1zm10 0h1v1h-1zm10 0h1v1h-1zm11 0h1v1h-1zm10 0h1v1h-1zm10 0h1v1h-1zm10 0h1v1h-1zm11 0h1v1h-1zm10 0h1v1h-1zm10 0h1v1h-1zm10 0h1v1h-1zm11 0h1v1h-1zm10 0h1v1h-1zm10 0h1v1h-1zm10 0h1v1h-1zm11 0h1v1h-1zm10 0h1v1h-1zm10 0h1v1h-1zm10 0h1v1h-1zm11 0h1v1h-1zm10 0h1v1h-1zm10 0h1v1h-1zm10 0h1v1h-1zm11 0h1v1h-1zm10 0h1v1h-1zm10 0h1v1h-1zm10 0h1v1h-1zm11 0h1v1h-1zm10 0h1v1h-1zm10 0h1v1h-1zm10 0h1v1h-1zm11 0h1v1h-1zm10 0h1v1h-1zm10 0h1v1h-1zm10 0h1v1h-1zm11 0h1v1h-1zm10 0h1v1h-1zm10 0h1v1h-1zm10 0h1v1h-1zm11 0h1v1h-1zm10 0h1v1h-1zm10 0h1v1h-1zm10 0h1v1h-1zm11 0h1v1h-1zm10 0h1v1h-1zm10 0h1v1h-1zm10 0h1v1h-1zm11 0h1v1h-1zm10 0h1v1h-1zm10 0h1v1h-1zm10 0h1v1h-1zm11 0h1v1h-1zm10 0h1v1h-1zm10 0h1v1h-1zm10 0h1v1h-1zm11 0h1v1h-1zm10 0h1v1h-1zm10 0h1v1h-1zm10 0h1v1h-1zm11 0h1v1h-1zm10 0h1v1h-1zm10 0h1v1h-1zm10 0h1v1h-1zm11 0h1v1h-1zm10 0h1v1h-1zm10 0h1v1h-1zm10 0h1v1h-1zm11 0h1v1h-1zm10 0h1v1h-1zm10 0h1v1h-1zm10 0h1v1h-1zm11 0h1v1h-1zm10 0h1v1h-1zm10 0h1v1h-1zm10 0h1v1h-1zm11 0h1v1h-1zm10 0h1v1h-1zm10 0h1v1h-1zm10 0h1v1h-1zm11 0h1v1h-1zm10 0h1v1h-1zm10 0h1v1h-1zm10 0h1v1h-1zm11 0h1v1h-1zm10 0h1v1h-1zm10 0h1v1h-1zm10 0h1v1h-1zm11 0h1v1h-1zm10 0h1v1h-1zm10 0h1v1h-1zm10 0h1v1h-1zm11 0h1v1h-1zm10 0h1v1h-1zm10 0h1v1h-1zm10 0h1v1h-1zm11 0h1v1h-1zm10 0h1v1h-1zm10 0h1v1h-1zm10 0h1v1h-1zm11 0h1v1h-1zm10 0h1v1h-1zm10 0h1v1h-1zM95 291h1v1h-1zm10 0h1v1h-1zm10 0h1v1h-1zm11 0h1v1h-1zm10 0h1v1h-1zm10 0h1v1h-1zm10 0h1v1h-1zm11 0h1v1h-1zm10 0h1v1h-1zm10 0h1v1h-1zm10 0h1v1h-1zm11 0h1v1h-1zm10 0h1v1h-1zm10 0h1v1h-1zm10 0h1v1h-1zm11 0h1v1h-1zm10 0h1v1h-1zm10 0h1v1h-1zm10 0h1v1h-1zm11 0h1v1h-1zm10 0h1v1h-1zm10 0h1v1h-1zm10 0h1v1h-1zm11 0h1v1h-1zm10 0h1v1h-1zm10 0h1v1h-1zm10 0h1v1h-1zm11 0h1v1h-1zm10 0h1v1h-1zm10 0h1v1h-1zm10 0h1v1h-1zm11 0h1v1h-1zm10 0h1v1h-1zm10 0h1v1h-1zm10 0h1v1h-1zm11 0h1v1h-1zm10 0h1v1h-1zm10 0h1v1h-1zm10 0h1v1h-1zm11 0h1v1h-1zm10 0h1v1h-1zm10 0h1v1h-1zm10 0h1v1h-1zm11 0h1v1h-1zm10 0h1v1h-1zm10 0h1v1h-1zm10 0h1v1h-1zm11 0h1v1h-1zm10 0h1v1h-1zm10 0h1v1h-1zm10 0h1v1h-1zm11 0h1v1h-1zm10 0h1v1h-1zm10 0h1v1h-1zm10 0h1v1h-1zm11 0h1v1h-1zm10 0h1v1h-1zm10 0h1v1h-1zm10 0h1v1h-1zm11 0h1v1h-1zm10 0h1v1h-1zm10 0h1v1h-1zm10 0h1v1h-1zm11 0h1v1h-1zm10 0h1v1h-1zm10 0h1v1h-1zm10 0h1v1h-1zm11 0h1v1h-1zm10 0h1v1h-1zm10 0h1v1h-1zm10 0h1v1h-1zm11 0h1v1h-1zm10 0h1v1h-1zm10 0h1v1h-1zm10 0h1v1h-1zm11 0h1v1h-1zm10 0h1v1h-1zm10 0h1v1h-1zm10 0h1v1h-1zm11 0h1v1h-1zm10 0h1v1h-1zm10 0h1v1h-1zm10 0h1v1h-1zm11 0h1v1h-1zm10 0h1v1h-1zm10 0h1v1h-1zm10 0h1v1h-1zm11 0h1v1h-1zm10 0h1v1h-1zm10 0h1v1h-1zm10 0h1v1h-1zm11 0h1v1h-1zm10 0h1v1h-1zm10 0h1v1h-1zm10 0h1v1h-1zm11 0h1v1h-1zm10 0h1v1h-1zm10 0h1v1h-1zm10 0h1v1h-1zm11 0h1v1h-1zm10 0h1v1h-1zm10 0h1v1h-1zM95 281h1v1h-1zm10 0h1v1h-1zm10 0h1v1h-1zm11 0h1v1h-1zm10 0h1v1h-1zm10 0h1v1h-1zm10 0h1v1h-1zm11 0h1v1h-1zm10 0h1v1h-1zm10 0h1v1h-1zm10 0h1v1h-1zm11 0h1v1h-1zm10 0h1v1h-1zm10 0h1v1h-1zm10 0h1v1h-1zm11 0h1v1h-1zm10 0h1v1h-1zm10 0h1v1h-1zm10 0h1v1h-1zm11 0h1v1h-1zm10 0h1v1h-1zm10 0h1v1h-1zm10 0h1v1h-1zm11 0h1v1h-1zm10 0h1v1h-1zm10 0h1v1h-1zm10 0h1v1h-1zm11 0h1v1h-1zm10 0h1v1h-1zm10 0h1v1h-1zm10 0h1v1h-1zm11 0h1v1h-1zm10 0h1v1h-1zm10 0h1v1h-1zm10 0h1v1h-1zm11 0h1v1h-1zm10 0h1v1h-1zm10 0h1v1h-1zm10 0h1v1h-1zm11 0h1v1h-1zm10 0h1v1h-1zm10 0h1v1h-1zm10 0h1v1h-1zm11 0h1v1h-1zm10 0h1v1h-1zm10 0h1v1h-1zm10 0h1v1h-1zm11 0h1v1h-1zm10 0h1v1h-1zm10 0h1v1h-1zm10 0h1v1h-1zm11 0h1v1h-1zm10 0h1v1h-1zm10 0h1v1h-1zm10 0h1v1h-1zm11 0h1v1h-1zm10 0h1v1h-1zm10 0h1v1h-1zm10 0h1v1h-1zm11 0h1v1h-1zm10 0h1v1h-1zm10 0h1v1h-1zm10 0h1v1h-1zm11 0h1v1h-1zm10 0h1v1h-1zm10 0h1v1h-1zm10 0h1v1h-1zm11 0h1v1h-1zm10 0h1v1h-1zm10 0h1v1h-1zm10 0h1v1h-1zm11 0h1v1h-1zm10 0h1v1h-1zm10 0h1v1h-1zm10 0h1v1h-1zm11 0h1v1h-1zm10 0h1v1h-1zm10 0h1v1h-1zm10 0h1v1h-1zm11 0h1v1h-1zm10 0h1v1h-1zm10 0h1v1h-1zm10 0h1v1h-1zm11 0h1v1h-1zm10 0h1v1h-1zm10 0h1v1h-1zm10 0h1v1h-1zm11 0h1v1h-1zm10 0h1v1h-1zm10 0h1v1h-1zm10 0h1v1h-1zm11 0h1v1h-1zm10 0h1v1h-1zm10 0h1v1h-1zm10 0h1v1h-1zm11 0h1v1h-1zm10 0h1v1h-1zm10 0h1v1h-1zm10 0h1v1h-1zm11 0h1v1h-1zm10 0h1v1h-1zm10 0h1v1h-1zM95 271h1v1h-1zm10 0h1v1h-1zm10 0h1v1h-1zm11 0h1v1h-1zm10 0h1v1h-1zm10 0h1v1h-1zm10 0h1v1h-1zm11 0h1v1h-1zm10 0h1v1h-1zm10 0h1v1h-1zm10 0h1v1h-1zm11 0h1v1h-1zm10 0h1v1h-1zm10 0h1v1h-1zm10 0h1v1h-1zm11 0h1v1h-1zm10 0h1v1h-1zm10 0h1v1h-1zm10 0h1v1h-1zm11 0h1v1h-1zm10 0h1v1h-1zm10 0h1v1h-1zm10 0h1v1h-1zm11 0h1v1h-1zm10 0h1v1h-1zm10 0h1v1h-1zm10 0h1v1h-1zm11 0h1v1h-1zm10 0h1v1h-1zm10 0h1v1h-1zm10 0h1v1h-1zm11 0h1v1h-1zm10 0h1v1h-1zm10 0h1v1h-1zm10 0h1v1h-1zm11 0h1v1h-1zm10 0h1v1h-1zm10 0h1v1h-1zm10 0h1v1h-1zm11 0h1v1h-1zm10 0h1v1h-1zm10 0h1v1h-1zm10 0h1v1h-1zm11 0h1v1h-1zm10 0h1v1h-1zm10 0h1v1h-1zm10 0h1v1h-1zm11 0h1v1h-1zm10 0h1v1h-1zm10 0h1v1h-1zm10 0h1v1h-1zm11 0h1v1h-1zm10 0h1v1h-1zm10 0h1v1h-1zm10 0h1v1h-1zm11 0h1v1h-1zm10 0h1v1h-1zm10 0h1v1h-1zm10 0h1v1h-1zm11 0h1v1h-1zm10 0h1v1h-1zm10 0h1v1h-1zm10 0h1v1h-1zm11 0h1v1h-1zm10 0h1v1h-1zm10 0h1v1h-1zm10 0h1v1h-1zm11 0h1v1h-1zm10 0h1v1h-1zm10 0h1v1h-1zm10 0h1v1h-1zm11 0h1v1h-1zm10 0h1v1h-1zm10 0h1v1h-1zm10 0h1v1h-1zm11 0h1v1h-1zm10 0h1v1h-1zm10 0h1v1h-1zm10 0h1v1h-1zm11 0h1v1h-1zm10 0h1v1h-1zm10 0h1v1h-1zm10 0h1v1h-1zm11 0h1v1h-1zm10 0h1v1h-1zm10 0h1v1h-1zm10 0h1v1h-1zm11 0h1v1h-1zm10 0h1v1h-1zm10 0h1v1h-1zm10 0h1v1h-1zm11 0h1v1h-1zm10 0h1v1h-1zm10 0h1v1h-1zm10 0h1v1h-1zm11 0h1v1h-1zm10 0h1v1h-1zm10 0h1v1h-1zm10 0h1v1h-1zm11 0h1v1h-1zm10 0h1v1h-1zm10 0h1v1h-1zM95 260h1v1h-1zm10 0h1v1h-1zm10 0h1v1h-1zm11 0h1v1h-1zm10 0h1v1h-1zm10 0h1v1h-1zm10 0h1v1h-1zm11 0h1v1h-1zm10 0h1v1h-1zm10 0h1v1h-1zm10 0h1v1h-1zm11 0h1v1h-1zm10 0h1v1h-1zm10 0h1v1h-1zm10 0h1v1h-1zm11 0h1v1h-1zm10 0h1v1h-1zm10 0h1v1h-1zm10 0h1v1h-1zm11 0h1v1h-1zm10 0h1v1h-1zm10 0h1v1h-1zm10 0h1v1h-1zm11 0h1v1h-1zm10 0h1v1h-1zm10 0h1v1h-1zm10 0h1v1h-1zm11 0h1v1h-1zm10 0h1v1h-1zm10 0h1v1h-1zm10 0h1v1h-1zm11 0h1v1h-1zm10 0h1v1h-1zm10 0h1v1h-1zm10 0h1v1h-1zm11 0h1v1h-1zm10 0h1v1h-1zm10 0h1v1h-1zm10 0h1v1h-1zm11 0h1v1h-1zm10 0h1v1h-1zm10 0h1v1h-1zm10 0h1v1h-1zm11 0h1v1h-1zm10 0h1v1h-1zm10 0h1v1h-1zm10 0h1v1h-1zm11 0h1v1h-1zm10 0h1v1h-1zm10 0h1v1h-1zm10 0h1v1h-1zm11 0h1v1h-1zm10 0h1v1h-1zm10 0h1v1h-1zm10 0h1v1h-1zm11 0h1v1h-1zm10 0h1v1h-1zm10 0h1v1h-1zm10 0h1v1h-1zm11 0h1v1h-1zm10 0h1v1h-1zm10 0h1v1h-1zm10 0h1v1h-1zm11 0h1v1h-1zm10 0h1v1h-1zm10 0h1v1h-1zm10 0h1v1h-1zm11 0h1v1h-1zm10 0h1v1h-1zm10 0h1v1h-1zm10 0h1v1h-1zm11 0h1v1h-1zm10 0h1v1h-1zm10 0h1v1h-1zm10 0h1v1h-1zm11 0h1v1h-1zm10 0h1v1h-1zm10 0h1v1h-1zm10 0h1v1h-1zm11 0h1v1h-1zm10 0h1v1h-1zm10 0h1v1h-1zm10 0h1v1h-1zm11 0h1v1h-1zm10 0h1v1h-1zm10 0h1v1h-1zm10 0h1v1h-1zm11 0h1v1h-1zm10 0h1v1h-1zm10 0h1v1h-1zm10 0h1v1h-1zm11 0h1v1h-1zm10 0h1v1h-1zm10 0h1v1h-1zm10 0h1v1h-1zm11 0h1v1h-1zm10 0h1v1h-1zm10 0h1v1h-1zm10 0h1v1h-1zm11 0h1v1h-1zm10 0h1v1h-1zm10 0h1v1h-1zM95 250h1v1h-1zm10 0h1v1h-1zm10 0h1v1h-1zm11 0h1v1h-1zm10 0h1v1h-1zm10 0h1v1h-1zm10 0h1v1h-1zm11 0h1v1h-1zm10 0h1v1h-1zm10 0h1v1h-1zm10 0h1v1h-1zm11 0h1v1h-1zm10 0h1v1h-1zm10 0h1v1h-1zm10 0h1v1h-1zm11 0h1v1h-1zm10 0h1v1h-1zm10 0h1v1h-1zm10 0h1v1h-1zm11 0h1v1h-1zm10 0h1v1h-1zm10 0h1v1h-1zm10 0h1v1h-1zm11 0h1v1h-1zm10 0h1v1h-1zm10 0h1v1h-1zm10 0h1v1h-1zm11 0h1v1h-1zm10 0h1v1h-1zm10 0h1v1h-1zm10 0h1v1h-1zm11 0h1v1h-1zm10 0h1v1h-1zm10 0h1v1h-1zm10 0h1v1h-1zm11 0h1v1h-1zm10 0h1v1h-1zm10 0h1v1h-1zm10 0h1v1h-1zm11 0h1v1h-1zm10 0h1v1h-1zm10 0h1v1h-1zm10 0h1v1h-1zm11 0h1v1h-1zm10 0h1v1h-1zm10 0h1v1h-1zm10 0h1v1h-1zm11 0h1v1h-1zm10 0h1v1h-1zm10 0h1v1h-1zm10 0h1v1h-1zm11 0h1v1h-1zm10 0h1v1h-1zm10 0h1v1h-1zm10 0h1v1h-1zm11 0h1v1h-1zm10 0h1v1h-1zm10 0h1v1h-1zm10 0h1v1h-1zm11 0h1v1h-1zm10 0h1v1h-1zm10 0h1v1h-1zm10 0h1v1h-1zm11 0h1v1h-1zm10 0h1v1h-1zm10 0h1v1h-1zm10 0h1v1h-1zm11 0h1v1h-1zm10 0h1v1h-1zm10 0h1v1h-1zm10 0h1v1h-1zm11 0h1v1h-1zm10 0h1v1h-1zm10 0h1v1h-1zm10 0h1v1h-1zm11 0h1v1h-1zm10 0h1v1h-1zm10 0h1v1h-1zm10 0h1v1h-1zm11 0h1v1h-1zm10 0h1v1h-1zm10 0h1v1h-1zm10 0h1v1h-1zm11 0h1v1h-1zm10 0h1v1h-1zm10 0h1v1h-1zm10 0h1v1h-1zm11 0h1v1h-1zm10 0h1v1h-1zm10 0h1v1h-1zm10 0h1v1h-1zm11 0h1v1h-1zm10 0h1v1h-1zm10 0h1v1h-1zm10 0h1v1h-1zm11 0h1v1h-1zm10 0h1v1h-1zm10 0h1v1h-1zm10 0h1v1h-1zm11 0h1v1h-1zm10 0h1v1h-1zm10 0h1v1h-1zM95 240h1v1h-1zm10 0h1v1h-1zm10 0h1v1h-1zm11 0h1v1h-1zm10 0h1v1h-1zm10 0h1v1h-1zm10 0h1v1h-1zm11 0h1v1h-1zm10 0h1v1h-1zm10 0h1v1h-1zm10 0h1v1h-1zm11 0h1v1h-1zm10 0h1v1h-1zm10 0h1v1h-1zm10 0h1v1h-1zm11 0h1v1h-1zm10 0h1v1h-1zm10 0h1v1h-1zm10 0h1v1h-1zm11 0h1v1h-1zm10 0h1v1h-1zm10 0h1v1h-1zm10 0h1v1h-1zm11 0h1v1h-1zm10 0h1v1h-1zm10 0h1v1h-1zm10 0h1v1h-1zm11 0h1v1h-1zm10 0h1v1h-1zm10 0h1v1h-1zm10 0h1v1h-1zm11 0h1v1h-1zm10 0h1v1h-1zm10 0h1v1h-1zm10 0h1v1h-1zm11 0h1v1h-1zm10 0h1v1h-1zm10 0h1v1h-1zm10 0h1v1h-1zm11 0h1v1h-1zm10 0h1v1h-1zm10 0h1v1h-1zm10 0h1v1h-1zm11 0h1v1h-1zm10 0h1v1h-1zm10 0h1v1h-1zm10 0h1v1h-1zm11 0h1v1h-1zm10 0h1v1h-1zm10 0h1v1h-1zm10 0h1v1h-1zm11 0h1v1h-1zm10 0h1v1h-1zm10 0h1v1h-1zm10 0h1v1h-1zm11 0h1v1h-1zm10 0h1v1h-1zm10 0h1v1h-1zm10 0h1v1h-1zm11 0h1v1h-1zm10 0h1v1h-1zm10 0h1v1h-1zm10 0h1v1h-1zm11 0h1v1h-1zm10 0h1v1h-1zm10 0h1v1h-1zm10 0h1v1h-1zm11 0h1v1h-1zm10 0h1v1h-1zm10 0h1v1h-1zm10 0h1v1h-1zm11 0h1v1h-1zm10 0h1v1h-1zm10 0h1v1h-1zm10 0h1v1h-1zm11 0h1v1h-1zm10 0h1v1h-1zm10 0h1v1h-1zm10 0h1v1h-1zm11 0h1v1h-1zm10 0h1v1h-1zm10 0h1v1h-1zm10 0h1v1h-1zm11 0h1v1h-1zm10 0h1v1h-1zm10 0h1v1h-1zm10 0h1v1h-1zm11 0h1v1h-1zm10 0h1v1h-1zm10 0h1v1h-1zm10 0h1v1h-1zm11 0h1v1h-1zm10 0h1v1h-1zm10 0h1v1h-1zm10 0h1v1h-1zm11 0h1v1h-1zm10 0h1v1h-1zm10 0h1v1h-1zm10 0h1v1h-1zm11 0h1v1h-1zm10 0h1v1h-1zm10 0h1v1h-1zM95 230h1v1h-1zm10 0h1v1h-1zm10 0h1v1h-1zm11 0h1v1h-1zm10 0h1v1h-1zm10 0h1v1h-1zm10 0h1v1h-1zm11 0h1v1h-1zm10 0h1v1h-1zm10 0h1v1h-1zm10 0h1v1h-1zm11 0h1v1h-1zm10 0h1v1h-1zm10 0h1v1h-1zm10 0h1v1h-1zm11 0h1v1h-1zm10 0h1v1h-1zm10 0h1v1h-1zm10 0h1v1h-1zm11 0h1v1h-1zm10 0h1v1h-1zm10 0h1v1h-1zm10 0h1v1h-1zm11 0h1v1h-1zm10 0h1v1h-1zm10 0h1v1h-1zm10 0h1v1h-1zm11 0h1v1h-1zm10 0h1v1h-1zm10 0h1v1h-1zm10 0h1v1h-1zm11 0h1v1h-1zm10 0h1v1h-1zm10 0h1v1h-1zm10 0h1v1h-1zm11 0h1v1h-1zm10 0h1v1h-1zm10 0h1v1h-1zm10 0h1v1h-1zm11 0h1v1h-1zm10 0h1v1h-1zm10 0h1v1h-1zm10 0h1v1h-1zm11 0h1v1h-1zm10 0h1v1h-1zm10 0h1v1h-1zm10 0h1v1h-1zm11 0h1v1h-1zm10 0h1v1h-1zm10 0h1v1h-1zm10 0h1v1h-1zm11 0h1v1h-1zm10 0h1v1h-1zm10 0h1v1h-1zm10 0h1v1h-1zm11 0h1v1h-1zm10 0h1v1h-1zm10 0h1v1h-1zm10 0h1v1h-1zm11 0h1v1h-1zm10 0h1v1h-1zm10 0h1v1h-1zm10 0h1v1h-1zm11 0h1v1h-1zm10 0h1v1h-1zm10 0h1v1h-1zm10 0h1v1h-1zm11 0h1v1h-1zm10 0h1v1h-1zm10 0h1v1h-1zm10 0h1v1h-1zm11 0h1v1h-1zm10 0h1v1h-1zm10 0h1v1h-1zm10 0h1v1h-1zm11 0h1v1h-1zm10 0h1v1h-1zm10 0h1v1h-1zm10 0h1v1h-1zm11 0h1v1h-1zm10 0h1v1h-1zm10 0h1v1h-1zm10 0h1v1h-1zm11 0h1v1h-1zm10 0h1v1h-1zm10 0h1v1h-1zm10 0h1v1h-1zm11 0h1v1h-1zm10 0h1v1h-1zm10 0h1v1h-1zm10 0h1v1h-1zm11 0h1v1h-1zm10 0h1v1h-1zm10 0h1v1h-1zm10 0h1v1h-1zm11 0h1v1h-1zm10 0h1v1h-1zm10 0h1v1h-1zm10 0h1v1h-1zm11 0h1v1h-1zm10 0h1v1h-1zm10 0h1v1h-1zM95 219h1v1h-1zm10 0h1v1h-1zm10 0h1v1h-1zm11 0h1v1h-1zm10 0h1v1h-1zm10 0h1v1h-1zm10 0h1v1h-1zm11 0h1v1h-1zm10 0h1v1h-1zm10 0h1v1h-1zm10 0h1v1h-1zm11 0h1v1h-1zm10 0h1v1h-1zm10 0h1v1h-1zm10 0h1v1h-1zm11 0h1v1h-1zm10 0h1v1h-1zm10 0h1v1h-1zm10 0h1v1h-1zm11 0h1v1h-1zm10 0h1v1h-1zm10 0h1v1h-1zm10 0h1v1h-1zm11 0h1v1h-1zm10 0h1v1h-1zm10 0h1v1h-1zm10 0h1v1h-1zm11 0h1v1h-1zm10 0h1v1h-1zm10 0h1v1h-1zm10 0h1v1h-1zm11 0h1v1h-1zm10 0h1v1h-1zm10 0h1v1h-1zm10 0h1v1h-1zm11 0h1v1h-1zm10 0h1v1h-1zm10 0h1v1h-1zm10 0h1v1h-1zm11 0h1v1h-1zm10 0h1v1h-1zm10 0h1v1h-1zm10 0h1v1h-1zm11 0h1v1h-1zm10 0h1v1h-1zm10 0h1v1h-1zm10 0h1v1h-1zm11 0h1v1h-1zm10 0h1v1h-1zm10 0h1v1h-1zm10 0h1v1h-1zm11 0h1v1h-1zm10 0h1v1h-1zm10 0h1v1h-1zm10 0h1v1h-1zm11 0h1v1h-1zm10 0h1v1h-1zm10 0h1v1h-1zm10 0h1v1h-1zm11 0h1v1h-1zm10 0h1v1h-1zm10 0h1v1h-1zm10 0h1v1h-1zm11 0h1v1h-1zm10 0h1v1h-1zm10 0h1v1h-1zm10 0h1v1h-1zm11 0h1v1h-1zm10 0h1v1h-1zm10 0h1v1h-1zm10 0h1v1h-1zm11 0h1v1h-1zm10 0h1v1h-1zm10 0h1v1h-1zm10 0h1v1h-1zm11 0h1v1h-1zm10 0h1v1h-1zm10 0h1v1h-1zm10 0h1v1h-1zm11 0h1v1h-1zm10 0h1v1h-1zm10 0h1v1h-1zm10 0h1v1h-1zm11 0h1v1h-1zm10 0h1v1h-1zm10 0h1v1h-1zm10 0h1v1h-1zm11 0h1v1h-1zm10 0h1v1h-1zm10 0h1v1h-1zm10 0h1v1h-1zm11 0h1v1h-1zm10 0h1v1h-1zm10 0h1v1h-1zm10 0h1v1h-1zm11 0h1v1h-1zm10 0h1v1h-1zm10 0h1v1h-1zm10 0h1v1h-1zm11 0h1v1h-1zm10 0h1v1h-1zm10 0h1v1h-1zM95 209h1v1h-1zm10 0h1v1h-1zm10 0h1v1h-1zm11 0h1v1h-1zm10 0h1v1h-1zm10 0h1v1h-1zm10 0h1v1h-1zm11 0h1v1h-1zm10 0h1v1h-1zm10 0h1v1h-1zm10 0h1v1h-1zm11 0h1v1h-1zm10 0h1v1h-1zm10 0h1v1h-1zm10 0h1v1h-1zm11 0h1v1h-1zm10 0h1v1h-1zm10 0h1v1h-1zm10 0h1v1h-1zm11 0h1v1h-1zm10 0h1v1h-1zm10 0h1v1h-1zm10 0h1v1h-1zm11 0h1v1h-1zm10 0h1v1h-1zm10 0h1v1h-1zm10 0h1v1h-1zm11 0h1v1h-1zm10 0h1v1h-1zm10 0h1v1h-1zm10 0h1v1h-1zm11 0h1v1h-1zm10 0h1v1h-1zm10 0h1v1h-1zm10 0h1v1h-1zm11 0h1v1h-1zm10 0h1v1h-1zm10 0h1v1h-1zm10 0h1v1h-1zm11 0h1v1h-1zm10 0h1v1h-1zm10 0h1v1h-1zm10 0h1v1h-1zm11 0h1v1h-1zm10 0h1v1h-1zm10 0h1v1h-1zm10 0h1v1h-1zm11 0h1v1h-1zm10 0h1v1h-1zm10 0h1v1h-1zm10 0h1v1h-1zm11 0h1v1h-1zm10 0h1v1h-1zm10 0h1v1h-1zm10 0h1v1h-1zm11 0h1v1h-1zm10 0h1v1h-1zm10 0h1v1h-1zm10 0h1v1h-1zm11 0h1v1h-1zm10 0h1v1h-1zm10 0h1v1h-1zm10 0h1v1h-1zm11 0h1v1h-1zm10 0h1v1h-1zm10 0h1v1h-1zm10 0h1v1h-1zm11 0h1v1h-1zm10 0h1v1h-1zm10 0h1v1h-1zm10 0h1v1h-1zm11 0h1v1h-1zm10 0h1v1h-1zm10 0h1v1h-1zm10 0h1v1h-1zm11 0h1v1h-1zm10 0h1v1h-1zm10 0h1v1h-1zm10 0h1v1h-1zm11 0h1v1h-1zm10 0h1v1h-1zm10 0h1v1h-1zm10 0h1v1h-1zm11 0h1v1h-1zm10 0h1v1h-1zm10 0h1v1h-1zm10 0h1v1h-1zm11 0h1v1h-1zm10 0h1v1h-1zm10 0h1v1h-1zm10 0h1v1h-1zm11 0h1v1h-1zm10 0h1v1h-1zm10 0h1v1h-1zm10 0h1v1h-1zm11 0h1v1h-1zm10 0h1v1h-1zm10 0h1v1h-1zm10 0h1v1h-1zm11 0h1v1h-1zm10 0h1v1h-1zm10 0h1v1h-1zM95 199h1v1h-1zm10 0h1v1h-1zm10 0h1v1h-1zm11 0h1v1h-1zm10 0h1v1h-1zm10 0h1v1h-1zm10 0h1v1h-1zm11 0h1v1h-1zm10 0h1v1h-1zm10 0h1v1h-1zm10 0h1v1h-1zm11 0h1v1h-1zm10 0h1v1h-1zm10 0h1v1h-1zm10 0h1v1h-1zm11 0h1v1h-1zm10 0h1v1h-1zm10 0h1v1h-1zm10 0h1v1h-1zm11 0h1v1h-1zm10 0h1v1h-1zm10 0h1v1h-1zm10 0h1v1h-1zm11 0h1v1h-1zm10 0h1v1h-1zm10 0h1v1h-1zm10 0h1v1h-1zm11 0h1v1h-1zm10 0h1v1h-1zm10 0h1v1h-1zm10 0h1v1h-1zm11 0h1v1h-1zm10 0h1v1h-1zm10 0h1v1h-1zm10 0h1v1h-1zm11 0h1v1h-1zm10 0h1v1h-1zm10 0h1v1h-1zm10 0h1v1h-1zm11 0h1v1h-1zm10 0h1v1h-1zm10 0h1v1h-1zm10 0h1v1h-1zm11 0h1v1h-1zm10 0h1v1h-1zm10 0h1v1h-1zm10 0h1v1h-1zm11 0h1v1h-1zm10 0h1v1h-1zm10 0h1v1h-1zm10 0h1v1h-1zm11 0h1v1h-1zm10 0h1v1h-1zm10 0h1v1h-1zm10 0h1v1h-1zm11 0h1v1h-1zm10 0h1v1h-1zm10 0h1v1h-1zm10 0h1v1h-1zm11 0h1v1h-1zm10 0h1v1h-1zm10 0h1v1h-1zm10 0h1v1h-1zm11 0h1v1h-1zm10 0h1v1h-1zm10 0h1v1h-1zm10 0h1v1h-1zm11 0h1v1h-1zm10 0h1v1h-1zm10 0h1v1h-1zm10 0h1v1h-1zm11 0h1v1h-1zm10 0h1v1h-1zm10 0h1v1h-1zm10 0h1v1h-1zm11 0h1v1h-1zm10 0h1v1h-1zm10 0h1v1h-1zm10 0h1v1h-1zm11 0h1v1h-1zm10 0h1v1h-1zm10 0h1v1h-1zm10 0h1v1h-1zm11 0h1v1h-1zm10 0h1v1h-1zm10 0h1v1h-1zm10 0h1v1h-1zm11 0h1v1h-1zm10 0h1v1h-1zm10 0h1v1h-1zm10 0h1v1h-1zm11 0h1v1h-1zm10 0h1v1h-1zm10 0h1v1h-1zm10 0h1v1h-1zm11 0h1v1h-1zm10 0h1v1h-1zm10 0h1v1h-1zm10 0h1v1h-1zm11 0h1v1h-1zm10 0h1v1h-1zm10 0h1v1h-1zM95 189h1v1h-1zm10 0h1v1h-1zm10 0h1v1h-1zm11 0h1v1h-1zm10 0h1v1h-1zm10 0h1v1h-1zm10 0h1v1h-1zm11 0h1v1h-1zm10 0h1v1h-1zm10 0h1v1h-1zm10 0h1v1h-1zm11 0h1v1h-1zm10 0h1v1h-1zm10 0h1v1h-1zm10 0h1v1h-1zm11 0h1v1h-1zm10 0h1v1h-1zm10 0h1v1h-1zm10 0h1v1h-1zm11 0h1v1h-1zm10 0h1v1h-1zm10 0h1v1h-1zm10 0h1v1h-1zm11 0h1v1h-1zm10 0h1v1h-1zm10 0h1v1h-1zm10 0h1v1h-1zm11 0h1v1h-1zm10 0h1v1h-1zm10 0h1v1h-1zm10 0h1v1h-1zm11 0h1v1h-1zm10 0h1v1h-1zm10 0h1v1h-1zm10 0h1v1h-1zm11 0h1v1h-1zm10 0h1v1h-1zm10 0h1v1h-1zm10 0h1v1h-1zm11 0h1v1h-1zm10 0h1v1h-1zm10 0h1v1h-1zm10 0h1v1h-1zm11 0h1v1h-1zm10 0h1v1h-1zm10 0h1v1h-1zm10 0h1v1h-1zm11 0h1v1h-1zm10 0h1v1h-1zm10 0h1v1h-1zm10 0h1v1h-1zm11 0h1v1h-1zm10 0h1v1h-1zm10 0h1v1h-1zm10 0h1v1h-1zm11 0h1v1h-1zm10 0h1v1h-1zm10 0h1v1h-1zm10 0h1v1h-1zm11 0h1v1h-1zm10 0h1v1h-1zm10 0h1v1h-1zm10 0h1v1h-1zm11 0h1v1h-1zm10 0h1v1h-1zm10 0h1v1h-1zm10 0h1v1h-1zm11 0h1v1h-1zm10 0h1v1h-1zm10 0h1v1h-1zm10 0h1v1h-1zm11 0h1v1h-1zm10 0h1v1h-1zm10 0h1v1h-1zm10 0h1v1h-1zm11 0h1v1h-1zm10 0h1v1h-1zm10 0h1v1h-1zm10 0h1v1h-1zm11 0h1v1h-1zm10 0h1v1h-1zm10 0h1v1h-1zm10 0h1v1h-1zm11 0h1v1h-1zm10 0h1v1h-1zm10 0h1v1h-1zm10 0h1v1h-1zm11 0h1v1h-1zm10 0h1v1h-1zm10 0h1v1h-1zm10 0h1v1h-1zm11 0h1v1h-1zm10 0h1v1h-1zm10 0h1v1h-1zm10 0h1v1h-1zm11 0h1v1h-1zm10 0h1v1h-1zm10 0h1v1h-1zm10 0h1v1h-1zm11 0h1v1h-1zm10 0h1v1h-1zm10 0h1v1h-1zM95 178h1v1h-1zm10 0h1v1h-1zm10 0h1v1h-1zm11 0h1v1h-1zm10 0h1v1h-1zm10 0h1v1h-1zm10 0h1v1h-1zm11 0h1v1h-1zm10 0h1v1h-1zm10 0h1v1h-1zm10 0h1v1h-1zm11 0h1v1h-1zm10 0h1v1h-1zm10 0h1v1h-1zm10 0h1v1h-1zm11 0h1v1h-1zm10 0h1v1h-1zm10 0h1v1h-1zm10 0h1v1h-1zm11 0h1v1h-1zm10 0h1v1h-1zm10 0h1v1h-1zm10 0h1v1h-1zm11 0h1v1h-1zm10 0h1v1h-1zm10 0h1v1h-1zm10 0h1v1h-1zm11 0h1v1h-1zm10 0h1v1h-1zm10 0h1v1h-1zm10 0h1v1h-1zm11 0h1v1h-1zm10 0h1v1h-1zm10 0h1v1h-1zm10 0h1v1h-1zm11 0h1v1h-1zm10 0h1v1h-1zm10 0h1v1h-1zm10 0h1v1h-1zm11 0h1v1h-1zm10 0h1v1h-1zm10 0h1v1h-1zm10 0h1v1h-1zm11 0h1v1h-1zm10 0h1v1h-1zm10 0h1v1h-1zm10 0h1v1h-1zm11 0h1v1h-1zm10 0h1v1h-1zm10 0h1v1h-1zm10 0h1v1h-1zm11 0h1v1h-1zm10 0h1v1h-1zm10 0h1v1h-1zm10 0h1v1h-1zm11 0h1v1h-1zm10 0h1v1h-1zm10 0h1v1h-1zm10 0h1v1h-1zm11 0h1v1h-1zm10 0h1v1h-1zm10 0h1v1h-1zm10 0h1v1h-1zm11 0h1v1h-1zm10 0h1v1h-1zm10 0h1v1h-1zm10 0h1v1h-1zm11 0h1v1h-1zm10 0h1v1h-1zm10 0h1v1h-1zm10 0h1v1h-1zm11 0h1v1h-1zm10 0h1v1h-1zm10 0h1v1h-1zm10 0h1v1h-1zm11 0h1v1h-1zm10 0h1v1h-1zm10 0h1v1h-1zm10 0h1v1h-1zm11 0h1v1h-1zm10 0h1v1h-1zm10 0h1v1h-1zm10 0h1v1h-1zm11 0h1v1h-1zm10 0h1v1h-1zm10 0h1v1h-1zm10 0h1v1h-1zm11 0h1v1h-1zm10 0h1v1h-1zm10 0h1v1h-1zm10 0h1v1h-1zm11 0h1v1h-1zm10 0h1v1h-1zm10 0h1v1h-1zm10 0h1v1h-1zm11 0h1v1h-1zm10 0h1v1h-1zm10 0h1v1h-1zm10 0h1v1h-1zm11 0h1v1h-1zm10 0h1v1h-1zm10 0h1v1h-1zM95 168h1v1h-1zm10 0h1v1h-1zm10 0h1v1h-1zm11 0h1v1h-1zm10 0h1v1h-1zm10 0h1v1h-1zm10 0h1v1h-1zm11 0h1v1h-1zm10 0h1v1h-1zm10 0h1v1h-1zm10 0h1v1h-1zm11 0h1v1h-1zm10 0h1v1h-1zm10 0h1v1h-1zm10 0h1v1h-1zm11 0h1v1h-1zm10 0h1v1h-1zm10 0h1v1h-1zm10 0h1v1h-1zm11 0h1v1h-1zm10 0h1v1h-1zm10 0h1v1h-1zm10 0h1v1h-1zm11 0h1v1h-1zm10 0h1v1h-1zm10 0h1v1h-1zm10 0h1v1h-1zm11 0h1v1h-1zm10 0h1v1h-1zm10 0h1v1h-1zm10 0h1v1h-1zm11 0h1v1h-1zm10 0h1v1h-1zm10 0h1v1h-1zm10 0h1v1h-1zm11 0h1v1h-1zm10 0h1v1h-1zm10 0h1v1h-1zm10 0h1v1h-1zm11 0h1v1h-1zm10 0h1v1h-1zm10 0h1v1h-1zm10 0h1v1h-1zm11 0h1v1h-1zm10 0h1v1h-1zm10 0h1v1h-1zm10 0h1v1h-1zm11 0h1v1h-1zm10 0h1v1h-1zm10 0h1v1h-1zm10 0h1v1h-1zm11 0h1v1h-1zm10 0h1v1h-1zm10 0h1v1h-1zm10 0h1v1h-1zm11 0h1v1h-1zm10 0h1v1h-1zm10 0h1v1h-1zm10 0h1v1h-1zm11 0h1v1h-1zm10 0h1v1h-1zm10 0h1v1h-1zm10 0h1v1h-1zm11 0h1v1h-1zm10 0h1v1h-1zm10 0h1v1h-1zm10 0h1v1h-1zm11 0h1v1h-1zm10 0h1v1h-1zm10 0h1v1h-1zm10 0h1v1h-1zm11 0h1v1h-1zm10 0h1v1h-1zm10 0h1v1h-1zm10 0h1v1h-1zm11 0h1v1h-1zm10 0h1v1h-1zm10 0h1v1h-1zm10 0h1v1h-1zm11 0h1v1h-1zm10 0h1v1h-1zm10 0h1v1h-1zm10 0h1v1h-1zm11 0h1v1h-1zm10 0h1v1h-1zm10 0h1v1h-1zm10 0h1v1h-1zm11 0h1v1h-1zm10 0h1v1h-1zm10 0h1v1h-1zm10 0h1v1h-1zm11 0h1v1h-1zm10 0h1v1h-1zm10 0h1v1h-1zm10 0h1v1h-1zm11 0h1v1h-1zm10 0h1v1h-1zm10 0h1v1h-1zm10 0h1v1h-1zm11 0h1v1h-1zm10 0h1v1h-1zm10 0h1v1h-1zM95 158h1v1h-1zm10 0h1v1h-1zm10 0h1v1h-1zm11 0h1v1h-1zm10 0h1v1h-1zm10 0h1v1h-1zm10 0h1v1h-1zm11 0h1v1h-1zm10 0h1v1h-1zm10 0h1v1h-1zm10 0h1v1h-1zm11 0h1v1h-1zm10 0h1v1h-1zm10 0h1v1h-1zm10 0h1v1h-1zm11 0h1v1h-1zm10 0h1v1h-1zm10 0h1v1h-1zm10 0h1v1h-1zm11 0h1v1h-1zm10 0h1v1h-1zm10 0h1v1h-1zm10 0h1v1h-1zm11 0h1v1h-1zm10 0h1v1h-1zm10 0h1v1h-1zm10 0h1v1h-1zm11 0h1v1h-1zm10 0h1v1h-1zm10 0h1v1h-1zm10 0h1v1h-1zm11 0h1v1h-1zm10 0h1v1h-1zm10 0h1v1h-1zm10 0h1v1h-1zm11 0h1v1h-1zm10 0h1v1h-1zm10 0h1v1h-1zm10 0h1v1h-1zm11 0h1v1h-1zm10 0h1v1h-1zm10 0h1v1h-1zm10 0h1v1h-1zm11 0h1v1h-1zm10 0h1v1h-1zm10 0h1v1h-1zm10 0h1v1h-1zm11 0h1v1h-1zm10 0h1v1h-1zm10 0h1v1h-1zm10 0h1v1h-1zm11 0h1v1h-1zm10 0h1v1h-1zm10 0h1v1h-1zm10 0h1v1h-1zm11 0h1v1h-1zm10 0h1v1h-1zm10 0h1v1h-1zm10 0h1v1h-1zm11 0h1v1h-1zm10 0h1v1h-1zm10 0h1v1h-1zm10 0h1v1h-1zm11 0h1v1h-1zm10 0h1v1h-1zm10 0h1v1h-1zm10 0h1v1h-1zm11 0h1v1h-1zm10 0h1v1h-1zm10 0h1v1h-1zm10 0h1v1h-1zm11 0h1v1h-1zm10 0h1v1h-1zm10 0h1v1h-1zm10 0h1v1h-1zm11 0h1v1h-1zm10 0h1v1h-1zm10 0h1v1h-1zm10 0h1v1h-1zm11 0h1v1h-1zm10 0h1v1h-1zm10 0h1v1h-1zm10 0h1v1h-1zm11 0h1v1h-1zm10 0h1v1h-1zm10 0h1v1h-1zm10 0h1v1h-1zm11 0h1v1h-1zm10 0h1v1h-1zm10 0h1v1h-1zm10 0h1v1h-1zm11 0h1v1h-1zm10 0h1v1h-1zm10 0h1v1h-1zm10 0h1v1h-1zm11 0h1v1h-1zm10 0h1v1h-1zm10 0h1v1h-1zm10 0h1v1h-1zm11 0h1v1h-1zm10 0h1v1h-1zm10 0h1v1h-1z" fill="#404040"/>
<circle cx="146.5" cy="629.5" r="5.2" stroke="#c80000" stroke-width="1" fill="none"/>
<path d="M126 629.5H167M146.5 609V650" stroke="#c80000" stroke-width="1"/>
<rect x="146.1" y="270.75" width="922.5" height="358.75" rx="20.5" stroke="#fff" stroke-width="2.6" fill="none"/>
<path d="M233.22 327.12H356.23" stroke="#a4a4a4" stroke-width="1.5" fill="none" stroke-dasharray="9.0 2.6 1.6 2.6" stroke-dashoffset="6.2"/><path d="M356.23 398.88H233.22" stroke="#a4a4a4" stroke-width="1.5" fill="none" stroke-dasharray="9.0 2.6 1.6 2.6" stroke-dashoffset="6.2"/><path d="M356.23 327.12A35.88 35.88 0 0 1 356.23 398.88" stroke="#a4a4a4" stroke-width="1.5" fill="none" stroke-dasharray="9.0 2.6 1.6 2.6" stroke-dashoffset="3.45"/><path d="M233.22 398.88A35.88 35.88 0 0 1 233.22 327.12" stroke="#a4a4a4" stroke-width="1.5" fill="none" stroke-dasharray="9.0 2.6 1.6 2.6" stroke-dashoffset="3.45"/>
<path d="M255.81 337.38L333.64 337.38A10.25 10.25 0 0 1 343.8 348.99L339.68 379.74A10.25 10.25 0 0 1 329.52 388.62L259.93 388.62A10.25 10.25 0 0 1 249.77 379.74L245.65 348.99A10.25 10.25 0 0 1 255.81 337.38Z" stroke="#fff" stroke-width="2.6" fill="none"/>
<circle cx="233.22" cy="363" r="7.79" stroke="#fff" stroke-width="2.6" fill="none"/>
<circle cx="356.23" cy="363" r="7.79" stroke="#fff" stroke-width="2.6" fill="none"/>
<path d="M186.9 363H403.2" stroke="#d80000" stroke-width="1.9" fill="none" stroke-dasharray="17.0 6.5 2.0 6.5" stroke-dashoffset="12.35"/>
<path d="M295.1 311.1V414.7" stroke="#d80000" stroke-width="1.9" fill="none" stroke-dasharray="17.0 6.5 2.0 6.5" stroke-dashoffset="4.7"/>
<circle cx="468.98" cy="363" r="38.23" stroke="#fff" stroke-width="2.6" fill="none"/>
<path d="M416.9 363H526.1" stroke="#d80000" stroke-width="1.9" fill="none" stroke-dasharray="17.0 6.5 2.0 6.5" stroke-dashoffset="1.9"/>
<path d="M469.4 311.1V414.5" stroke="#d80000" stroke-width="1.9" fill="none" stroke-dasharray="17.0 6.5 2.0 6.5" stroke-dashoffset="4.8"/>
<circle cx="576.6" cy="363" r="17.63" stroke="#fff" stroke-width="2.6" fill="none"/>
<path d="M545.4 363H607.9" stroke="#d80000" stroke-width="1.9" fill="none" stroke-dasharray="17.0 6.5 2.0 6.5" stroke-dashoffset="9.25"/>
<path d="M577 331.6V394.1" stroke="#d80000" stroke-width="1.9" fill="none" stroke-dasharray="17.0 6.5 2.0 6.5" stroke-dashoffset="9.25"/>
<path d="M250.65 472.67H492.55" stroke="#a4a4a4" stroke-width="1.5" fill="none" stroke-dasharray="9.0 2.6 1.6 2.6" stroke-dashoffset="2.05"/><path d="M492.55 581.33H250.65" stroke="#a4a4a4" stroke-width="1.5" fill="none" stroke-dasharray="9.0 2.6 1.6 2.6" stroke-dashoffset="2.05"/><path d="M492.55 472.67A54.32 54.32 0 0 1 492.55 581.33" stroke="#a4a4a4" stroke-width="1.5" fill="none" stroke-dasharray="9.0 2.6 1.6 2.6" stroke-dashoffset="6.07"/><path d="M250.65 581.33A54.32 54.32 0 0 1 250.65 472.67" stroke="#a4a4a4" stroke-width="1.5" fill="none" stroke-dasharray="9.0 2.6 1.6 2.6" stroke-dashoffset="6.07"/>
<circle cx="233.22" cy="527" r="16.2" stroke="#fff" stroke-width="2.6" fill="none"/>
<circle cx="509.98" cy="527" r="16.2" stroke="#fff" stroke-width="2.6" fill="none"/>
<path d="M288.47 494.2L454.73 494.2L454.73 543.91L439.04 543.91L425.51 559.8L317.68 559.8L304.15 543.91L288.47 543.91Z" stroke="#fff" stroke-width="2.6" fill="none" stroke-linejoin="miter"/>
<path d="M176.1 527H566.3" stroke="#d80000" stroke-width="1.9" fill="none" stroke-dasharray="17.0 6.5 2.0 6.5" stroke-dashoffset="5.4"/>
<path d="M372 454.4V599.4" stroke="#d80000" stroke-width="1.9" fill="none" stroke-dasharray="17.0 6.5 2.0 6.5" stroke-dashoffset="0"/>
<circle cx="668.85" cy="332.25" r="6.97" stroke="#fff" stroke-width="2.3" fill="none"/>
<circle cx="699.6" cy="332.25" r="6.97" stroke="#fff" stroke-width="2.3" fill="none"/>
<circle cx="730.35" cy="332.25" r="6.97" stroke="#fff" stroke-width="2.3" fill="none"/>
<circle cx="761.1" cy="332.25" r="6.97" stroke="#fff" stroke-width="2.3" fill="none"/>
<circle cx="791.85" cy="332.25" r="6.97" stroke="#fff" stroke-width="2.3" fill="none"/>
<circle cx="822.6" cy="332.25" r="6.97" stroke="#fff" stroke-width="2.3" fill="none"/>
<circle cx="853.35" cy="332.25" r="6.97" stroke="#fff" stroke-width="2.3" fill="none"/>
<circle cx="884.1" cy="332.25" r="6.97" stroke="#fff" stroke-width="2.3" fill="none"/>
<circle cx="914.85" cy="332.25" r="6.97" stroke="#fff" stroke-width="2.3" fill="none"/>
<circle cx="945.6" cy="332.25" r="6.97" stroke="#fff" stroke-width="2.3" fill="none"/>
<circle cx="976.35" cy="332.25" r="6.97" stroke="#fff" stroke-width="2.3" fill="none"/>
<circle cx="1007.1" cy="332.25" r="6.97" stroke="#fff" stroke-width="2.3" fill="none"/>
<circle cx="684.23" cy="352.75" r="6.97" stroke="#fff" stroke-width="2.3" fill="none"/>
<circle cx="714.98" cy="352.75" r="6.97" stroke="#fff" stroke-width="2.3" fill="none"/>
<circle cx="745.73" cy="352.75" r="6.97" stroke="#fff" stroke-width="2.3" fill="none"/>
<circle cx="776.48" cy="352.75" r="6.97" stroke="#fff" stroke-width="2.3" fill="none"/>
<circle cx="807.23" cy="352.75" r="6.97" stroke="#fff" stroke-width="2.3" fill="none"/>
<circle cx="837.98" cy="352.75" r="6.97" stroke="#fff" stroke-width="2.3" fill="none"/>
<circle cx="868.73" cy="352.75" r="6.97" stroke="#fff" stroke-width="2.3" fill="none"/>
<circle cx="899.48" cy="352.75" r="6.97" stroke="#fff" stroke-width="2.3" fill="none"/>
<circle cx="930.23" cy="352.75" r="6.97" stroke="#fff" stroke-width="2.3" fill="none"/>
<circle cx="960.98" cy="352.75" r="6.97" stroke="#fff" stroke-width="2.3" fill="none"/>
<circle cx="991.73" cy="352.75" r="6.97" stroke="#fff" stroke-width="2.3" fill="none"/>
<circle cx="668.85" cy="373.25" r="6.97" stroke="#fff" stroke-width="2.3" fill="none"/>
<circle cx="699.6" cy="373.25" r="6.97" stroke="#fff" stroke-width="2.3" fill="none"/>
<circle cx="730.35" cy="373.25" r="6.97" stroke="#fff" stroke-width="2.3" fill="none"/>
<circle cx="761.1" cy="373.25" r="6.97" stroke="#fff" stroke-width="2.3" fill="none"/>
<circle cx="791.85" cy="373.25" r="6.97" stroke="#fff" stroke-width="2.3" fill="none"/>
<circle cx="822.6" cy="373.25" r="6.97" stroke="#fff" stroke-width="2.3" fill="none"/>
<circle cx="853.35" cy="373.25" r="6.97" stroke="#fff" stroke-width="2.3" fill="none"/>
<circle cx="884.1" cy="373.25" r="6.97" stroke="#fff" stroke-width="2.3" fill="none"/>
<circle cx="914.85" cy="373.25" r="6.97" stroke="#fff" stroke-width="2.3" fill="none"/>
<circle cx="945.6" cy="373.25" r="6.97" stroke="#fff" stroke-width="2.3" fill="none"/>
<circle cx="976.35" cy="373.25" r="6.97" stroke="#fff" stroke-width="2.3" fill="none"/>
<circle cx="1007.1" cy="373.25" r="6.97" stroke="#fff" stroke-width="2.3" fill="none"/>
<circle cx="684.23" cy="393.75" r="6.97" stroke="#fff" stroke-width="2.3" fill="none"/>
<circle cx="714.98" cy="393.75" r="6.97" stroke="#fff" stroke-width="2.3" fill="none"/>
<circle cx="745.73" cy="393.75" r="6.97" stroke="#fff" stroke-width="2.3" fill="none"/>
<circle cx="776.48" cy="393.75" r="6.97" stroke="#fff" stroke-width="2.3" fill="none"/>
<circle cx="807.23" cy="393.75" r="6.97" stroke="#fff" stroke-width="2.3" fill="none"/>
<circle cx="837.98" cy="393.75" r="6.97" stroke="#fff" stroke-width="2.3" fill="none"/>
<circle cx="868.73" cy="393.75" r="6.97" stroke="#fff" stroke-width="2.3" fill="none"/>
<circle cx="899.48" cy="393.75" r="6.97" stroke="#fff" stroke-width="2.3" fill="none"/>
<circle cx="930.23" cy="393.75" r="6.97" stroke="#fff" stroke-width="2.3" fill="none"/>
<circle cx="960.98" cy="393.75" r="6.97" stroke="#fff" stroke-width="2.3" fill="none"/>
<circle cx="991.73" cy="393.75" r="6.97" stroke="#fff" stroke-width="2.3" fill="none"/>
<circle cx="668.85" cy="414.25" r="6.97" stroke="#fff" stroke-width="2.3" fill="none"/>
<circle cx="699.6" cy="414.25" r="6.97" stroke="#fff" stroke-width="2.3" fill="none"/>
<circle cx="730.35" cy="414.25" r="6.97" stroke="#fff" stroke-width="2.3" fill="none"/>
<circle cx="761.1" cy="414.25" r="6.97" stroke="#fff" stroke-width="2.3" fill="none"/>
<circle cx="791.85" cy="414.25" r="6.97" stroke="#fff" stroke-width="2.3" fill="none"/>
<circle cx="822.6" cy="414.25" r="6.97" stroke="#fff" stroke-width="2.3" fill="none"/>
<circle cx="853.35" cy="414.25" r="6.97" stroke="#fff" stroke-width="2.3" fill="none"/>
<circle cx="884.1" cy="414.25" r="6.97" stroke="#fff" stroke-width="2.3" fill="none"/>
<circle cx="914.85" cy="414.25" r="6.97" stroke="#fff" stroke-width="2.3" fill="none"/>
<circle cx="945.6" cy="414.25" r="6.97" stroke="#fff" stroke-width="2.3" fill="none"/>
<circle cx="976.35" cy="414.25" r="6.97" stroke="#fff" stroke-width="2.3" fill="none"/>
<circle cx="1007.1" cy="414.25" r="6.97" stroke="#fff" stroke-width="2.3" fill="none"/>
<circle cx="684.23" cy="434.75" r="6.97" stroke="#fff" stroke-width="2.3" fill="none"/>
<circle cx="714.98" cy="434.75" r="6.97" stroke="#fff" stroke-width="2.3" fill="none"/>
<circle cx="745.73" cy="434.75" r="6.97" stroke="#fff" stroke-width="2.3" fill="none"/>
<circle cx="776.48" cy="434.75" r="6.97" stroke="#fff" stroke-width="2.3" fill="none"/>
<circle cx="807.23" cy="434.75" r="6.97" stroke="#fff" stroke-width="2.3" fill="none"/>
<circle cx="837.98" cy="434.75" r="6.97" stroke="#fff" stroke-width="2.3" fill="none"/>
<circle cx="868.73" cy="434.75" r="6.97" stroke="#fff" stroke-width="2.3" fill="none"/>
<circle cx="899.48" cy="434.75" r="6.97" stroke="#fff" stroke-width="2.3" fill="none"/>
<circle cx="930.23" cy="434.75" r="6.97" stroke="#fff" stroke-width="2.3" fill="none"/>
<circle cx="960.98" cy="434.75" r="6.97" stroke="#fff" stroke-width="2.3" fill="none"/>
<circle cx="991.73" cy="434.75" r="6.97" stroke="#fff" stroke-width="2.3" fill="none"/>
<circle cx="668.85" cy="455.25" r="6.97" stroke="#fff" stroke-width="2.3" fill="none"/>
<circle cx="699.6" cy="455.25" r="6.97" stroke="#fff" stroke-width="2.3" fill="none"/>
<circle cx="730.35" cy="455.25" r="6.97" stroke="#fff" stroke-width="2.3" fill="none"/>
<circle cx="761.1" cy="455.25" r="6.97" stroke="#fff" stroke-width="2.3" fill="none"/>
<circle cx="791.85" cy="455.25" r="6.97" stroke="#fff" stroke-width="2.3" fill="none"/>
<circle cx="822.6" cy="455.25" r="6.97" stroke="#fff" stroke-width="2.3" fill="none"/>
<circle cx="684.23" cy="475.75" r="6.97" stroke="#fff" stroke-width="2.3" fill="none"/>
<circle cx="714.98" cy="475.75" r="6.97" stroke="#fff" stroke-width="2.3" fill="none"/>
<circle cx="745.73" cy="475.75" r="6.97" stroke="#fff" stroke-width="2.3" fill="none"/>
<circle cx="776.48" cy="475.75" r="6.97" stroke="#fff" stroke-width="2.3" fill="none"/>
<circle cx="807.23" cy="475.75" r="6.97" stroke="#fff" stroke-width="2.3" fill="none"/>
<circle cx="668.85" cy="496.25" r="6.97" stroke="#fff" stroke-width="2.3" fill="none"/>
<circle cx="699.6" cy="496.25" r="6.97" stroke="#fff" stroke-width="2.3" fill="none"/>
<circle cx="730.35" cy="496.25" r="6.97" stroke="#fff" stroke-width="2.3" fill="none"/>
<circle cx="761.1" cy="496.25" r="6.97" stroke="#fff" stroke-width="2.3" fill="none"/>
<circle cx="791.85" cy="496.25" r="6.97" stroke="#fff" stroke-width="2.3" fill="none"/>
<circle cx="822.6" cy="496.25" r="6.97" stroke="#fff" stroke-width="2.3" fill="none"/>
<circle cx="684.23" cy="516.75" r="6.97" stroke="#fff" stroke-width="2.3" fill="none"/>
<circle cx="714.98" cy="516.75" r="6.97" stroke="#fff" stroke-width="2.3" fill="none"/>
<circle cx="745.73" cy="516.75" r="6.97" stroke="#fff" stroke-width="2.3" fill="none"/>
<circle cx="776.48" cy="516.75" r="6.97" stroke="#fff" stroke-width="2.3" fill="none"/>
<circle cx="807.23" cy="516.75" r="6.97" stroke="#fff" stroke-width="2.3" fill="none"/>
<circle cx="668.85" cy="537.25" r="6.97" stroke="#fff" stroke-width="2.3" fill="none"/>
<circle cx="699.6" cy="537.25" r="6.97" stroke="#fff" stroke-width="2.3" fill="none"/>
<circle cx="730.35" cy="537.25" r="6.97" stroke="#fff" stroke-width="2.3" fill="none"/>
<circle cx="761.1" cy="537.25" r="6.97" stroke="#fff" stroke-width="2.3" fill="none"/>
<circle cx="791.85" cy="537.25" r="6.97" stroke="#fff" stroke-width="2.3" fill="none"/>
<circle cx="822.6" cy="537.25" r="6.97" stroke="#fff" stroke-width="2.3" fill="none"/>
<circle cx="684.23" cy="557.75" r="6.97" stroke="#fff" stroke-width="2.3" fill="none"/>
<circle cx="714.98" cy="557.75" r="6.97" stroke="#fff" stroke-width="2.3" fill="none"/>
<circle cx="745.73" cy="557.75" r="6.97" stroke="#fff" stroke-width="2.3" fill="none"/>
<circle cx="776.48" cy="557.75" r="6.97" stroke="#fff" stroke-width="2.3" fill="none"/>
<circle cx="807.23" cy="557.75" r="6.97" stroke="#fff" stroke-width="2.3" fill="none"/>
<circle cx="668.85" cy="578.25" r="6.97" stroke="#fff" stroke-width="2.3" fill="none"/>
<circle cx="699.6" cy="578.25" r="6.97" stroke="#fff" stroke-width="2.3" fill="none"/>
<circle cx="730.35" cy="578.25" r="6.97" stroke="#fff" stroke-width="2.3" fill="none"/>
<circle cx="761.1" cy="578.25" r="6.97" stroke="#fff" stroke-width="2.3" fill="none"/>
<circle cx="791.85" cy="578.25" r="6.97" stroke="#fff" stroke-width="2.3" fill="none"/>
<circle cx="822.6" cy="578.25" r="6.97" stroke="#fff" stroke-width="2.3" fill="none"/>
<rect x="858.99" y="465.5" width="158.88" height="112.75" rx="18.45" stroke="#fff" stroke-width="2.6" fill="none"/>
<path d="M845.3 522H1030.5" stroke="#d80000" stroke-width="1.9" fill="none" stroke-dasharray="17.0 6.5 2.0 6.5" stroke-dashoffset="11.9"/>
<path d="M938 444.7V590.7" stroke="#d80000" stroke-width="1.9" fill="none" stroke-dasharray="17.0 6.5 2.0 6.5" stroke-dashoffset="15.5"/></svg><svg class="a" style="left:72px;top:131px" width="1082" height="617" viewBox="72 131 1082 617"><path d="M105.5 148V155M115.5 152V155M125.5 148V155M135.5 152V155M146.5 148V155M156.5 152V155M166.5 148V155M176.5 152V155M187.5 148V155M197.5 152V155M207.5 148V155M217.5 152V155M228.5 148V155M238.5 152V155M248.5 148V155M258.5 152V155M269.5 148V155M279.5 152V155M289.5 148V155M299.5 152V155M310.5 148V155M320.5 152V155M330.5 148V155M340.5 152V155M351.5 148V155M361.5 152V155M371.5 148V155M381.5 152V155M392.5 148V155M402.5 152V155M412.5 148V155M422.5 152V155M433.5 148V155M443.5 152V155M453.5 148V155M463.5 152V155M474.5 148V155M484.5 152V155M494.5 148V155M504.5 152V155M515.5 148V155M525.5 152V155M535.5 148V155M545.5 152V155M556.5 148V155M566.5 152V155M576.5 148V155M586.5 152V155M597.5 148V155M607.5 152V155M617.5 148V155M627.5 152V155M638.5 148V155M648.5 152V155M658.5 148V155M668.5 152V155M679.5 148V155M689.5 152V155M699.5 148V155M709.5 152V155M720.5 148V155M730.5 152V155M740.5 148V155M750.5 152V155M761.5 148V155M771.5 152V155M781.5 148V155M791.5 152V155M802.5 148V155M812.5 152V155M822.5 148V155M832.5 152V155M843.5 148V155M853.5 152V155M863.5 148V155M873.5 152V155M884.5 148V155M894.5 152V155M904.5 148V155M914.5 152V155M925.5 148V155M935.5 152V155M945.5 148V155M955.5 152V155M966.5 148V155M976.5 152V155M986.5 148V155M996.5 152V155M1007.5 148V155M1017.5 152V155M1027.5 148V155M1037.5 152V155M1048.5 148V155M1058.5 152V155M1068.5 148V155M1078.5 152V155M1089.5 148V155M1099.5 152V155M1109.5 148V155M1119.5 152V155M1130.5 148V155M88 732.5H95M92 721.5H95M88 711.5H95M92 701.5H95M88 691.5H95M92 680.5H95M88 670.5H95M92 660.5H95M88 650.5H95M92 639.5H95M88 629.5H95M92 619.5H95M88 609.5H95M92 598.5H95M88 588.5H95M92 578.5H95M88 568.5H95M92 557.5H95M88 547.5H95M92 537.5H95M88 527.5H95M92 516.5H95M88 506.5H95M92 496.5H95M88 486.5H95M92 475.5H95M88 465.5H95M92 455.5H95M88 445.5H95M92 434.5H95M88 424.5H95M92 414.5H95M88 404.5H95M92 393.5H95M88 383.5H95M92 373.5H95M88 363.5H95M92 352.5H95M88 342.5H95M92 332.5H95M88 322.5H95M92 311.5H95M88 301.5H95M92 291.5H95M88 281.5H95M92 270.5H95M88 260.5H95M92 250.5H95M88 240.5H95M92 229.5H95M88 219.5H95M92 209.5H95M88 199.5H95M92 188.5H95M88 178.5H95M92 168.5H95M88 158.5H95" stroke="#5a5a5a" stroke-width="1"/><defs><clipPath id="cVR"><rect x="70" y="155" width="25" height="577"/></clipPath></defs><g font-family="Liberation Sans" font-size="10" fill="#1a1a1a"><text x="105.5" y="141.2" text-anchor="middle">-4</text><text x="125.5" y="141.2" text-anchor="middle">-2</text><text x="146.5" y="141.2" text-anchor="middle">0</text><text x="166.5" y="141.2" text-anchor="middle">2</text><text x="187.5" y="141.2" text-anchor="middle">4</text><text x="207.5" y="141.2" text-anchor="middle">6</text><text x="228.5" y="141.2" text-anchor="middle">8</text><text x="248.5" y="141.2" text-anchor="middle">10</text><text x="269.5" y="141.2" text-anchor="middle">12</text><text x="289.5" y="141.2" text-anchor="middle">14</text><text x="310.5" y="141.2" text-anchor="middle">16</text><text x="330.5" y="141.2" text-anchor="middle">18</text><text x="351.5" y="141.2" text-anchor="middle">20</text><text x="371.5" y="141.2" text-anchor="middle">22</text><text x="392.5" y="141.2" text-anchor="middle">24</text><text x="412.5" y="141.2" text-anchor="middle">26</text><text x="433.5" y="141.2" text-anchor="middle">28</text><text x="453.5" y="141.2" text-anchor="middle">30</text><text x="474.5" y="141.2" text-anchor="middle">32</text><text x="494.5" y="141.2" text-anchor="middle">34</text><text x="515.5" y="141.2" text-anchor="middle">36</text><text x="535.5" y="141.2" text-anchor="middle">38</text><text x="556.5" y="141.2" text-anchor="middle">40</text><text x="576.5" y="141.2" text-anchor="middle">42</text><text x="597.5" y="141.2" text-anchor="middle">44</text><text x="617.5" y="141.2" text-anchor="middle">46</text><text x="638.5" y="141.2" text-anchor="middle">48</text><text x="658.5" y="141.2" text-anchor="middle">50</text><text x="679.5" y="141.2" text-anchor="middle">52</text><text x="699.5" y="141.2" text-anchor="middle">54</text><text x="720.5" y="141.2" text-anchor="middle">56</text><text x="740.5" y="141.2" text-anchor="middle">58</text><text x="761.5" y="141.2" text-anchor="middle">60</text><text x="781.5" y="141.2" text-anchor="middle">62</text><text x="802.5" y="141.2" text-anchor="middle">64</text><text x="822.5" y="141.2" text-anchor="middle">66</text><text x="843.5" y="141.2" text-anchor="middle">68</text><text x="863.5" y="141.2" text-anchor="middle">70</text><text x="884.5" y="141.2" text-anchor="middle">72</text><text x="904.5" y="141.2" text-anchor="middle">74</text><text x="925.5" y="141.2" text-anchor="middle">76</text><text x="945.5" y="141.2" text-anchor="middle">78</text><text x="966.5" y="141.2" text-anchor="middle">80</text><text x="986.5" y="141.2" text-anchor="middle">82</text><text x="1007.5" y="141.2" text-anchor="middle">84</text><text x="1027.5" y="141.2" text-anchor="middle">86</text><text x="1048.5" y="141.2" text-anchor="middle">88</text><text x="1068.5" y="141.2" text-anchor="middle">90</text><text x="1089.5" y="141.2" text-anchor="middle">92</text><text x="1109.5" y="141.2" text-anchor="middle">94</text><text x="1130.5" y="141.2" text-anchor="middle">96</text></g><g font-family="Liberation Sans" font-size="10" fill="#1a1a1a" clip-path="url(#cVR)"><text transform="translate(81.2 732.5) rotate(-90)" text-anchor="middle">-10</text><text transform="translate(81.2 711.5) rotate(-90)" text-anchor="middle">-8</text><text transform="translate(81.2 691.5) rotate(-90)" text-anchor="middle">-6</text><text transform="translate(81.2 670.5) rotate(-90)" text-anchor="middle">-4</text><text transform="translate(81.2 650.5) rotate(-90)" text-anchor="middle">-2</text><text transform="translate(81.2 629.5) rotate(-90)" text-anchor="middle">0</text><text transform="translate(81.2 609.5) rotate(-90)" text-anchor="middle">2</text><text transform="translate(81.2 588.5) rotate(-90)" text-anchor="middle">4</text><text transform="translate(81.2 568.5) rotate(-90)" text-anchor="middle">6</text><text transform="translate(81.2 547.5) rotate(-90)" text-anchor="middle">8</text><text transform="translate(81.2 527.5) rotate(-90)" text-anchor="middle">10</text><text transform="translate(81.2 506.5) rotate(-90)" text-anchor="middle">12</text><text transform="translate(81.2 486.5) rotate(-90)" text-anchor="middle">14</text><text transform="translate(81.2 465.5) rotate(-90)" text-anchor="middle">16</text><text transform="translate(81.2 445.5) rotate(-90)" text-anchor="middle">18</text><text transform="translate(81.2 424.5) rotate(-90)" text-anchor="middle">20</text><text transform="translate(81.2 404.5) rotate(-90)" text-anchor="middle">22</text><text transform="translate(81.2 383.5) rotate(-90)" text-anchor="middle">24</text><text transform="translate(81.2 363.5) rotate(-90)" text-anchor="middle">26</text><text transform="translate(81.2 342.5) rotate(-90)" text-anchor="middle">28</text><text transform="translate(81.2 322.5) rotate(-90)" text-anchor="middle">30</text><text transform="translate(81.2 301.5) rotate(-90)" text-anchor="middle">32</text><text transform="translate(81.2 281.5) rotate(-90)" text-anchor="middle">34</text><text transform="translate(81.2 260.5) rotate(-90)" text-anchor="middle">36</text><text transform="translate(81.2 240.5) rotate(-90)" text-anchor="middle">38</text><text transform="translate(81.2 219.5) rotate(-90)" text-anchor="middle">40</text><text transform="translate(81.2 199.5) rotate(-90)" text-anchor="middle">42</text><text transform="translate(81.2 178.5) rotate(-90)" text-anchor="middle">44</text><text transform="translate(81.2 158.5) rotate(-90)" text-anchor="middle">46</text></g><path d="M121.5 145 H133 L127.25 151 Z" fill="#000"/><path d="M85 415.2 V427 L91 421 Z" fill="#000"/></svg><div class="a" style="left:70px;top:748px;width:1084px;height:50px;background:#ececec;border-top:1px solid #c4c4c4;border-left:2px solid #c6c6c6"></div><div class="a" style="left:72px;top:749px;width:1081px;height:22px;background:#fff;border-bottom:1px solid #cfcfcf;border-right:1px solid #dadada"></div><div class="a" style="left:1144px;top:750px;width:7px;height:18px;background:#888;border-radius:0 0 3.5px 3.5px"></div><div class="t" style="left:77px;top:752px;font-size:13.5px;color:#1a1ad0;"><i>Opdracht:</i> selectionmenu</div><div class="t" style="left:73px;top:778.5px;font-size:13.5px;color:#111;">Opdracht:</div><div class="a" style="left:137px;top:776px;width:990px;height:18px;background:#fff"></div><div class="a" style="left:1127px;top:772px;width:26px;height:26px;background:linear-gradient(#f0f0f0,#e6e6e6);border:1px solid #c2c2c2"></div><svg class="a" style="left:1133px;top:780px" width="15" height="11" viewBox="0 0 15 11"><rect x="0.5" y="0.5" width="14" height="10" fill="#eee" stroke="#222" stroke-width="1"/><rect x="0" y="0" width="15" height="3" fill="#000"/><rect x="10" y="1" width="1" height="1" fill="#fff"/></svg><div class="a" style="left:1154px;top:108px;width:301px;height:690px;background:#ececec"></div><div class="a" style="left:1154px;top:108px;width:301px;height:23px;background:linear-gradient(#ededed,#dcdcdc)"></div><div class="t" style="left:1297px;top:113px;font-size:12px;color:#222;">Lagenlijst</div><div class="a" style="left:1155px;top:131px;width:300px;height:26px;background:#a9a9a9"></div><div class="a" style="left:1156.0px;top:132px;width:58.2px;height:24px;background:linear-gradient(#f6f6f6,#e9e9e9)"></div><div class="a" style="left:1215.8px;top:132px;width:58.2px;height:24px;background:linear-gradient(#f6f6f6,#e9e9e9)"></div><div class="a" style="left:1275.6px;top:132px;width:58.2px;height:24px;background:linear-gradient(#f6f6f6,#e9e9e9)"></div><div class="a" style="left:1335.4px;top:132px;width:58.2px;height:24px;background:linear-gradient(#f6f6f6,#e9e9e9)"></div><div class="a" style="left:1395.2px;top:132px;width:58.2px;height:24px;background:linear-gradient(#f6f6f6,#e9e9e9)"></div><div class="a" style="left:1155px;top:157px;width:300px;height:641px;background:#fff;border-left:1px solid #cfcfcf;border-right:1px solid #d8d8d8"></div><div class="a" style="left:1161px;top:162.5px;width:16px;height:9px;background:#000;border:1px solid #333"></div><div class="t" style="left:1183px;top:159.8px;font-size:13.4px;color:#111;">0</div><div class="a" style="left:1161px;top:182.5px;width:16px;height:9px;background:#f00;border:1px solid #333"></div><div class="t" style="left:1183px;top:179.8px;font-size:13.4px;color:#111;">Midden</div><div class="a" style="left:1161px;top:202.5px;width:16px;height:9px;background:#a0a0a8;border:1px solid #333"></div><div class="t" style="left:1183px;top:199.8px;font-size:13.4px;color:#111;">Terug</div><div class="a" style="left:1161px;top:222.5px;width:16px;height:9px;background:#000;border:1px solid #333"></div><div class="t" style="left:1183px;top:219.8px;font-size:13.4px;color:#111;">Ventilatie</div><div class="a" style="left:1454px;top:108px;width:46px;height:690px;background:linear-gradient(90deg,#f0f0f0,#dedede 60%,#c4c4c4 93%,#dadada 94%,#e2e2e2)"></div><div class="a" style="left:1456.5px;top:120px;width:41.5px;height:42px;background:#b9b9b9;border-radius:6px"></div><div class="a" style="left:1456.5px;top:417px;width:41.5px;height:42.5px;background:#b9b9b9;border-radius:6px"></div><svg class="a" style="left:1154px;top:108px" width="346" height="690" viewBox="1154 108 346 690"><circle cx="1164" cy="118" r="7" fill="#6e6e6e"/><path d="M1161 115 L1167 121 M1167 115 L1161 121" stroke="#fff" stroke-width="1.8"/><circle cx="1182" cy="118" r="7" fill="#6e6e6e"/><rect x="1180.5" y="114.5" width="5" height="4" fill="none" stroke="#fff" stroke-width="1.1"/><rect x="1178.5" y="117.5" width="5" height="4" fill="#6e6e6e" stroke="#fff" stroke-width="1.1"/><g transform="translate(1184.7 143) scale(1.0)"><path d="M-7.6 -0.6 Q-4.5 -6.3 0.3 -6.2 Q5 -6.1 7.6 -0.8 Q5.5 5 0.3 5.4 Q-5 5.2 -7.6 -0.6 Z" fill="#000"/><path d="M-4.8 0.4 Q-2.6 -2.2 0.2 -2.2 Q3.2 -2.2 5 0 Q3.4 3.4 0.2 3.4 Q-2.8 3.4 -4.8 0.4 Z" fill="#fff"/><circle cx="0.2" cy="-1.2" r="2.4" fill="#000"/><circle cx="-0.5" cy="-1.8" r="0.55" fill="#fff"/></g><g transform="translate(1244.7 143) scale(1.0)"><path d="M-7.6 -0.6 Q-4.5 -6.3 0.3 -6.2 Q5 -6.1 7.6 -0.8 Q5.5 5 0.3 5.4 Q-5 5.2 -7.6 -0.6 Z" fill="#a8a8a8"/><path d="M-4.8 0.4 Q-2.6 -2.2 0.2 -2.2 Q3.2 -2.2 5 0 Q3.4 3.4 0.2 3.4 Q-2.8 3.4 -4.8 0.4 Z" fill="#fff"/><circle cx="0.2" cy="-1.2" r="2.4" fill="#a8a8a8"/><circle cx="-0.5" cy="-1.8" r="0.55" fill="#fff"/></g><path d="M1299 142.7 H1311 M1305 136.7 V148.7" stroke="#8a0000" stroke-width="4.2"/><path d="M1299.5 142.7 H1310.5 M1305 137.2 V148.2" stroke="#e00000" stroke-width="3"/><path d="M1359 142.7 H1371" stroke="#8a0000" stroke-width="4.2"/><path d="M1359.5 142.7 H1370.5" stroke="#e00000" stroke-width="3"/><g transform="translate(1418 149.5) rotate(-41.85504253530181)"><path d="M0 0 L4 -1.4 H16.3331321828617 V1.4 H4 Z" fill="#e8b040" stroke="#8a6020" stroke-width="0.6"/><rect x="16.3331321828617" y="-1.4" width="3" height="2.8" fill="#e03030"/><path d="M0 0 L2 -0.8 V0.8 Z" fill="#333"/></g><g transform="translate(1422.8 166.6) scale(0.98)"><path d="M-7.6 -0.6 Q-4.5 -6.3 0.3 -6.2 Q5 -6.1 7.6 -0.8 Q5.5 5 0.3 5.4 Q-5 5.2 -7.6 -0.6 Z" fill="#000"/><path d="M-4.8 0.4 Q-2.6 -2.2 0.2 -2.2 Q3.2 -2.2 5 0 Q3.4 3.4 0.2 3.4 Q-2.8 3.4 -4.8 0.4 Z" fill="#fff"/><circle cx="0.2" cy="-1.2" r="2.4" fill="#000"/><circle cx="-0.5" cy="-1.8" r="0.55" fill="#fff"/></g><path d="M1440.9 166.29999999999998 v-2 a4 4 0 0 1 8 0 v2" fill="none" stroke="#c4c4c4" stroke-width="1.4"/><rect x="1439.9" y="166.29999999999998" width="10" height="7.6" fill="#c4c4c4"/><g transform="translate(1422.8 186.6) scale(0.98)"><path d="M-7.6 -0.6 Q-4.5 -6.3 0.3 -6.2 Q5 -6.1 7.6 -0.8 Q5.5 5 0.3 5.4 Q-5 5.2 -7.6 -0.6 Z" fill="#000"/><path d="M-4.8 0.4 Q-2.6 -2.2 0.2 -2.2 Q3.2 -2.2 5 0 Q3.4 3.4 0.2 3.4 Q-2.8 3.4 -4.8 0.4 Z" fill="#fff"/><circle cx="0.2" cy="-1.2" r="2.4" fill="#000"/><circle cx="-0.5" cy="-1.8" r="0.55" fill="#fff"/></g><path d="M1440.9 186.29999999999998 v-2 a4 4 0 0 1 8 0 v2" fill="none" stroke="#c4c4c4" stroke-width="1.4"/><rect x="1439.9" y="186.29999999999998" width="10" height="7.6" fill="#c4c4c4"/><g transform="translate(1422.8 206.6) scale(0.98)"><path d="M-7.6 -0.6 Q-4.5 -6.3 0.3 -6.2 Q5 -6.1 7.6 -0.8 Q5.5 5 0.3 5.4 Q-5 5.2 -7.6 -0.6 Z" fill="#000"/><path d="M-4.8 0.4 Q-2.6 -2.2 0.2 -2.2 Q3.2 -2.2 5 0 Q3.4 3.4 0.2 3.4 Q-2.8 3.4 -4.8 0.4 Z" fill="#fff"/><circle cx="0.2" cy="-1.2" r="2.4" fill="#000"/><circle cx="-0.5" cy="-1.8" r="0.55" fill="#fff"/></g><path d="M1440.9 206.29999999999998 v-2 a4 4 0 0 1 8 0 v2" fill="none" stroke="#c4c4c4" stroke-width="1.4"/><rect x="1439.9" y="206.29999999999998" width="10" height="7.6" fill="#c4c4c4"/><g transform="translate(1422.8 226.6) scale(0.98)"><path d="M-7.6 -0.6 Q-4.5 -6.3 0.3 -6.2 Q5 -6.1 7.6 -0.8 Q5.5 5 0.3 5.4 Q-5 5.2 -7.6 -0.6 Z" fill="#000"/><path d="M-4.8 0.4 Q-2.6 -2.2 0.2 -2.2 Q3.2 -2.2 5 0 Q3.4 3.4 0.2 3.4 Q-2.8 3.4 -4.8 0.4 Z" fill="#fff"/><circle cx="0.2" cy="-1.2" r="2.4" fill="#000"/><circle cx="-0.5" cy="-1.8" r="0.55" fill="#fff"/></g><path d="M1440.9 226.29999999999998 v-2 a4 4 0 0 1 8 0 v2" fill="none" stroke="#c4c4c4" stroke-width="1.4"/><rect x="1439.9" y="226.29999999999998" width="10" height="7.6" fill="#c4c4c4"/><g transform="translate(1394 213.5) rotate(-43.31531568210369)"><path d="M0 0 L4 -1.3 H16.2416215532891 V1.3 H4 Z" fill="#e8b040" stroke="#8a6020" stroke-width="0.6"/><rect x="16.2416215532891" y="-1.3" width="3" height="2.6" fill="#e03030"/><path d="M0 0 L2 -0.8 V0.8 Z" fill="#333"/></g><rect x="1462" y="116" width="2" height="2" fill="#a8a8a8"/><rect x="1468" y="116" width="2" height="2" fill="#a8a8a8"/><rect x="1474" y="116" width="2" height="2" fill="#a8a8a8"/><rect x="1480" y="116" width="2" height="2" fill="#a8a8a8"/><rect x="1486" y="116" width="2" height="2" fill="#a8a8a8"/><path d="M1457 261.5 H1500 M1457 409.5 H1500" stroke="#666" stroke-width="1" stroke-dasharray="1 2"/><rect x="1464.0" y="128.0" width="27" height="27" fill="#fff" stroke="#333" stroke-width="1"/><rect x="1464.0" y="128.0" width="27" height="4.5" fill="#000"/><rect x="1465.0" y="129.0" width="3" height="3" fill="#fff"/><path d="M1470 149 V140 L1477 136 V145 Z" fill="#888" stroke="#333" stroke-width="0.7"/><path d="M1473 150 V140 L1483 135.5 V145.5 Z" fill="#fff" stroke="#333" stroke-width="0.7"/><path d="M1476 146 L1481 139 V145 Z" fill="none" stroke="#f04040" stroke-width="0.8"/><rect x="1464.0" y="175.0" width="27" height="27" fill="#fff" stroke="#333" stroke-width="1"/><rect x="1464.0" y="175.0" width="27" height="4.5" fill="#000"/><rect x="1465.0" y="176.0" width="3" height="3" fill="#fff"/><rect x="1469.5" y="182.5" width="11" height="8" fill="#f4e8b8" stroke="#666" stroke-width="0.8"/><circle cx="1481" cy="191" r="4.3" fill="#f4e8b8" stroke="#666" stroke-width="0.8"/><rect x="1464.0" y="220.5" width="27" height="27" fill="#fff" stroke="#333" stroke-width="1"/><rect x="1464.0" y="220.5" width="27" height="4.5" fill="#000"/><rect x="1465.0" y="221.5" width="3" height="3" fill="#fff"/><rect x="1469.5" y="230" width="16" height="12" rx="2" fill="#f6f6f6" stroke="#b8c8e8" stroke-width="0.8"/><rect x="1464.0" y="276.5" width="27" height="27" fill="#fff" stroke="#333" stroke-width="1"/><rect x="1464.0" y="276.5" width="27" height="4.5" fill="#000"/><rect x="1465.0" y="277.5" width="3" height="3" fill="#fff"/><path d="M1469 286 h3 v2 h-3z M1469 290 h3 v2 h-3z M1469 294 h3 v2 h-3z" fill="#111"/><path d="M1474.5 286.5 h10 v1.5 h-10z M1474.5 290.5 h10 v1.5 h-10z M1474.5 294.5 h10 v1.5 h-10z" fill="none" stroke="#333" stroke-width="0.7"/><rect x="1464.0" y="322.5" width="27" height="27" fill="#fff" stroke="#333" stroke-width="1"/><rect x="1464.0" y="322.5" width="27" height="4.5" fill="#000"/><rect x="1465.0" y="323.5" width="3" height="3" fill="#fff"/><path d="M1470 333 H1484 L1479 339 V345 L1475 347 V339 Z" fill="#aaa" stroke="#555" stroke-width="0.7"/><rect x="1464.0" y="368.5" width="27" height="27" fill="#fff" stroke="#333" stroke-width="1"/><rect x="1464.0" y="368.5" width="27" height="4.5" fill="#000"/><rect x="1465.0" y="369.5" width="3" height="3" fill="#fff"/><rect x="1472" y="378" width="10" height="9" fill="#cfcfcf" stroke="#555" stroke-width="0.7"/><path d="M1468 382.5 H1486" stroke="#f08080" stroke-width="0.8" stroke-dasharray="1.5 1"/><path d="M1472 378 L1469 375 V390 L1472 387" fill="none" stroke="#555" stroke-width="0.7"/><rect x="1464.0" y="425.0" width="27" height="27" fill="#fff" stroke="#333" stroke-width="1"/><rect x="1464.0" y="425.0" width="27" height="4.5" fill="#000"/><rect x="1465.0" y="426.0" width="3" height="3" fill="#fff"/><path d="M1467 432 h12 M1467 435 h12 M1467 438 h13 M1467 441 h12" stroke="#888" stroke-width="0.8"/><path d="M1464 447.5 H1490.5" stroke="#333" stroke-width="0.7"/><rect x="1464.0" y="471.5" width="27" height="27" fill="#fff" stroke="#333" stroke-width="1"/><rect x="1464.0" y="471.5" width="27" height="4.5" fill="#000"/><rect x="1465.0" y="472.5" width="3" height="3" fill="#fff"/><rect x="1471" y="478" width="12" height="16" rx="1" fill="#c98a2a" stroke="#8a5a1a" stroke-width="0.7"/><rect x="1473" y="480.5" width="8" height="12" fill="#f4f4f4"/><rect x="1474" y="476.5" width="6" height="3" fill="#999"/></svg><div class="a" style="left:0px;top:798px;width:1500px;height:46px;background:#dadada;border-top:1px solid #cfcfcf"></div><div class="t" style="left:2px;top:808px;font-size:10px;color:#222;letter-spacing:0.08px">-1.878,20.3415</div><div class="t" style="left:2px;top:828px;font-size:10px;color:#222;letter-spacing:0.08px">@-1.878,20.3415</div><div class="a" style="left:253px;top:802px;width:1px;height:40px;background:#8a8a8a"></div><div class="t" style="left:256px;top:808px;font-size:10px;color:#222;letter-spacing:0.08px">20.428&lt;95.27°</div><div class="t" style="left:256px;top:828px;font-size:10px;color:#222;letter-spacing:0.08px">@20.428&lt;95.27°</div><div class="t" style="left:572.4px;top:817px;font-size:10px;color:#222;letter-spacing:0.17px">Object of gebied selecteren</div><div class="t" style="left:949px;top:817px;font-size:10px;color:#222;letter-spacing:0.1px">Geen objecten geselecteerd.</div><div class="a" style="left:506px;top:819px;width:6px;height:6px;background:#c2c2c2;border-radius:3px"></div><div class="a" style="left:939.5px;top:819px;width:6px;height:6px;background:#c2c2c2;border-radius:3px"></div><div class="a" style="left:1269px;top:819px;width:6px;height:6px;background:#c2c2c2;border-radius:3px"></div><svg class="a" style="left:716px;top:805px" width="21" height="33" viewBox="0 0 21 33"><rect x="1.5" y="1.5" width="17" height="29" rx="8.5" fill="#fafafa" stroke="#444" stroke-width="1"/><path d="M1.5 13.5 H18.5" stroke="#444" stroke-width="1"/><rect x="8.6" y="3.5" width="2.8" height="8" rx="1.4" fill="none" stroke="#444" stroke-width="0.9"/></svg><svg class="a" style="left:0;top:0" width="300" height="844" viewBox="0 0 300 844"><defs><radialGradient id="gClick"><stop offset="0" stop-color="#7090b8" stop-opacity="0.05"/><stop offset="0.7" stop-color="#7090b8" stop-opacity="0.12"/><stop offset="0.86" stop-color="#5a7ca4" stop-opacity="0.40"/><stop offset="0.93" stop-color="#5a7ca4" stop-opacity="0.42"/><stop offset="1" stop-color="#5a7ca4" stop-opacity="0.05"/></radialGradient></defs><path d="M36 225 V277 M71 225 V277 M28 234.5 H79 M28 268.5 H79" stroke="#ff4040" stroke-width="1" opacity="0.55"/><circle cx="60.5" cy="254.5" r="38.5" fill="url(#gClick)"/><path d="M62 258 V280.5 L67 275.8 L71 284.5 L74.3 283 L70.5 274.5 L77.3 274.5 Z" fill="#fff" stroke="#000" stroke-width="1.2" stroke-linejoin="round"/></svg><div class="a" style="left:48px;top:286px;width:134px;height:24px;background:linear-gradient(#f4f6f9,#e2e6ec);border:1px solid #c8ccd2;border-radius:3px"></div><div class="t" style="left:53px;top:291px;font-size:14px;color:#111;">Veelhoek selecteren</div></body></html>
